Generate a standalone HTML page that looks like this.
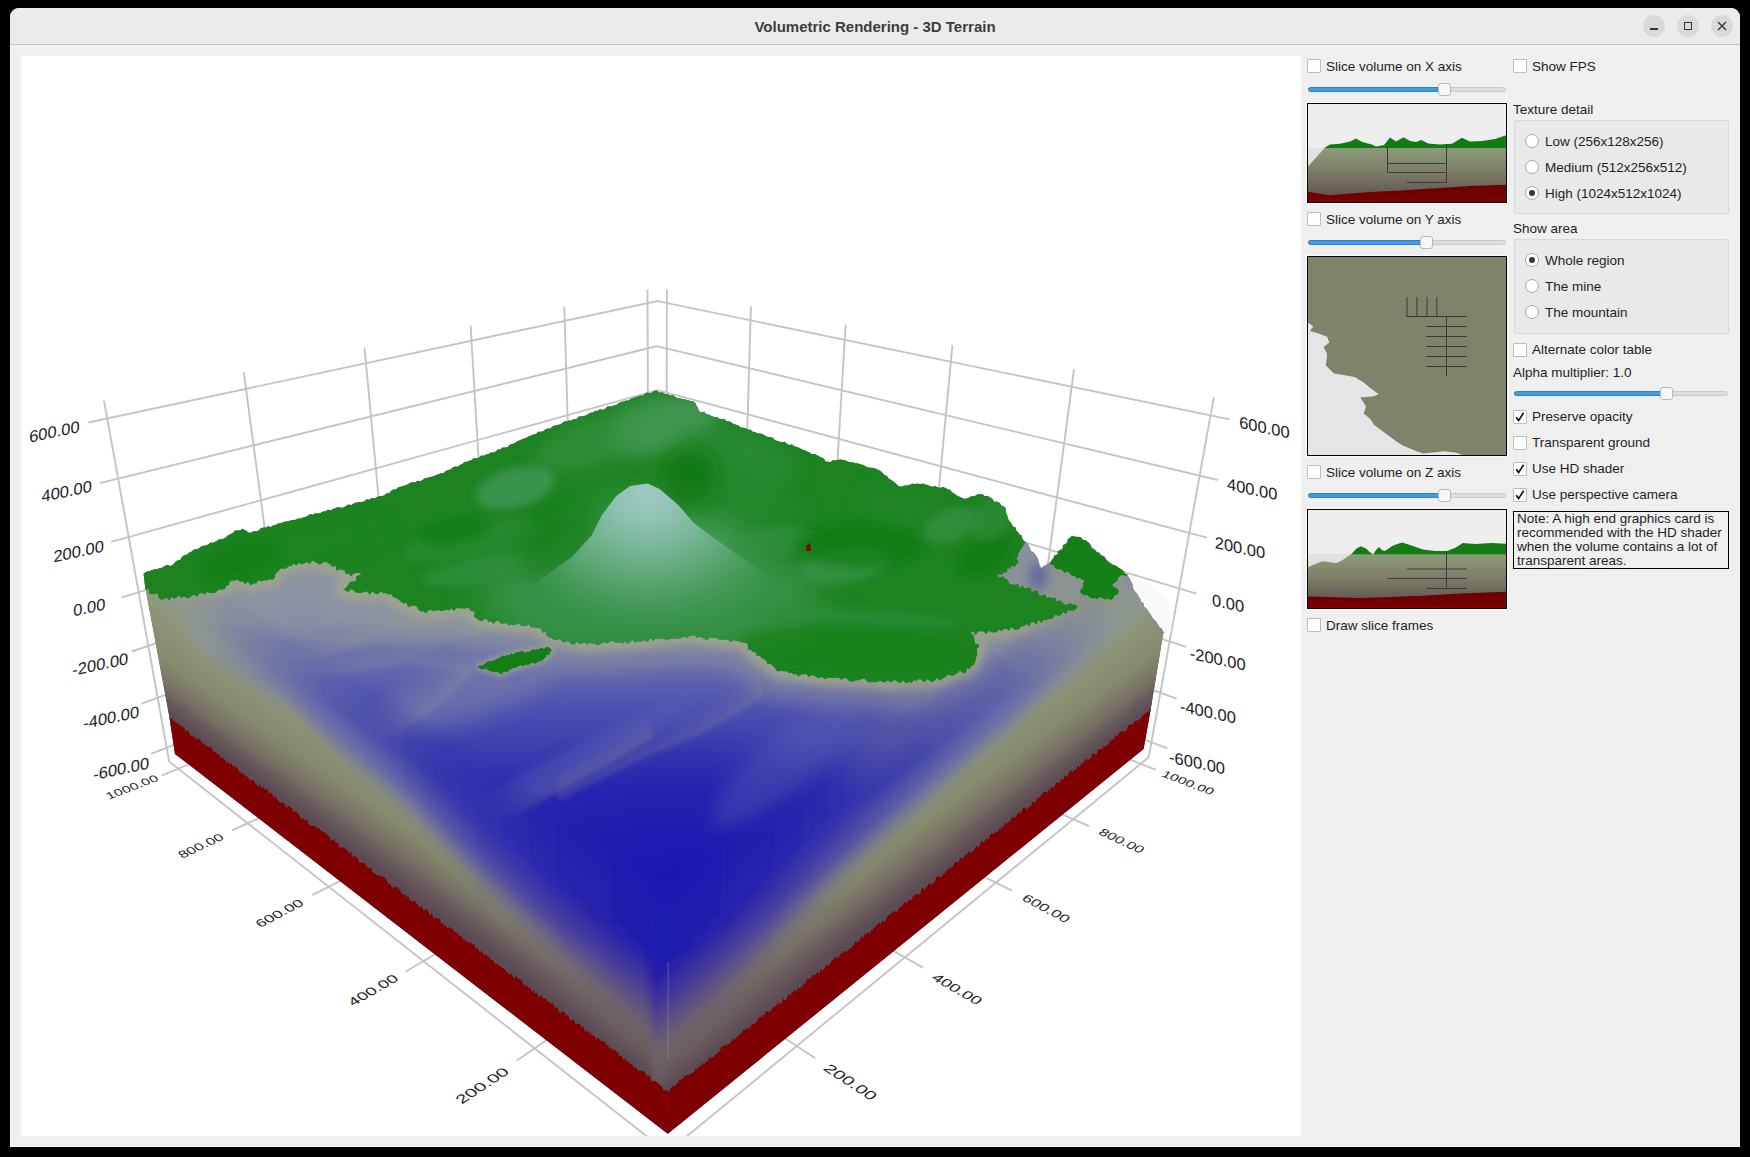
<!DOCTYPE html>
<html><head><meta charset="utf-8"><style>
html,body{margin:0;padding:0;width:1750px;height:1157px;overflow:hidden;background:#000;}
*{box-sizing:border-box;}
body{font-family:"Liberation Sans",sans-serif;position:relative;}
#win{position:absolute;left:10px;top:8px;width:1730px;height:1139px;background:#efefef;border-radius:9px 9px 0 0;overflow:hidden;}
#tb{position:absolute;left:10px;top:8px;width:1730px;height:37px;background:#ebebeb;border-bottom:1px solid #c6c6c6;border-radius:9px 9px 0 0;}
#title{position:absolute;left:0;width:1730px;top:10px;text-align:center;font-weight:bold;font-size:15px;color:#3d3d3d;line-height:17px;}
.wb{position:absolute;top:7px;width:22px;height:22px;border-radius:11px;background:#d9d9d9;}
#plot{position:absolute;left:21px;top:56px;width:1280px;height:1080px;background:#fff;overflow:hidden;}
.t{position:absolute;font-size:13.5px;color:#1e1e1e;white-space:nowrap;line-height:16px;}
.cb{position:absolute;width:14px;height:14px;background:#fff;border:1px solid #bcbcbc;border-radius:1px;}
.rb{position:absolute;width:14px;height:14px;background:#fff;border:1px solid #a9a9a9;border-radius:50%;}
.rb.on::after{content:"";position:absolute;left:3px;top:3px;width:6px;height:6px;border-radius:50%;background:#353535;}
.sl{position:absolute;height:5px;border-radius:3px;background:#dedede;border:1px solid #cacaca;}
.sl .f{position:absolute;left:-1px;top:-1px;height:5px;border-radius:3px;background:#3f9be3;border:1px solid #2f80c4;}
.sl .h{position:absolute;top:-5px;width:13px;height:13px;border-radius:3px;background:#f7f7f7;border:1px solid #b8b8b8;}
.grp{position:absolute;background:#e9e9e9;border:1px solid #d8d8d8;border-radius:2px;}
.prev{position:absolute;overflow:hidden;}
</style></head><body>
<div id="win"></div>
<div style="position:absolute;left:10px;top:44px;width:1px;height:1103px;background:#fafafa"></div>
<div style="position:absolute;left:1739px;top:44px;width:1px;height:1103px;background:#fafafa"></div>
<div style="position:absolute;left:10px;top:1146px;width:1730px;height:1px;background:#fafafa"></div>
<div id="tb">
  <div id="title">Volumetric Rendering - 3D Terrain</div>
  <div class="wb" style="left:1633px"><div style="position:absolute;left:7px;top:13px;width:8px;height:1.6px;background:#333"></div></div>
  <div class="wb" style="left:1667px"><div style="position:absolute;left:7px;top:7px;width:8px;height:8px;border:1.3px solid #333"></div></div>
  <div class="wb" style="left:1701px"><svg width="22" height="22" style="position:absolute;left:0;top:0"><path d="M7 7 L15 15 M15 7 L7 15" stroke="#333" stroke-width="1.3"/></svg></div>
</div>
<div id="plot"><svg width="1280" height="1080" viewBox="21 56 1280 1080" style="position:absolute;left:0;top:0">
<defs>
<filter id="b2" filterUnits="userSpaceOnUse" x="0" y="0" width="1800" height="1200"><feGaussianBlur stdDeviation="2"/></filter>
<filter id="b35" filterUnits="userSpaceOnUse" x="0" y="0" width="1800" height="1200"><feGaussianBlur stdDeviation="3.5"/></filter>
<filter id="b5" filterUnits="userSpaceOnUse" x="0" y="0" width="1800" height="1200"><feGaussianBlur stdDeviation="5"/></filter>
<filter id="b10" filterUnits="userSpaceOnUse" x="0" y="0" width="1800" height="1200"><feGaussianBlur stdDeviation="10"/></filter>
<filter id="b20" filterUnits="userSpaceOnUse" x="0" y="0" width="1800" height="1200"><feGaussianBlur stdDeviation="20"/></filter>
</defs>
<line x1="104.0" y1="400.3" x2="169.2" y2="761.6" stroke="#c4c4c4" stroke-width="1.9" fill="none" stroke-linecap="butt"/>
<line x1="243.8" y1="372.5" x2="287.7" y2="700.0" stroke="#c4c4c4" stroke-width="1.9" fill="none" stroke-linecap="butt"/>
<line x1="364.5" y1="347.7" x2="397.7" y2="700.0" stroke="#c4c4c4" stroke-width="1.9" fill="none" stroke-linecap="butt"/>
<line x1="470.6" y1="325.7" x2="493.0" y2="700.0" stroke="#c4c4c4" stroke-width="1.9" fill="none" stroke-linecap="butt"/>
<line x1="564.3" y1="306.7" x2="576.1" y2="700.0" stroke="#c4c4c4" stroke-width="1.9" fill="none" stroke-linecap="butt"/>
<line x1="647.5" y1="289.4" x2="649.0" y2="700.0" stroke="#c4c4c4" stroke-width="1.9" fill="none" stroke-linecap="butt"/>
<line x1="666.9" y1="289.4" x2="665.9" y2="700.0" stroke="#c4c4c4" stroke-width="1.9" fill="none" stroke-linecap="butt"/>
<line x1="750.9" y1="306.2" x2="739.5" y2="700.0" stroke="#c4c4c4" stroke-width="1.9" fill="none" stroke-linecap="butt"/>
<line x1="845.6" y1="324.7" x2="823.3" y2="700.0" stroke="#c4c4c4" stroke-width="1.9" fill="none" stroke-linecap="butt"/>
<line x1="952.4" y1="345.4" x2="919.1" y2="700.0" stroke="#c4c4c4" stroke-width="1.9" fill="none" stroke-linecap="butt"/>
<line x1="1074.0" y1="369.5" x2="1029.8" y2="700.0" stroke="#c4c4c4" stroke-width="1.9" fill="none" stroke-linecap="butt"/>
<line x1="1213.8" y1="397.3" x2="1148.7" y2="757.3" stroke="#c4c4c4" stroke-width="1.9" fill="none" stroke-linecap="butt"/>
<line x1="88.4" y1="422.5" x2="657.5" y2="301.0" stroke="#c4c4c4" stroke-width="1.9" fill="none" stroke-linecap="butt"/>
<line x1="99.8" y1="483.1" x2="657.5" y2="346.0" stroke="#c4c4c4" stroke-width="1.9" fill="none" stroke-linecap="butt"/>
<line x1="111.2" y1="541.8" x2="657.5" y2="390.2" stroke="#c4c4c4" stroke-width="1.9" fill="none" stroke-linecap="butt"/>
<line x1="122.0" y1="597.3" x2="657.5" y2="432.4" stroke="#c4c4c4" stroke-width="1.9" fill="none" stroke-linecap="butt"/>
<line x1="131.7" y1="651.5" x2="657.5" y2="473.9" stroke="#c4c4c4" stroke-width="1.9" fill="none" stroke-linecap="butt"/>
<line x1="141.6" y1="703.7" x2="657.5" y2="514.5" stroke="#c4c4c4" stroke-width="1.9" fill="none" stroke-linecap="butt"/>
<line x1="151.1" y1="753.8" x2="657.5" y2="553.7" stroke="#c4c4c4" stroke-width="1.9" fill="none" stroke-linecap="butt"/>
<line x1="1229.7" y1="419.4" x2="656.5" y2="300.9" stroke="#c4c4c4" stroke-width="1.9" fill="none" stroke-linecap="butt"/>
<line x1="1217.8" y1="480.0" x2="656.5" y2="346.2" stroke="#c4c4c4" stroke-width="1.9" fill="none" stroke-linecap="butt"/>
<line x1="1206.8" y1="537.7" x2="656.5" y2="389.8" stroke="#c4c4c4" stroke-width="1.9" fill="none" stroke-linecap="butt"/>
<line x1="1196.5" y1="593.7" x2="656.5" y2="432.5" stroke="#c4c4c4" stroke-width="1.9" fill="none" stroke-linecap="butt"/>
<line x1="1186.1" y1="646.8" x2="656.5" y2="473.6" stroke="#c4c4c4" stroke-width="1.9" fill="none" stroke-linecap="butt"/>
<line x1="1176.7" y1="698.6" x2="656.5" y2="513.8" stroke="#c4c4c4" stroke-width="1.9" fill="none" stroke-linecap="butt"/>
<line x1="1167.4" y1="748.4" x2="656.5" y2="553.0" stroke="#c4c4c4" stroke-width="1.9" fill="none" stroke-linecap="butt"/>
<line x1="169.2" y1="761.6" x2="647.0" y2="1136.5" stroke="#c4c4c4" stroke-width="1.9" fill="none" stroke-linecap="butt"/>
<line x1="1148.7" y1="757.3" x2="686.5" y2="1136.5" stroke="#c4c4c4" stroke-width="1.9" fill="none" stroke-linecap="butt"/>
<line x1="161.9" y1="775.4" x2="212.9" y2="754.6" stroke="#c4c4c4" stroke-width="1.9" fill="none" stroke-linecap="butt"/>
<line x1="232.0" y1="830.4" x2="284.3" y2="806.6" stroke="#c4c4c4" stroke-width="1.9" fill="none" stroke-linecap="butt"/>
<line x1="312.4" y1="895.2" x2="364.6" y2="868.4" stroke="#c4c4c4" stroke-width="1.9" fill="none" stroke-linecap="butt"/>
<line x1="405.5" y1="971.8" x2="459.7" y2="939.9" stroke="#c4c4c4" stroke-width="1.9" fill="none" stroke-linecap="butt"/>
<line x1="516.6" y1="1060.8" x2="570.1" y2="1023.9" stroke="#c4c4c4" stroke-width="1.9" fill="none" stroke-linecap="butt"/>
<line x1="1156.0" y1="769.8" x2="1106.1" y2="750.1" stroke="#c4c4c4" stroke-width="1.9" fill="none" stroke-linecap="butt"/>
<line x1="1089.0" y1="826.2" x2="1040.0" y2="804.6" stroke="#c4c4c4" stroke-width="1.9" fill="none" stroke-linecap="butt"/>
<line x1="1012.0" y1="890.6" x2="961.3" y2="865.5" stroke="#c4c4c4" stroke-width="1.9" fill="none" stroke-linecap="butt"/>
<line x1="923.0" y1="967.6" x2="868.9" y2="937.0" stroke="#c4c4c4" stroke-width="1.9" fill="none" stroke-linecap="butt"/>
<line x1="815.2" y1="1058.3" x2="761.1" y2="1022.5" stroke="#c4c4c4" stroke-width="1.9" fill="none" stroke-linecap="butt"/>
<text transform="matrix(1.000 -0.213 0.000 1.000 54.4 431.9)" x="0" y="0" text-anchor="middle" dominant-baseline="central" font-family="Liberation Sans" font-size="16.5" fill="#1e1e28">600.00</text>
<text transform="matrix(1.000 -0.213 0.000 1.000 66.7 491.5)" x="0" y="0" text-anchor="middle" dominant-baseline="central" font-family="Liberation Sans" font-size="16.5" fill="#1e1e28">400.00</text>
<text transform="matrix(1.000 -0.213 0.000 1.000 78.6 551.6)" x="0" y="0" text-anchor="middle" dominant-baseline="central" font-family="Liberation Sans" font-size="16.5" fill="#1e1e28">200.00</text>
<text transform="matrix(1.000 -0.213 0.000 1.000 89.3 607.6)" x="0" y="0" text-anchor="middle" dominant-baseline="central" font-family="Liberation Sans" font-size="16.5" fill="#1e1e28">0.00</text>
<text transform="matrix(1.000 -0.213 0.000 1.000 100.3 664.5)" x="0" y="0" text-anchor="middle" dominant-baseline="central" font-family="Liberation Sans" font-size="16.5" fill="#1e1e28">-200.00</text>
<text transform="matrix(1.000 -0.213 0.000 1.000 111.2 717.8)" x="0" y="0" text-anchor="middle" dominant-baseline="central" font-family="Liberation Sans" font-size="16.5" fill="#1e1e28">-400.00</text>
<text transform="matrix(1.000 -0.213 0.000 1.000 121.2 769)" x="0" y="0" text-anchor="middle" dominant-baseline="central" font-family="Liberation Sans" font-size="16.5" fill="#1e1e28">-600.00</text>
<text transform="matrix(0.934 -0.358 0.411 0.566 132 787)" x="0" y="0" text-anchor="middle" dominant-baseline="central" font-family="Liberation Sans" font-size="15" fill="#1e1e28">1000.00</text>
<text transform="matrix(1.000 0.213 0.000 1.000 1264.4 427.7)" x="0" y="0" text-anchor="middle" dominant-baseline="central" font-family="Liberation Sans" font-size="16.5" fill="#1e1e28">600.00</text>
<text transform="matrix(1.000 0.213 0.000 1.000 1252.2 489.5)" x="0" y="0" text-anchor="middle" dominant-baseline="central" font-family="Liberation Sans" font-size="16.5" fill="#1e1e28">400.00</text>
<text transform="matrix(1.000 0.213 0.000 1.000 1240 548)" x="0" y="0" text-anchor="middle" dominant-baseline="central" font-family="Liberation Sans" font-size="16.5" fill="#1e1e28">200.00</text>
<text transform="matrix(1.000 0.213 0.000 1.000 1228.1 603.6)" x="0" y="0" text-anchor="middle" dominant-baseline="central" font-family="Liberation Sans" font-size="16.5" fill="#1e1e28">0.00</text>
<text transform="matrix(1.000 0.213 0.000 1.000 1217.7 659.3)" x="0" y="0" text-anchor="middle" dominant-baseline="central" font-family="Liberation Sans" font-size="16.5" fill="#1e1e28">-200.00</text>
<text transform="matrix(1.000 0.213 0.000 1.000 1207.9 712.2)" x="0" y="0" text-anchor="middle" dominant-baseline="central" font-family="Liberation Sans" font-size="16.5" fill="#1e1e28">-400.00</text>
<text transform="matrix(1.000 0.213 0.000 1.000 1197 763)" x="0" y="0" text-anchor="middle" dominant-baseline="central" font-family="Liberation Sans" font-size="16.5" fill="#1e1e28">-600.00</text>
<text transform="matrix(0.934 0.358 -0.411 0.566 1188.1 782.7)" x="0" y="0" text-anchor="middle" dominant-baseline="central" font-family="Liberation Sans" font-size="15" fill="#1e1e28">1000.00</text>
<text transform="matrix(0.906 -0.423 0.521 0.540 201 846)" x="0" y="0" text-anchor="middle" dominant-baseline="central" font-family="Liberation Sans" font-size="15.5" fill="#1e1e28">800.00</text>
<text transform="matrix(0.883 -0.469 0.549 0.511 279.4 913.4)" x="0" y="0" text-anchor="middle" dominant-baseline="central" font-family="Liberation Sans" font-size="16.5" fill="#1e1e28">600.00</text>
<text transform="matrix(0.866 -0.500 0.566 0.492 373 990)" x="0" y="0" text-anchor="middle" dominant-baseline="central" font-family="Liberation Sans" font-size="17.5" fill="#1e1e28">400.00</text>
<text transform="matrix(0.839 -0.545 0.591 0.462 482.4 1085.7)" x="0" y="0" text-anchor="middle" dominant-baseline="central" font-family="Liberation Sans" font-size="19" fill="#1e1e28">200.00</text>
<text transform="matrix(0.906 0.423 -0.521 0.540 1121.5 841)" x="0" y="0" text-anchor="middle" dominant-baseline="central" font-family="Liberation Sans" font-size="15.5" fill="#1e1e28">800.00</text>
<text transform="matrix(0.883 0.469 -0.549 0.511 1046.2 908.5)" x="0" y="0" text-anchor="middle" dominant-baseline="central" font-family="Liberation Sans" font-size="16.5" fill="#1e1e28">600.00</text>
<text transform="matrix(0.866 0.500 -0.566 0.492 957.2 989)" x="0" y="0" text-anchor="middle" dominant-baseline="central" font-family="Liberation Sans" font-size="17.5" fill="#1e1e28">400.00</text>
<text transform="matrix(0.839 0.545 -0.591 0.462 850.2 1082.2)" x="0" y="0" text-anchor="middle" dominant-baseline="central" font-family="Liberation Sans" font-size="19" fill="#1e1e28">200.00</text><polygon points="1128,574 1163,632 1172,632 1168,600 1150,585" fill="#eef2f7" opacity="0.45"/>
<defs>
<clipPath id="cBody"><polygon points="143.6,573.9 145.8,572.1 148.5,571.3 151.2,570.6 153.8,569.5 156.7,569.2 159.3,568.2 162.1,567.7 164.6,565.9 167.4,565.0 170.6,565.9 173.2,564.5 175.0,562.3 177.2,560.4 180.3,559.7 181.8,557.1 184.0,555.3 186.7,554.7 188.8,552.8 191.4,551.8 193.4,549.7 196.3,549.3 198.9,548.5 201.0,546.6 203.4,545.8 206.0,545.3 208.3,544.4 210.3,542.4 213.2,542.8 215.5,541.6 217.7,540.2 219.9,538.9 222.6,538.9 225.5,537.8 227.5,535.5 230.2,534.3 232.9,532.9 234.9,530.6 237.6,530.4 240.2,530.2 242.6,528.7 245.8,530.5 248.8,532.7 251.4,532.5 253.6,531.1 256.3,531.3 258.7,530.5 260.7,528.2 263.2,527.5 265.8,527.5 268.1,526.2 271.0,527.0 273.2,525.2 275.7,524.9 278.0,523.6 280.6,523.3 283.0,522.3 285.5,521.5 288.1,521.3 290.5,520.4 293.0,519.9 295.6,519.8 298.0,518.6 300.6,518.4 303.0,517.5 305.5,517.1 307.8,515.8 310.0,514.1 312.8,514.7 315.1,513.3 317.9,513.6 320.4,512.9 322.9,511.6 325.5,511.2 327.8,509.7 330.7,510.2 333.2,509.1 335.6,507.9 338.1,506.9 341.0,507.8 343.7,507.5 346.0,505.9 348.4,504.4 351.3,505.0 353.7,503.6 356.1,502.4 358.8,501.9 361.6,502.1 364.2,501.6 366.4,499.3 369.2,499.7 371.5,497.9 374.4,498.4 376.9,497.3 379.1,496.0 381.9,496.0 384.4,495.2 386.4,493.3 389.1,493.2 391.0,490.9 393.2,489.5 395.9,489.5 397.9,487.4 400.4,486.7 402.9,486.1 405.4,485.5 407.7,484.3 409.9,482.9 412.2,481.9 415.1,482.6 417.1,480.8 419.9,481.2 422.2,480.3 424.3,478.6 426.7,477.9 429.1,477.3 431.6,476.7 433.9,475.9 436.3,475.0 438.6,474.1 441.1,473.3 443.7,472.9 445.7,471.0 448.0,469.9 450.6,469.4 452.6,467.5 455.0,466.6 457.9,466.8 459.9,464.9 462.3,464.0 464.3,461.9 467.0,461.7 469.4,460.8 471.8,460.1 473.8,458.1 476.6,458.4 479.0,457.5 481.0,455.6 483.7,455.8 486.0,454.6 488.5,454.1 490.7,452.6 493.3,452.4 495.7,451.6 497.6,449.4 500.3,449.4 502.3,447.5 505.2,447.6 507.8,447.0 509.6,444.7 512.1,444.0 514.6,443.2 516.8,441.6 519.2,440.6 521.5,439.4 524.0,438.5 526.5,437.8 528.7,436.2 531.2,435.5 533.5,434.3 536.1,434.1 538.0,431.8 540.7,431.8 543.2,431.2 545.3,429.5 547.6,428.4 550.4,428.5 552.3,426.5 554.7,425.5 557.2,425.0 559.8,424.5 562.0,423.2 564.1,421.6 566.6,421.2 569.0,420.4 571.7,420.5 573.8,418.9 576.5,418.9 578.4,416.8 580.9,416.2 583.5,416.0 586.0,415.6 588.1,414.0 590.3,412.7 592.9,412.4 595.0,410.9 597.7,410.8 599.8,409.3 602.6,409.7 605.0,408.9 606.9,406.8 609.3,406.2 612.1,406.3 614.3,405.2 616.8,404.7 618.9,403.0 621.1,401.7 623.7,401.6 625.9,400.4 628.6,400.5 630.7,398.7 633.1,398.0 635.5,397.3 637.9,396.5 640.3,395.6 643.0,395.7 644.9,393.5 647.1,392.4 650.1,393.3 652.5,392.3 654.6,390.8 657.0,390.8 659.4,392.5 662.4,392.2 664.9,394.0 667.8,393.9 670.0,395.5 673.0,395.0 675.2,396.9 677.7,397.9 680.3,398.4 682.9,399.0 685.6,399.4 688.0,400.3 690.6,400.9 693.3,401.4 695.5,403.1 696.4,405.8 698.0,408.1 698.6,410.9 701.0,412.4 704.2,411.8 706.3,414.3 709.1,414.8 711.5,416.1 714.2,416.9 717.1,417.0 719.2,418.7 721.8,419.1 724.6,419.0 726.4,421.3 729.2,421.2 731.5,422.4 733.6,424.0 736.1,424.7 738.6,425.4 740.5,427.4 743.2,427.7 745.7,428.2 748.0,429.4 750.6,429.8 752.6,431.8 755.2,431.9 757.4,433.4 760.1,433.4 762.6,434.0 764.8,435.5 767.0,436.8 769.6,437.1 772.3,437.4 774.3,439.5 776.7,440.7 779.3,441.4 781.7,442.3 784.8,441.7 786.8,443.8 789.1,445.1 792.1,444.5 794.3,446.3 797.0,446.9 799.6,447.9 802.0,449.5 804.6,450.3 807.2,451.4 809.7,452.5 811.8,454.2 814.8,453.9 817.0,455.2 819.3,456.5 821.6,457.6 824.0,458.7 825.5,461.5 828.2,461.8 830.8,462.1 833.0,460.1 835.6,460.5 838.1,459.7 840.6,459.6 843.3,459.9 845.8,460.5 848.2,461.7 850.8,462.2 853.5,462.4 856.0,463.3 858.7,463.5 861.0,464.5 863.6,464.9 865.8,466.5 868.2,467.6 870.9,467.7 873.5,467.9 876.0,468.8 878.3,470.0 880.7,471.0 882.6,472.9 884.4,474.9 887.0,476.0 888.5,478.4 890.8,479.8 893.1,481.2 895.3,482.9 897.1,484.8 899.2,486.5 901.9,486.5 904.5,485.5 907.2,485.6 909.8,484.7 912.3,483.8 915.1,483.9 917.7,483.4 920.2,484.2 922.9,483.4 925.3,484.5 927.8,484.9 930.2,486.2 932.7,486.8 935.4,486.1 937.8,487.5 940.4,487.7 943.1,487.1 945.5,488.0 947.8,489.3 950.5,490.0 952.1,492.6 954.6,493.7 956.7,495.4 959.1,496.6 961.5,497.7 964.0,498.8 966.8,498.6 969.3,497.6 971.7,496.1 974.6,496.3 977.0,494.6 979.7,494.2 982.5,494.2 984.6,496.0 987.8,496.1 990.1,497.6 992.5,499.0 994.1,501.7 997.2,501.8 999.8,502.9 1001.4,505.7 1004.1,506.5 1005.8,508.8 1005.5,511.9 1006.9,514.4 1007.6,517.1 1008.4,519.8 1010.3,522.0 1011.7,524.1 1012.9,526.4 1015.7,527.4 1016.0,530.3 1018.0,532.0 1019.2,534.3 1021.7,535.5 1022.2,538.3 1023.5,540.5 1025.7,542.0 1027.9,543.6 1029.1,546.0 1030.2,548.5 1031.3,550.9 1033.8,552.3 1035.4,554.4 1036.9,556.6 1038.0,559.0 1038.8,562.1 1039.7,565.3 1041.2,568.2 1043.4,566.5 1045.7,564.9 1048.0,563.5 1050.4,562.1 1051.8,559.9 1053.6,558.0 1054.7,555.5 1057.0,554.0 1059.4,552.6 1060.2,549.9 1062.4,548.3 1063.2,545.5 1065.6,544.1 1067.4,542.2 1068.9,540.1 1070.4,537.8 1072.0,535.8 1075.1,536.3 1078.2,537.1 1081.3,537.4 1082.7,539.8 1085.7,540.4 1087.8,542.1 1088.9,544.8 1090.6,546.8 1093.1,548.0 1095.2,549.7 1096.8,551.8 1099.5,552.8 1101.4,554.7 1103.5,556.4 1104.9,558.7 1107.3,560.1 1109.0,562.1 1111.6,563.2 1113.4,565.5 1115.5,567.5 1118.5,567.9 1120.4,570.1 1123.0,571.2 1124.9,573.5 1127.6,574.4 1128.5,577.0 1130.1,579.4 1131.2,581.9 1132.6,584.3 1132.7,587.2 1133.7,589.8 1135.4,592.0 1137.3,594.1 1138.6,596.6 1140.2,598.9 1141.0,601.7 1143.6,603.3 1143.7,606.5 1146.1,608.3 1147.7,610.3 1149.0,612.5 1150.8,614.4 1151.7,616.9 1153.3,619.0 1155.3,620.7 1156.9,622.7 1158.1,625.0 1159.4,627.3 1161.7,628.8 1162.7,631.2 1164.6,633.0 1163.3,632.9 1150.8,708.6 1143.6,749.0 667.8,1133.8 175.0,753.9 169.5,717.6 145.4,588.1"/></clipPath>
<linearGradient id="gSea" gradientUnits="userSpaceOnUse" x1="0" y1="620" x2="0" y2="940"><stop offset="0" stop-color="#8890a8"/><stop offset="0.1" stop-color="#6c72ac"/><stop offset="0.3" stop-color="#4a4cb0"/><stop offset="0.55" stop-color="#2c2ab0"/><stop offset="1" stop-color="#1c16ae"/></linearGradient>
<radialGradient id="gDeep" gradientUnits="userSpaceOnUse" cx="680" cy="880" r="200" gradientTransform="translate(680 880) scale(1.3 0.8) translate(-680 -880)"><stop offset="0" stop-color="#1a14b0" stop-opacity="0.9"/><stop offset="0.6" stop-color="#1e1aae" stop-opacity="0.5"/><stop offset="1" stop-color="#2420ac" stop-opacity="0"/></radialGradient>
</defs>
<polygon points="143.6,573.9 145.8,572.1 148.5,571.3 151.2,570.6 153.8,569.5 156.7,569.2 159.3,568.2 162.1,567.7 164.6,565.9 167.4,565.0 170.6,565.9 173.2,564.5 175.0,562.3 177.2,560.4 180.3,559.7 181.8,557.1 184.0,555.3 186.7,554.7 188.8,552.8 191.4,551.8 193.4,549.7 196.3,549.3 198.9,548.5 201.0,546.6 203.4,545.8 206.0,545.3 208.3,544.4 210.3,542.4 213.2,542.8 215.5,541.6 217.7,540.2 219.9,538.9 222.6,538.9 225.5,537.8 227.5,535.5 230.2,534.3 232.9,532.9 234.9,530.6 237.6,530.4 240.2,530.2 242.6,528.7 245.8,530.5 248.8,532.7 251.4,532.5 253.6,531.1 256.3,531.3 258.7,530.5 260.7,528.2 263.2,527.5 265.8,527.5 268.1,526.2 271.0,527.0 273.2,525.2 275.7,524.9 278.0,523.6 280.6,523.3 283.0,522.3 285.5,521.5 288.1,521.3 290.5,520.4 293.0,519.9 295.6,519.8 298.0,518.6 300.6,518.4 303.0,517.5 305.5,517.1 307.8,515.8 310.0,514.1 312.8,514.7 315.1,513.3 317.9,513.6 320.4,512.9 322.9,511.6 325.5,511.2 327.8,509.7 330.7,510.2 333.2,509.1 335.6,507.9 338.1,506.9 341.0,507.8 343.7,507.5 346.0,505.9 348.4,504.4 351.3,505.0 353.7,503.6 356.1,502.4 358.8,501.9 361.6,502.1 364.2,501.6 366.4,499.3 369.2,499.7 371.5,497.9 374.4,498.4 376.9,497.3 379.1,496.0 381.9,496.0 384.4,495.2 386.4,493.3 389.1,493.2 391.0,490.9 393.2,489.5 395.9,489.5 397.9,487.4 400.4,486.7 402.9,486.1 405.4,485.5 407.7,484.3 409.9,482.9 412.2,481.9 415.1,482.6 417.1,480.8 419.9,481.2 422.2,480.3 424.3,478.6 426.7,477.9 429.1,477.3 431.6,476.7 433.9,475.9 436.3,475.0 438.6,474.1 441.1,473.3 443.7,472.9 445.7,471.0 448.0,469.9 450.6,469.4 452.6,467.5 455.0,466.6 457.9,466.8 459.9,464.9 462.3,464.0 464.3,461.9 467.0,461.7 469.4,460.8 471.8,460.1 473.8,458.1 476.6,458.4 479.0,457.5 481.0,455.6 483.7,455.8 486.0,454.6 488.5,454.1 490.7,452.6 493.3,452.4 495.7,451.6 497.6,449.4 500.3,449.4 502.3,447.5 505.2,447.6 507.8,447.0 509.6,444.7 512.1,444.0 514.6,443.2 516.8,441.6 519.2,440.6 521.5,439.4 524.0,438.5 526.5,437.8 528.7,436.2 531.2,435.5 533.5,434.3 536.1,434.1 538.0,431.8 540.7,431.8 543.2,431.2 545.3,429.5 547.6,428.4 550.4,428.5 552.3,426.5 554.7,425.5 557.2,425.0 559.8,424.5 562.0,423.2 564.1,421.6 566.6,421.2 569.0,420.4 571.7,420.5 573.8,418.9 576.5,418.9 578.4,416.8 580.9,416.2 583.5,416.0 586.0,415.6 588.1,414.0 590.3,412.7 592.9,412.4 595.0,410.9 597.7,410.8 599.8,409.3 602.6,409.7 605.0,408.9 606.9,406.8 609.3,406.2 612.1,406.3 614.3,405.2 616.8,404.7 618.9,403.0 621.1,401.7 623.7,401.6 625.9,400.4 628.6,400.5 630.7,398.7 633.1,398.0 635.5,397.3 637.9,396.5 640.3,395.6 643.0,395.7 644.9,393.5 647.1,392.4 650.1,393.3 652.5,392.3 654.6,390.8 657.0,390.8 659.4,392.5 662.4,392.2 664.9,394.0 667.8,393.9 670.0,395.5 673.0,395.0 675.2,396.9 677.7,397.9 680.3,398.4 682.9,399.0 685.6,399.4 688.0,400.3 690.6,400.9 693.3,401.4 695.5,403.1 696.4,405.8 698.0,408.1 698.6,410.9 701.0,412.4 704.2,411.8 706.3,414.3 709.1,414.8 711.5,416.1 714.2,416.9 717.1,417.0 719.2,418.7 721.8,419.1 724.6,419.0 726.4,421.3 729.2,421.2 731.5,422.4 733.6,424.0 736.1,424.7 738.6,425.4 740.5,427.4 743.2,427.7 745.7,428.2 748.0,429.4 750.6,429.8 752.6,431.8 755.2,431.9 757.4,433.4 760.1,433.4 762.6,434.0 764.8,435.5 767.0,436.8 769.6,437.1 772.3,437.4 774.3,439.5 776.7,440.7 779.3,441.4 781.7,442.3 784.8,441.7 786.8,443.8 789.1,445.1 792.1,444.5 794.3,446.3 797.0,446.9 799.6,447.9 802.0,449.5 804.6,450.3 807.2,451.4 809.7,452.5 811.8,454.2 814.8,453.9 817.0,455.2 819.3,456.5 821.6,457.6 824.0,458.7 825.5,461.5 828.2,461.8 830.8,462.1 833.0,460.1 835.6,460.5 838.1,459.7 840.6,459.6 843.3,459.9 845.8,460.5 848.2,461.7 850.8,462.2 853.5,462.4 856.0,463.3 858.7,463.5 861.0,464.5 863.6,464.9 865.8,466.5 868.2,467.6 870.9,467.7 873.5,467.9 876.0,468.8 878.3,470.0 880.7,471.0 882.6,472.9 884.4,474.9 887.0,476.0 888.5,478.4 890.8,479.8 893.1,481.2 895.3,482.9 897.1,484.8 899.2,486.5 901.9,486.5 904.5,485.5 907.2,485.6 909.8,484.7 912.3,483.8 915.1,483.9 917.7,483.4 920.2,484.2 922.9,483.4 925.3,484.5 927.8,484.9 930.2,486.2 932.7,486.8 935.4,486.1 937.8,487.5 940.4,487.7 943.1,487.1 945.5,488.0 947.8,489.3 950.5,490.0 952.1,492.6 954.6,493.7 956.7,495.4 959.1,496.6 961.5,497.7 964.0,498.8 966.8,498.6 969.3,497.6 971.7,496.1 974.6,496.3 977.0,494.6 979.7,494.2 982.5,494.2 984.6,496.0 987.8,496.1 990.1,497.6 992.5,499.0 994.1,501.7 997.2,501.8 999.8,502.9 1001.4,505.7 1004.1,506.5 1005.8,508.8 1005.5,511.9 1006.9,514.4 1007.6,517.1 1008.4,519.8 1010.3,522.0 1011.7,524.1 1012.9,526.4 1015.7,527.4 1016.0,530.3 1018.0,532.0 1019.2,534.3 1021.7,535.5 1022.2,538.3 1023.5,540.5 1025.7,542.0 1027.9,543.6 1029.1,546.0 1030.2,548.5 1031.3,550.9 1033.8,552.3 1035.4,554.4 1036.9,556.6 1038.0,559.0 1038.8,562.1 1039.7,565.3 1041.2,568.2 1043.4,566.5 1045.7,564.9 1048.0,563.5 1050.4,562.1 1051.8,559.9 1053.6,558.0 1054.7,555.5 1057.0,554.0 1059.4,552.6 1060.2,549.9 1062.4,548.3 1063.2,545.5 1065.6,544.1 1067.4,542.2 1068.9,540.1 1070.4,537.8 1072.0,535.8 1075.1,536.3 1078.2,537.1 1081.3,537.4 1082.7,539.8 1085.7,540.4 1087.8,542.1 1088.9,544.8 1090.6,546.8 1093.1,548.0 1095.2,549.7 1096.8,551.8 1099.5,552.8 1101.4,554.7 1103.5,556.4 1104.9,558.7 1107.3,560.1 1109.0,562.1 1111.6,563.2 1113.4,565.5 1115.5,567.5 1118.5,567.9 1120.4,570.1 1123.0,571.2 1124.9,573.5 1127.6,574.4 1128.5,577.0 1130.1,579.4 1131.2,581.9 1132.6,584.3 1132.7,587.2 1133.7,589.8 1135.4,592.0 1137.3,594.1 1138.6,596.6 1140.2,598.9 1141.0,601.7 1143.6,603.3 1143.7,606.5 1146.1,608.3 1147.7,610.3 1149.0,612.5 1150.8,614.4 1151.7,616.9 1153.3,619.0 1155.3,620.7 1156.9,622.7 1158.1,625.0 1159.4,627.3 1161.7,628.8 1162.7,631.2 1164.6,633.0 1163.3,632.9 1150.8,708.6 1143.6,749.0 667.8,1133.8 175.0,753.9 169.5,717.6 145.4,588.1" fill="url(#gSea)"/>
<g clip-path="url(#cBody)">
<polyline points="140.0,600.0 145.4,589.8 164.0,599.1 191.7,596.0 222.6,589.8 231.8,580.6 253.4,583.7 275.0,577.5 281.2,568.2 293.5,563.6 315.1,562.1 330.6,564.5 346.0,574.4 361.4,574.4 342.9,589.8 361.4,592.9 386.1,592.9 401.5,602.2 423.1,611.4 469.4,608.3 478.7,620.0 533.7,626.9 556.0,640.3 587.2,644.7 645.1,640.3 689.7,635.8 743.2,642.5 756.6,655.9 778.9,671.5 823.4,678.2 890.3,682.6 934.9,680.4 970.5,669.3 979.4,647.0 970.5,633.6 1001.7,631.4 1046.3,620.2 1080.0,610.0 1120.0,600.0 1165.0,640.0" fill="none" stroke="#949a98" stroke-width="55" stroke-linejoin="round" opacity="0.5" filter="url(#b10)"/>
<polyline points="140.0,600.0 145.4,589.8 164.0,599.1 191.7,596.0 222.6,589.8 231.8,580.6 253.4,583.7 275.0,577.5 281.2,568.2 293.5,563.6 315.1,562.1 330.6,564.5 346.0,574.4 361.4,574.4 342.9,589.8 361.4,592.9 386.1,592.9 401.5,602.2 423.1,611.4 469.4,608.3 478.7,620.0 533.7,626.9 556.0,640.3 587.2,644.7 645.1,640.3 689.7,635.8 743.2,642.5 756.6,655.9 778.9,671.5 823.4,678.2 890.3,682.6 934.9,680.4 970.5,669.3 979.4,647.0 970.5,633.6 1001.7,631.4 1046.3,620.2 1080.0,610.0 1120.0,600.0 1165.0,640.0" fill="none" stroke="#a0a68e" stroke-width="16" stroke-linejoin="round" opacity="0.8" filter="url(#b35)"/>
<rect x="300" y="600" width="800" height="540" fill="url(#gDeep)"/>
<ellipse cx="790" cy="760" rx="100" ry="28" fill="#6a70b0" opacity="0.3" transform="rotate(-40 790 760)" filter="url(#b10)"/>
<ellipse cx="560" cy="770" rx="150" ry="14" fill="#5a5eb0" opacity="0.45" transform="rotate(-28 560 770)" filter="url(#b5)"/>
<ellipse cx="470" cy="690" rx="100" ry="30" fill="#7c84aa" opacity="0.5" transform="rotate(-20 470 690)" filter="url(#b10)"/>
<ellipse cx="930" cy="750" rx="90" ry="45" fill="#868a94" opacity="0.55" transform="rotate(-35 930 750)" filter="url(#b20)"/>
<ellipse cx="1070" cy="660" rx="70" ry="40" fill="#8e9496" opacity="0.6" transform="rotate(-35 1070 660)" filter="url(#b10)"/>
<ellipse cx="1110" cy="612" rx="45" ry="26" fill="#8a9480" opacity="0.75" filter="url(#b10)"/>
<polyline points="1128,576 1140,592 1150,606 1158,620 1163,632" fill="none" stroke="#6a70b0" stroke-width="5" opacity="0.75" filter="url(#b2)"/>
<ellipse cx="1035" cy="592" rx="55" ry="30" transform="rotate(-30 1035 592)" fill="#8e9488" opacity="0.7" filter="url(#b10)"/>
<ellipse cx="1038" cy="576" rx="10" ry="14" fill="#5a60a8" opacity="0.7" filter="url(#b5)"/>
<polyline points="192.9,614.1 278.6,634.1 350.0,642.7 407.1,622.7 464.3,614.1" fill="none" stroke="#9ca292" stroke-width="6" stroke-linejoin="round" stroke-linecap="round" opacity="0.18" filter="url(#b2)"/>
<polyline points="192.9,609.1 278.6,629.1 350.0,637.7 407.1,617.7 464.3,609.1" fill="none" stroke="#9ca292" stroke-width="6" stroke-linejoin="round" stroke-linecap="round" opacity="0.13" filter="url(#b2)"/>
<polyline points="192.9,604.1 278.6,624.1 350.0,632.7 407.1,612.7 464.3,604.1" fill="none" stroke="#9ca292" stroke-width="6" stroke-linejoin="round" stroke-linecap="round" opacity="0.09" filter="url(#b2)"/>
<polyline points="192.9,599.1 278.6,619.1 350.0,627.7 407.1,607.7 464.3,599.1" fill="none" stroke="#9ca292" stroke-width="6" stroke-linejoin="round" stroke-linecap="round" opacity="0.05" filter="url(#b2)"/>
<polyline points="192.9,594.1 278.6,614.1 350.0,622.7 407.1,602.7 464.3,594.1" fill="none" stroke="#9ca292" stroke-width="6" stroke-linejoin="round" stroke-linecap="round" opacity="0.03" filter="url(#b2)"/>
<polyline points="235.7,659.9 307.1,657.0 364.3,642.7 421.4,639.9 478.6,634.1" fill="none" stroke="#9ca292" stroke-width="6" stroke-linejoin="round" stroke-linecap="round" opacity="0.18" filter="url(#b2)"/>
<polyline points="235.7,654.9 307.1,652.0 364.3,637.7 421.4,634.9 478.6,629.1" fill="none" stroke="#9ca292" stroke-width="6" stroke-linejoin="round" stroke-linecap="round" opacity="0.13" filter="url(#b2)"/>
<polyline points="235.7,649.9 307.1,647.0 364.3,632.7 421.4,629.9 478.6,624.1" fill="none" stroke="#9ca292" stroke-width="6" stroke-linejoin="round" stroke-linecap="round" opacity="0.09" filter="url(#b2)"/>
<polyline points="235.7,644.9 307.1,642.0 364.3,627.7 421.4,624.9 478.6,619.1" fill="none" stroke="#9ca292" stroke-width="6" stroke-linejoin="round" stroke-linecap="round" opacity="0.05" filter="url(#b2)"/>
<polyline points="235.7,639.9 307.1,637.0 364.3,622.7 421.4,619.9 478.6,614.1" fill="none" stroke="#9ca292" stroke-width="6" stroke-linejoin="round" stroke-linecap="round" opacity="0.03" filter="url(#b2)"/>
<polyline points="278.6,671.3 350.0,671.3 407.1,659.9 464.3,671.3" fill="none" stroke="#9ca292" stroke-width="6" stroke-linejoin="round" stroke-linecap="round" opacity="0.18" filter="url(#b2)"/>
<polyline points="278.6,666.3 350.0,666.3 407.1,654.9 464.3,666.3" fill="none" stroke="#9ca292" stroke-width="6" stroke-linejoin="round" stroke-linecap="round" opacity="0.13" filter="url(#b2)"/>
<polyline points="278.6,661.3 350.0,661.3 407.1,649.9 464.3,661.3" fill="none" stroke="#9ca292" stroke-width="6" stroke-linejoin="round" stroke-linecap="round" opacity="0.09" filter="url(#b2)"/>
<polyline points="278.6,656.3 350.0,656.3 407.1,644.9 464.3,656.3" fill="none" stroke="#9ca292" stroke-width="6" stroke-linejoin="round" stroke-linecap="round" opacity="0.05" filter="url(#b2)"/>
<polyline points="278.6,651.3 350.0,651.3 407.1,639.9 464.3,651.3" fill="none" stroke="#9ca292" stroke-width="6" stroke-linejoin="round" stroke-linecap="round" opacity="0.03" filter="url(#b2)"/>
<polyline points="478.6,665.6 435.7,705.6 392.9,734.1 350.0,742.7 300.0,737.0" fill="none" stroke="#9ca292" stroke-width="6" stroke-linejoin="round" stroke-linecap="round" opacity="0.18" filter="url(#b2)"/>
<polyline points="478.6,660.6 435.7,700.6 392.9,729.1 350.0,737.7 300.0,732.0" fill="none" stroke="#9ca292" stroke-width="6" stroke-linejoin="round" stroke-linecap="round" opacity="0.13" filter="url(#b2)"/>
<polyline points="478.6,655.6 435.7,695.6 392.9,724.1 350.0,732.7 300.0,727.0" fill="none" stroke="#9ca292" stroke-width="6" stroke-linejoin="round" stroke-linecap="round" opacity="0.09" filter="url(#b2)"/>
<polyline points="478.6,650.6 435.7,690.6 392.9,719.1 350.0,727.7 300.0,722.0" fill="none" stroke="#9ca292" stroke-width="6" stroke-linejoin="round" stroke-linecap="round" opacity="0.05" filter="url(#b2)"/>
<polyline points="478.6,645.6 435.7,685.6 392.9,714.1 350.0,722.7 300.0,717.0" fill="none" stroke="#9ca292" stroke-width="6" stroke-linejoin="round" stroke-linecap="round" opacity="0.03" filter="url(#b2)"/>
<polyline points="650.0,737.0 550.0,794.1 492.9,825.6 435.7,862.7" fill="none" stroke="#9ca292" stroke-width="6" stroke-linejoin="round" stroke-linecap="round" opacity="0.18" filter="url(#b2)"/>
<polyline points="650.0,732.0 550.0,789.1 492.9,820.6 435.7,857.7" fill="none" stroke="#9ca292" stroke-width="6" stroke-linejoin="round" stroke-linecap="round" opacity="0.13" filter="url(#b2)"/>
<polyline points="650.0,727.0 550.0,784.1 492.9,815.6 435.7,852.7" fill="none" stroke="#9ca292" stroke-width="6" stroke-linejoin="round" stroke-linecap="round" opacity="0.09" filter="url(#b2)"/>
<polyline points="650.0,722.0 550.0,779.1 492.9,810.6 435.7,847.7" fill="none" stroke="#9ca292" stroke-width="6" stroke-linejoin="round" stroke-linecap="round" opacity="0.05" filter="url(#b2)"/>
<polyline points="650.0,717.0 550.0,774.1 492.9,805.6 435.7,842.7" fill="none" stroke="#9ca292" stroke-width="6" stroke-linejoin="round" stroke-linecap="round" opacity="0.03" filter="url(#b2)"/>
<polyline points="760.0,697.0 700.0,732.0 640.0,757.0 560.0,797.0" fill="none" stroke="#9ca292" stroke-width="6" stroke-linejoin="round" stroke-linecap="round" opacity="0.18" filter="url(#b2)"/>
<polyline points="760.0,692.0 700.0,727.0 640.0,752.0 560.0,792.0" fill="none" stroke="#9ca292" stroke-width="6" stroke-linejoin="round" stroke-linecap="round" opacity="0.13" filter="url(#b2)"/>
<polyline points="760.0,687.0 700.0,722.0 640.0,747.0 560.0,787.0" fill="none" stroke="#9ca292" stroke-width="6" stroke-linejoin="round" stroke-linecap="round" opacity="0.09" filter="url(#b2)"/>
<polyline points="760.0,682.0 700.0,717.0 640.0,742.0 560.0,782.0" fill="none" stroke="#9ca292" stroke-width="6" stroke-linejoin="round" stroke-linecap="round" opacity="0.05" filter="url(#b2)"/>
<polyline points="760.0,677.0 700.0,712.0 640.0,737.0 560.0,777.0" fill="none" stroke="#9ca292" stroke-width="6" stroke-linejoin="round" stroke-linecap="round" opacity="0.03" filter="url(#b2)"/>
<polyline points="975.0,637.0 1020.0,669.0 1058.0,694.0" fill="none" stroke="#9ca292" stroke-width="6" stroke-linejoin="round" stroke-linecap="round" opacity="0.18" filter="url(#b2)"/>
<polyline points="975.0,632.0 1020.0,664.0 1058.0,689.0" fill="none" stroke="#9ca292" stroke-width="6" stroke-linejoin="round" stroke-linecap="round" opacity="0.13" filter="url(#b2)"/>
<polyline points="975.0,627.0 1020.0,659.0 1058.0,684.0" fill="none" stroke="#9ca292" stroke-width="6" stroke-linejoin="round" stroke-linecap="round" opacity="0.09" filter="url(#b2)"/>
<polyline points="975.0,622.0 1020.0,654.0 1058.0,679.0" fill="none" stroke="#9ca292" stroke-width="6" stroke-linejoin="round" stroke-linecap="round" opacity="0.05" filter="url(#b2)"/>
<polyline points="975.0,617.0 1020.0,649.0 1058.0,674.0" fill="none" stroke="#9ca292" stroke-width="6" stroke-linejoin="round" stroke-linecap="round" opacity="0.03" filter="url(#b2)"/>
<polyline points="1000.0,717.0 940.0,757.0 880.0,787.0" fill="none" stroke="#9ca292" stroke-width="6" stroke-linejoin="round" stroke-linecap="round" opacity="0.18" filter="url(#b2)"/>
<polyline points="1000.0,712.0 940.0,752.0 880.0,782.0" fill="none" stroke="#9ca292" stroke-width="6" stroke-linejoin="round" stroke-linecap="round" opacity="0.13" filter="url(#b2)"/>
<polyline points="1000.0,707.0 940.0,747.0 880.0,777.0" fill="none" stroke="#9ca292" stroke-width="6" stroke-linejoin="round" stroke-linecap="round" opacity="0.09" filter="url(#b2)"/>
<polyline points="1000.0,702.0 940.0,742.0 880.0,772.0" fill="none" stroke="#9ca292" stroke-width="6" stroke-linejoin="round" stroke-linecap="round" opacity="0.05" filter="url(#b2)"/>
<polyline points="1000.0,697.0 940.0,737.0 880.0,767.0" fill="none" stroke="#9ca292" stroke-width="6" stroke-linejoin="round" stroke-linecap="round" opacity="0.03" filter="url(#b2)"/>
</g>
<mask id="mL" maskUnits="userSpaceOnUse" x="0" y="0" width="1800" height="1200"><linearGradient id="mgL" gradientUnits="userSpaceOnUse" x1="431.1" y1="718.7" x2="404.5" y2="759.9"><stop offset="0" stop-color="#fff" stop-opacity="0"/><stop offset="1" stop-color="#fff" stop-opacity="1"/></linearGradient><rect x="0" y="0" width="1800" height="1200" fill="url(#mgL)"/></mask>
<g clip-path="url(#cBody)"><g mask="url(#mL)"><g filter="url(#b35)" shape-rendering="crispEdges">
<polygon points="114,524 130,534 132,540 115,530" fill="#91997b"/>
<polygon points="115,529 131,539 132,545 116,535" fill="#91997b"/>
<polygon points="116,534 132,544 133,551 117,540" fill="#91997b"/>
<polygon points="117,539 133,549 134,556 118,545" fill="#91997b"/>
<polygon points="118,544 134,554 135,561 119,550" fill="#91997b"/>
<polygon points="119,549 135,559 136,566 120,555" fill="#91997b"/>
<polygon points="120,554 136,564 137,571 121,560" fill="#91997b"/>
<polygon points="121,559 137,569 138,576 122,565" fill="#91997b"/>
<polygon points="122,564 138,574 139,581 123,570" fill="#91997b"/>
<polygon points="123,569 139,579 140,586 124,575" fill="#91997b"/>
<polygon points="123,574 140,584 141,591 125,580" fill="#90987a"/>
<polygon points="124,579 140,590 142,596 126,585" fill="#8f9779"/>
<polygon points="125,584 141,595 143,601 127,590" fill="#8e9678"/>
<polygon points="126,589 142,600 143,606 127,595" fill="#8d9577"/>
<polygon points="127,594 143,605 144,611 128,600" fill="#8c9376"/>
<polygon points="128,599 144,610 145,616 129,605" fill="#8b9275"/>
<polygon points="129,604 145,615 146,621 130,610" fill="#8b9175"/>
<polygon points="130,609 146,620 147,626 131,615" fill="#8a9074"/>
<polygon points="131,614 147,625 148,631 132,620" fill="#898f73"/>
<polygon points="132,619 148,630 149,636 133,625" fill="#888e72"/>
<polygon points="133,624 149,635 150,641 134,630" fill="#878d71"/>
<polygon points="134,629 150,640 151,646 135,635" fill="#878b6f"/>
<polygon points="135,634 151,645 152,651 136,640" fill="#868a6e"/>
<polygon points="136,639 151,650 153,656 137,645" fill="#85886c"/>
<polygon points="137,644 152,655 153,661 138,650" fill="#82846b"/>
<polygon points="138,649 153,660 154,666 139,655" fill="#80806a"/>
<polygon points="139,654 154,665 155,672 140,660" fill="#7d7b68"/>
<polygon points="139,659 155,670 156,677 141,665" fill="#7a7767"/>
<polygon points="140,664 156,675 157,682 142,670" fill="#777265"/>
<polygon points="141,669 157,680 158,687 143,675" fill="#726a62"/>
<polygon points="142,674 158,685 159,692 143,680" fill="#6d6360"/>
<polygon points="143,679 159,690 160,697 144,685" fill="#695c5d"/>
<polygon points="144,684 160,695 161,702 145,690" fill="#655659"/>
<polygon points="145,689 161,700 162,707 146,695" fill="#605056"/>
<polygon points="146,694 161,705 163,712 147,700" fill="#5d4b54"/>
<polygon points="147,699 162,711 164,717 148,705" fill="#5b4953"/>
<polygon points="148,704 163,716 164,722 149,710" fill="#5a4852"/>
<polygon points="149,709 164,721 165,727 150,715" fill="#5a4852"/>
<polygon points="150,714 165,726 166,732 151,720" fill="#5a4852"/>
<polygon points="151,719 166,731 167,737 152,725" fill="#5a4852"/>
<polygon points="128,533 145,543 146,549 129,539" fill="#91997b"/>
<polygon points="129,538 146,548 147,554 130,544" fill="#91997b"/>
<polygon points="130,543 146,553 148,559 131,549" fill="#91997b"/>
<polygon points="131,548 147,558 148,564 132,554" fill="#91997b"/>
<polygon points="132,553 148,563 149,569 133,559" fill="#91997b"/>
<polygon points="133,558 149,568 150,575 134,564" fill="#91997b"/>
<polygon points="134,563 150,573 151,580 135,569" fill="#91997b"/>
<polygon points="135,568 151,578 152,585 136,574" fill="#91997b"/>
<polygon points="136,573 152,583 153,590 137,579" fill="#91997b"/>
<polygon points="137,578 153,588 154,595 138,584" fill="#91997b"/>
<polygon points="137,583 154,593 155,600 139,589" fill="#90987a"/>
<polygon points="138,588 154,599 156,605 140,595" fill="#8f9779"/>
<polygon points="139,593 155,604 156,610 140,600" fill="#8e9678"/>
<polygon points="140,598 156,609 157,615 141,605" fill="#8d9577"/>
<polygon points="141,603 157,614 158,620 142,610" fill="#8c9376"/>
<polygon points="142,608 158,619 159,625 143,615" fill="#8b9275"/>
<polygon points="143,613 159,624 160,630 144,620" fill="#8b9175"/>
<polygon points="144,618 160,629 161,635 145,625" fill="#8a9074"/>
<polygon points="145,623 161,634 162,641 146,630" fill="#898f73"/>
<polygon points="146,628 162,639 163,646 147,635" fill="#888e72"/>
<polygon points="147,633 162,644 164,651 148,640" fill="#878d71"/>
<polygon points="148,639 163,649 164,656 149,645" fill="#878b6f"/>
<polygon points="148,644 164,654 165,661 150,650" fill="#868a6e"/>
<polygon points="149,649 165,659 166,666 151,655" fill="#85886c"/>
<polygon points="150,654 166,665 167,671 151,660" fill="#82846b"/>
<polygon points="151,659 167,670 168,676 152,665" fill="#80806a"/>
<polygon points="152,664 168,675 169,681 153,670" fill="#7d7b68"/>
<polygon points="153,669 169,680 170,686 154,675" fill="#7a7767"/>
<polygon points="154,674 170,685 171,691 155,680" fill="#777265"/>
<polygon points="155,679 170,690 172,696 156,685" fill="#726a62"/>
<polygon points="156,684 171,695 172,701 157,690" fill="#6d6360"/>
<polygon points="157,689 172,700 173,707 158,695" fill="#695c5d"/>
<polygon points="158,694 173,705 174,712 159,700" fill="#655659"/>
<polygon points="159,699 174,710 175,717 160,705" fill="#605056"/>
<polygon points="159,704 175,715 176,722 161,710" fill="#5d4b54"/>
<polygon points="160,709 176,720 177,727 162,715" fill="#5b4953"/>
<polygon points="161,714 177,725 178,732 162,720" fill="#5a4852"/>
<polygon points="162,719 178,731 179,737 163,725" fill="#5a4852"/>
<polygon points="163,724 178,736 180,742 164,731" fill="#5a4852"/>
<polygon points="164,729 179,741 180,747 165,736" fill="#5a4852"/>
<polygon points="143,541 159,551 160,558 144,548" fill="#919a80"/>
<polygon points="143,546 160,556 161,563 145,553" fill="#919a80"/>
<polygon points="144,552 161,562 162,568 145,558" fill="#919a80"/>
<polygon points="145,557 161,567 163,573 146,563" fill="#919a80"/>
<polygon points="146,562 162,572 163,578 147,568" fill="#919a80"/>
<polygon points="147,567 163,577 164,583 148,573" fill="#919a80"/>
<polygon points="148,572 164,582 165,589 149,578" fill="#919a80"/>
<polygon points="149,577 165,587 166,594 150,583" fill="#919a80"/>
<polygon points="150,582 166,592 167,599 151,588" fill="#919a80"/>
<polygon points="151,587 167,597 168,604 152,593" fill="#919a80"/>
<polygon points="151,592 168,603 169,609 153,599" fill="#91997e"/>
<polygon points="152,597 168,608 169,614 153,604" fill="#90987b"/>
<polygon points="153,602 169,613 170,619 154,609" fill="#8f9679"/>
<polygon points="154,607 170,618 171,624 155,614" fill="#8e9578"/>
<polygon points="155,612 171,623 172,629 156,619" fill="#8d9477"/>
<polygon points="156,618 172,628 173,635 157,624" fill="#8c9376"/>
<polygon points="157,623 173,633 174,640 158,629" fill="#8b9175"/>
<polygon points="158,628 174,638 175,645 159,634" fill="#8a9074"/>
<polygon points="159,633 174,643 176,650 160,639" fill="#898f73"/>
<polygon points="159,638 175,649 176,655 161,644" fill="#888e72"/>
<polygon points="160,643 176,654 177,660 161,649" fill="#878d71"/>
<polygon points="161,648 177,659 178,665 162,654" fill="#878b6f"/>
<polygon points="162,653 178,664 179,670 163,659" fill="#868a6e"/>
<polygon points="163,658 179,669 180,675 164,664" fill="#85886c"/>
<polygon points="164,663 180,674 181,681 165,670" fill="#82846b"/>
<polygon points="165,668 180,679 182,686 166,675" fill="#80806a"/>
<polygon points="166,673 181,684 182,691 167,680" fill="#7d7b68"/>
<polygon points="167,678 182,689 183,696 168,685" fill="#7a7767"/>
<polygon points="168,683 183,695 184,701 169,690" fill="#777265"/>
<polygon points="168,689 184,700 185,706 170,695" fill="#726a62"/>
<polygon points="169,694 185,705 186,711 170,700" fill="#6d6360"/>
<polygon points="170,699 186,710 187,716 171,705" fill="#695c5d"/>
<polygon points="171,704 187,715 188,721 172,710" fill="#655659"/>
<polygon points="172,709 187,720 188,727 173,715" fill="#605056"/>
<polygon points="173,714 188,725 189,732 174,720" fill="#5d4b54"/>
<polygon points="174,719 189,730 190,737 175,725" fill="#5b4953"/>
<polygon points="175,724 190,735 191,742 176,730" fill="#5a4852"/>
<polygon points="176,729 191,741 192,747 177,735" fill="#5a4852"/>
<polygon points="176,734 192,746 193,752 178,741" fill="#5a4852"/>
<polygon points="177,739 193,751 194,757 178,746" fill="#5a4852"/>
<polygon points="157,550 173,560 174,567 158,557" fill="#8f988a"/>
<polygon points="158,555 174,565 175,572 159,562" fill="#8f988a"/>
<polygon points="158,560 175,570 176,577 160,567" fill="#8f988a"/>
<polygon points="159,565 176,575 177,582 160,572" fill="#8f988a"/>
<polygon points="160,571 176,581 178,587 161,577" fill="#8f988a"/>
<polygon points="161,576 177,586 178,592 162,582" fill="#8f988a"/>
<polygon points="162,581 178,591 179,597 163,587" fill="#8f988a"/>
<polygon points="163,586 179,596 180,603 164,592" fill="#8f988a"/>
<polygon points="164,591 180,601 181,608 165,597" fill="#8f988a"/>
<polygon points="165,596 181,606 182,613 166,602" fill="#8f988a"/>
<polygon points="165,601 181,612 183,618 167,608" fill="#8f9889"/>
<polygon points="166,606 182,617 183,623 167,613" fill="#8f9885"/>
<polygon points="167,611 183,622 184,628 168,618" fill="#8f9780"/>
<polygon points="168,616 184,627 185,633 169,623" fill="#8e967b"/>
<polygon points="169,622 185,632 186,639 170,628" fill="#8d9478"/>
<polygon points="170,627 186,637 187,644 171,633" fill="#8c9376"/>
<polygon points="171,632 187,642 188,649 172,638" fill="#8b9275"/>
<polygon points="171,637 187,648 188,654 173,643" fill="#8a9174"/>
<polygon points="172,642 188,653 189,659 173,648" fill="#899073"/>
<polygon points="173,647 189,658 190,664 174,654" fill="#888e72"/>
<polygon points="174,652 190,663 191,669 175,659" fill="#878d71"/>
<polygon points="175,657 191,668 192,675 176,664" fill="#878b6f"/>
<polygon points="176,662 192,673 193,680 177,669" fill="#868a6e"/>
<polygon points="177,668 192,678 193,685 178,674" fill="#85886c"/>
<polygon points="178,673 193,684 194,690 179,679" fill="#82846b"/>
<polygon points="178,678 194,689 195,695 180,684" fill="#80806a"/>
<polygon points="179,683 195,694 196,700 180,689" fill="#7d7b68"/>
<polygon points="180,688 196,699 197,706 181,694" fill="#7a7767"/>
<polygon points="181,693 197,704 198,711 182,700" fill="#777265"/>
<polygon points="182,698 197,709 199,716 183,705" fill="#726a62"/>
<polygon points="183,703 198,714 199,721 184,710" fill="#6d6360"/>
<polygon points="184,708 199,720 200,726 185,715" fill="#695c5d"/>
<polygon points="185,714 200,725 201,731 186,720" fill="#655659"/>
<polygon points="185,719 201,730 202,736 186,725" fill="#605056"/>
<polygon points="186,724 202,735 203,742 187,730" fill="#5d4b54"/>
<polygon points="187,729 202,740 204,747 188,735" fill="#5b4953"/>
<polygon points="188,734 203,745 204,752 189,740" fill="#5a4852"/>
<polygon points="189,739 204,750 205,757 190,745" fill="#5a4852"/>
<polygon points="190,744 205,756 206,762 191,751" fill="#5a4852"/>
<polygon points="191,749 206,761 207,767 192,756" fill="#5a4852"/>
<polygon points="171,559 187,569 188,575 172,565" fill="#8e978d"/>
<polygon points="172,564 188,574 189,580 173,570" fill="#8e978d"/>
<polygon points="173,569 189,579 190,586 174,576" fill="#8e978d"/>
<polygon points="173,574 190,584 191,591 175,581" fill="#8e978d"/>
<polygon points="174,579 191,589 192,596 175,586" fill="#8e978d"/>
<polygon points="175,584 191,595 192,601 176,591" fill="#8e978d"/>
<polygon points="176,590 192,600 193,606 177,596" fill="#8e978d"/>
<polygon points="177,595 193,605 194,612 178,601" fill="#8e978d"/>
<polygon points="178,600 194,610 195,617 179,606" fill="#8e978d"/>
<polygon points="179,605 195,615 196,622 180,612" fill="#8e978d"/>
<polygon points="179,610 195,621 196,627 180,617" fill="#8e978d"/>
<polygon points="180,615 196,626 197,632 181,622" fill="#8e978d"/>
<polygon points="181,620 197,631 198,637 182,627" fill="#8e978d"/>
<polygon points="182,626 198,636 199,643 183,632" fill="#8e968a"/>
<polygon points="183,631 199,641 200,648 184,637" fill="#8e9684"/>
<polygon points="184,636 200,646 201,653 185,642" fill="#8d947d"/>
<polygon points="184,641 200,652 201,658 186,648" fill="#8c9378"/>
<polygon points="185,646 201,657 202,663 186,653" fill="#8b9175"/>
<polygon points="186,651 202,662 203,669 187,658" fill="#8a9074"/>
<polygon points="187,656 203,667 204,674 188,663" fill="#898f73"/>
<polygon points="188,662 204,672 205,679 189,668" fill="#888d71"/>
<polygon points="189,667 204,678 205,684 190,673" fill="#878c70"/>
<polygon points="190,672 205,683 206,689 191,678" fill="#868a6e"/>
<polygon points="190,677 206,688 207,694 191,684" fill="#85886c"/>
<polygon points="191,682 207,693 208,700 192,689" fill="#82846b"/>
<polygon points="192,687 208,698 209,705 193,694" fill="#80806a"/>
<polygon points="193,692 209,703 210,710 194,699" fill="#7d7b68"/>
<polygon points="194,698 209,709 210,715 195,704" fill="#7a7767"/>
<polygon points="195,703 210,714 211,720 196,709" fill="#777265"/>
<polygon points="195,708 211,719 212,726 196,714" fill="#726a62"/>
<polygon points="196,713 212,724 213,731 197,720" fill="#6d6360"/>
<polygon points="197,718 213,729 214,736 198,725" fill="#695c5d"/>
<polygon points="198,723 213,735 214,741 199,730" fill="#655659"/>
<polygon points="199,728 214,740 215,746 200,735" fill="#605056"/>
<polygon points="200,734 215,745 216,751 201,740" fill="#5d4b54"/>
<polygon points="200,739 216,750 217,757 202,745" fill="#5b4953"/>
<polygon points="201,744 217,755 218,762 202,750" fill="#5a4852"/>
<polygon points="202,749 217,760 219,767 203,755" fill="#5a4852"/>
<polygon points="203,754 218,766 219,772 204,761" fill="#5a4852"/>
<polygon points="204,759 219,771 220,777 205,766" fill="#5a4852"/>
<polygon points="185,567 202,577 203,584 186,574" fill="#8d9590"/>
<polygon points="186,573 202,583 203,589 187,579" fill="#8d9590"/>
<polygon points="187,578 203,588 204,594 188,584" fill="#8d9590"/>
<polygon points="188,583 204,593 205,600 189,589" fill="#8d9590"/>
<polygon points="188,588 205,598 206,605 189,595" fill="#8d9590"/>
<polygon points="189,593 205,603 206,610 190,600" fill="#8d9590"/>
<polygon points="190,598 206,609 207,615 191,605" fill="#8d9590"/>
<polygon points="191,604 207,614 208,620 192,610" fill="#8d9590"/>
<polygon points="192,609 208,619 209,626 193,615" fill="#8d9590"/>
<polygon points="193,614 209,624 210,631 194,621" fill="#8d9590"/>
<polygon points="193,619 209,630 210,636 194,626" fill="#8d9590"/>
<polygon points="194,624 210,635 211,641 195,631" fill="#8d9591"/>
<polygon points="195,630 211,640 212,647 196,636" fill="#8d9591"/>
<polygon points="196,635 212,645 213,652 197,641" fill="#8d9591"/>
<polygon points="197,640 213,650 214,657 198,646" fill="#8d9590"/>
<polygon points="197,645 213,656 214,662 199,652" fill="#8d958b"/>
<polygon points="198,650 214,661 215,667 199,657" fill="#8c9483"/>
<polygon points="199,655 215,666 216,673 200,662" fill="#8b927b"/>
<polygon points="200,661 216,671 217,678 201,667" fill="#8a9175"/>
<polygon points="201,666 217,676 218,683 202,672" fill="#898f73"/>
<polygon points="202,671 217,682 218,688 203,677" fill="#888e72"/>
<polygon points="202,676 218,687 219,694 203,683" fill="#878c70"/>
<polygon points="203,681 219,692 220,699 204,688" fill="#868a6e"/>
<polygon points="204,686 220,697 221,704 205,693" fill="#85886c"/>
<polygon points="205,692 221,703 222,709 206,698" fill="#83846b"/>
<polygon points="206,697 221,708 222,714 207,703" fill="#80806a"/>
<polygon points="206,702 222,713 223,720 208,709" fill="#7d7b68"/>
<polygon points="207,707 223,718 224,725 208,714" fill="#7a7767"/>
<polygon points="208,712 224,723 225,730 209,719" fill="#777265"/>
<polygon points="209,718 224,729 225,735 210,724" fill="#726a62"/>
<polygon points="210,723 225,734 226,740 211,729" fill="#6d6360"/>
<polygon points="211,728 226,739 227,746 212,734" fill="#695c5d"/>
<polygon points="211,733 227,744 228,751 212,740" fill="#655659"/>
<polygon points="212,738 228,750 229,756 213,745" fill="#605056"/>
<polygon points="213,743 228,755 229,761 214,750" fill="#5d4b54"/>
<polygon points="214,749 229,760 230,767 215,755" fill="#5b4953"/>
<polygon points="215,754 230,765 231,772 216,760" fill="#5a4852"/>
<polygon points="215,759 231,770 232,777 217,766" fill="#5a4852"/>
<polygon points="216,764 232,776 233,782 217,771" fill="#5a4852"/>
<polygon points="217,769 232,781 233,787 218,776" fill="#5a4852"/>
<polygon points="199,576 216,586 217,593 200,583" fill="#899194"/>
<polygon points="200,581 217,591 217,598 201,588" fill="#899194"/>
<polygon points="201,586 217,597 218,603 202,593" fill="#899194"/>
<polygon points="202,592 218,602 219,608 203,598" fill="#899194"/>
<polygon points="203,597 219,607 220,614 204,603" fill="#899194"/>
<polygon points="203,602 220,612 221,619 204,609" fill="#899194"/>
<polygon points="204,607 220,618 221,624 205,614" fill="#899194"/>
<polygon points="205,613 221,623 222,629 206,619" fill="#899194"/>
<polygon points="206,618 222,628 223,635 207,624" fill="#899194"/>
<polygon points="207,623 223,633 224,640 208,630" fill="#899194"/>
<polygon points="207,628 223,639 224,645 208,635" fill="#899194"/>
<polygon points="208,633 224,644 225,650 209,640" fill="#899194"/>
<polygon points="209,639 225,649 226,656 210,645" fill="#8a9195"/>
<polygon points="210,644 226,654 227,661 211,650" fill="#8a9295"/>
<polygon points="211,649 226,660 227,666 212,656" fill="#8a9292"/>
<polygon points="211,654 227,665 228,671 212,661" fill="#8b928b"/>
<polygon points="212,659 228,670 229,677 213,666" fill="#8b9282"/>
<polygon points="213,665 229,675 230,682 214,671" fill="#8b927a"/>
<polygon points="214,670 230,681 231,687 215,676" fill="#8a9174"/>
<polygon points="215,675 230,686 231,692 216,682" fill="#898f73"/>
<polygon points="215,680 231,691 232,698 216,687" fill="#888e72"/>
<polygon points="216,686 232,696 233,703 217,692" fill="#878c70"/>
<polygon points="217,691 233,702 234,708 218,697" fill="#868a6e"/>
<polygon points="218,696 233,707 234,713 219,703" fill="#85886c"/>
<polygon points="218,701 234,712 235,719 219,708" fill="#82846b"/>
<polygon points="219,706 235,717 236,724 220,713" fill="#80806a"/>
<polygon points="220,712 236,723 237,729 221,718" fill="#7d7b68"/>
<polygon points="221,717 236,728 237,734 222,723" fill="#7a7767"/>
<polygon points="222,722 237,733 238,740 223,729" fill="#777265"/>
<polygon points="222,727 238,738 239,745 223,734" fill="#726a62"/>
<polygon points="223,732 239,744 240,750 224,739" fill="#6d6360"/>
<polygon points="224,738 240,749 241,755 225,744" fill="#695c5d"/>
<polygon points="225,743 240,754 241,761 226,749" fill="#655659"/>
<polygon points="226,748 241,759 242,766 227,755" fill="#605056"/>
<polygon points="226,753 242,765 243,771 227,760" fill="#5d4b54"/>
<polygon points="227,759 243,770 244,777 228,765" fill="#5b4953"/>
<polygon points="228,764 243,775 244,782 229,770" fill="#5a4852"/>
<polygon points="229,769 244,780 245,787 230,776" fill="#5a4852"/>
<polygon points="230,774 245,786 246,792 231,781" fill="#5a4852"/>
<polygon points="230,779 246,791 247,798 231,786" fill="#5a4852"/>
<polygon points="214,585 230,595 231,601 215,591" fill="#838b97"/>
<polygon points="214,590 231,600 232,607 215,597" fill="#838b97"/>
<polygon points="215,595 231,605 232,612 216,602" fill="#838b97"/>
<polygon points="216,600 232,611 233,617 217,607" fill="#838b97"/>
<polygon points="217,606 233,616 234,623 218,612" fill="#838b97"/>
<polygon points="217,611 234,621 235,628 218,618" fill="#838b97"/>
<polygon points="218,616 234,626 235,633 219,623" fill="#838b97"/>
<polygon points="219,621 235,632 236,638 220,628" fill="#838b97"/>
<polygon points="220,627 236,637 237,644 221,633" fill="#838b97"/>
<polygon points="221,632 237,642 238,649 222,639" fill="#838b97"/>
<polygon points="221,637 237,648 238,654 222,644" fill="#848b97"/>
<polygon points="222,642 238,653 239,660 223,649" fill="#848c98"/>
<polygon points="223,648 239,658 240,665 224,654" fill="#858c98"/>
<polygon points="224,653 240,663 241,670 225,660" fill="#868d97"/>
<polygon points="224,658 240,669 241,675 225,665" fill="#878f92"/>
<polygon points="225,663 241,674 242,681 226,670" fill="#899089"/>
<polygon points="226,669 242,679 243,686 227,675" fill="#8a9180"/>
<polygon points="227,674 243,685 244,691 228,681" fill="#8b9178"/>
<polygon points="227,679 243,690 244,697 228,686" fill="#8a9074"/>
<polygon points="228,684 244,695 245,702 229,691" fill="#898f73"/>
<polygon points="229,690 245,700 246,707 230,696" fill="#888e72"/>
<polygon points="230,695 246,706 247,712 231,702" fill="#878c70"/>
<polygon points="231,700 246,711 247,718 232,707" fill="#868a6e"/>
<polygon points="231,705 247,716 248,723 232,712" fill="#85886c"/>
<polygon points="232,711 248,722 249,728 233,717" fill="#82846b"/>
<polygon points="233,716 249,727 249,734 234,723" fill="#80806a"/>
<polygon points="234,721 249,732 250,739 235,728" fill="#7d7b68"/>
<polygon points="234,726 250,737 251,744 235,733" fill="#7a7767"/>
<polygon points="235,732 251,743 252,749 236,738" fill="#777265"/>
<polygon points="236,737 252,748 252,755 237,744" fill="#726a62"/>
<polygon points="237,742 252,753 253,760 238,749" fill="#6d6360"/>
<polygon points="238,747 253,759 254,765 238,754" fill="#695c5d"/>
<polygon points="238,753 254,764 255,771 239,759" fill="#655659"/>
<polygon points="239,758 254,769 255,776 240,765" fill="#605056"/>
<polygon points="240,763 255,774 256,781 241,770" fill="#5d4b54"/>
<polygon points="241,768 256,780 257,786 242,775" fill="#5b4953"/>
<polygon points="241,774 257,785 258,792 242,780" fill="#5a4852"/>
<polygon points="242,779 257,790 258,797 243,786" fill="#5a4852"/>
<polygon points="243,784 258,796 259,802 244,791" fill="#5a4852"/>
<polygon points="244,789 259,801 260,808 245,796" fill="#5a4852"/>
<polygon points="228,593 244,603 245,610 229,600" fill="#7e859b"/>
<polygon points="229,599 245,609 246,615 230,605" fill="#7e859b"/>
<polygon points="229,604 246,614 247,621 230,611" fill="#7e859b"/>
<polygon points="230,609 246,619 247,626 231,616" fill="#7e859b"/>
<polygon points="231,615 247,625 248,631 232,621" fill="#7e859b"/>
<polygon points="232,620 248,630 249,637 233,626" fill="#7e859b"/>
<polygon points="232,625 249,635 249,642 233,632" fill="#7e859b"/>
<polygon points="233,630 249,641 250,647 234,637" fill="#7e859b"/>
<polygon points="234,636 250,646 251,653 235,642" fill="#7e859b"/>
<polygon points="235,641 251,651 252,658 236,648" fill="#7e859b"/>
<polygon points="235,646 251,657 252,663 236,653" fill="#7f869b"/>
<polygon points="236,652 252,662 253,669 237,658" fill="#80879b"/>
<polygon points="237,657 253,667 254,674 238,663" fill="#81889b"/>
<polygon points="238,662 254,673 254,679 238,669" fill="#828a98"/>
<polygon points="238,667 254,678 255,685 239,674" fill="#858c91"/>
<polygon points="239,673 255,683 256,690 240,679" fill="#888f87"/>
<polygon points="240,678 256,689 257,695 241,685" fill="#8a917e"/>
<polygon points="241,683 256,694 257,701 241,690" fill="#8b9177"/>
<polygon points="241,688 257,699 258,706 242,695" fill="#8a9074"/>
<polygon points="242,694 258,704 259,711 243,700" fill="#898f73"/>
<polygon points="243,699 259,710 259,717 244,706" fill="#888e71"/>
<polygon points="244,704 259,715 260,722 244,711" fill="#878c70"/>
<polygon points="244,710 260,720 261,727 245,716" fill="#868a6e"/>
<polygon points="245,715 261,726 262,732 246,722" fill="#85886c"/>
<polygon points="246,720 261,731 262,738 247,727" fill="#82846b"/>
<polygon points="247,725 262,736 263,743 247,732" fill="#80806a"/>
<polygon points="247,731 263,742 264,748 248,737" fill="#7d7b68"/>
<polygon points="248,736 264,747 265,754 249,743" fill="#7a7767"/>
<polygon points="249,741 264,752 265,759 250,748" fill="#777265"/>
<polygon points="249,747 265,758 266,764 250,753" fill="#726a62"/>
<polygon points="250,752 266,763 267,770 251,759" fill="#6d6360"/>
<polygon points="251,757 266,768 267,775 252,764" fill="#695c5d"/>
<polygon points="252,762 267,774 268,780 253,769" fill="#655659"/>
<polygon points="252,768 268,779 269,786 253,774" fill="#605056"/>
<polygon points="253,773 269,784 270,791 254,780" fill="#5d4b54"/>
<polygon points="254,778 269,790 270,796 255,785" fill="#5b4953"/>
<polygon points="255,784 270,795 271,802 256,790" fill="#5a4852"/>
<polygon points="255,789 271,800 272,807 256,796" fill="#5a4852"/>
<polygon points="256,794 271,806 272,812 257,801" fill="#5a4852"/>
<polygon points="257,799 272,811 273,818 258,806" fill="#5a4852"/>
<polygon points="242,602 258,612 259,619 243,609" fill="#797f9e"/>
<polygon points="243,607 259,617 260,624 244,614" fill="#797f9e"/>
<polygon points="244,613 260,623 261,629 244,619" fill="#797f9e"/>
<polygon points="244,618 261,628 261,635 245,625" fill="#797f9e"/>
<polygon points="245,623 261,633 262,640 246,630" fill="#797f9e"/>
<polygon points="246,629 262,639 263,646 247,635" fill="#797f9e"/>
<polygon points="246,634 263,644 263,651 247,641" fill="#797f9e"/>
<polygon points="247,639 263,650 264,656 248,646" fill="#797f9e"/>
<polygon points="248,645 264,655 265,662 249,651" fill="#797f9e"/>
<polygon points="249,650 265,660 266,667 249,657" fill="#797f9e"/>
<polygon points="249,655 265,666 266,672 250,662" fill="#7a809e"/>
<polygon points="250,661 266,671 267,678 251,667" fill="#7b829e"/>
<polygon points="251,666 267,676 268,683 252,673" fill="#7c839e"/>
<polygon points="251,671 267,682 268,688 252,678" fill="#808799"/>
<polygon points="252,677 268,687 269,694 253,683" fill="#848b90"/>
<polygon points="253,682 269,692 270,699 254,689" fill="#878e86"/>
<polygon points="254,687 270,698 270,705 255,694" fill="#8a917c"/>
<polygon points="254,692 270,703 271,710 255,699" fill="#8b9176"/>
<polygon points="255,698 271,708 272,715 256,704" fill="#8a9074"/>
<polygon points="256,703 272,714 272,721 257,710" fill="#898f73"/>
<polygon points="257,708 272,719 273,726 257,715" fill="#888d71"/>
<polygon points="257,714 273,725 274,731 258,720" fill="#878c70"/>
<polygon points="258,719 274,730 275,737 259,726" fill="#868a6e"/>
<polygon points="259,724 274,735 275,742 260,731" fill="#85886c"/>
<polygon points="259,730 275,741 276,747 260,736" fill="#82846b"/>
<polygon points="260,735 276,746 277,753 261,742" fill="#80806a"/>
<polygon points="261,740 276,751 277,758 262,747" fill="#7d7b68"/>
<polygon points="262,746 277,757 278,763 262,752" fill="#7a7767"/>
<polygon points="262,751 278,762 279,769 263,758" fill="#777265"/>
<polygon points="263,756 279,767 279,774 264,763" fill="#726a62"/>
<polygon points="264,762 279,773 280,780 265,768" fill="#6d6360"/>
<polygon points="264,767 280,778 281,785 265,774" fill="#695c5d"/>
<polygon points="265,772 281,783 282,790 266,779" fill="#655659"/>
<polygon points="266,778 281,789 282,796 267,784" fill="#605056"/>
<polygon points="267,783 282,794 283,801 268,790" fill="#5d4b54"/>
<polygon points="267,788 283,800 284,806 268,795" fill="#5b4953"/>
<polygon points="268,793 283,805 284,812 269,800" fill="#5a4852"/>
<polygon points="269,799 284,810 285,817 270,806" fill="#5a4852"/>
<polygon points="270,804 285,816 286,822 270,811" fill="#5a4852"/>
<polygon points="270,809 285,821 286,828 271,816" fill="#5a4852"/>
<polygon points="256,611 273,621 273,627 257,617" fill="#747aa1"/>
<polygon points="257,616 273,626 274,633 258,623" fill="#747aa1"/>
<polygon points="258,621 274,631 275,638 259,628" fill="#747aa1"/>
<polygon points="258,627 275,637 275,644 259,634" fill="#747aa1"/>
<polygon points="259,632 275,642 276,649 260,639" fill="#747aa1"/>
<polygon points="260,637 276,648 277,654 261,644" fill="#747aa1"/>
<polygon points="260,643 277,653 278,660 261,650" fill="#747aa1"/>
<polygon points="261,648 277,658 278,665 262,655" fill="#747aa1"/>
<polygon points="262,654 278,664 279,671 263,660" fill="#747aa1"/>
<polygon points="263,659 279,669 280,676 263,666" fill="#747aa1"/>
<polygon points="263,664 279,675 280,681 264,671" fill="#757ba1"/>
<polygon points="264,670 280,680 281,687 265,676" fill="#777da1"/>
<polygon points="265,675 281,685 282,692 266,682" fill="#797fa0"/>
<polygon points="265,680 281,691 282,698 266,687" fill="#7d8499"/>
<polygon points="266,686 282,696 283,703 267,692" fill="#828990"/>
<polygon points="267,691 283,702 284,708 268,698" fill="#878e85"/>
<polygon points="267,696 283,707 284,714 268,703" fill="#8a917b"/>
<polygon points="268,702 284,712 285,719 269,708" fill="#8b9175"/>
<polygon points="269,707 285,718 286,725 270,714" fill="#8a9074"/>
<polygon points="270,712 285,723 286,730 270,719" fill="#898f73"/>
<polygon points="270,718 286,729 287,735 271,725" fill="#888d71"/>
<polygon points="271,723 287,734 288,741 272,730" fill="#878c70"/>
<polygon points="272,728 287,739 288,746 273,735" fill="#868a6e"/>
<polygon points="272,734 288,745 289,752 273,741" fill="#85886c"/>
<polygon points="273,739 289,750 290,757 274,746" fill="#82846b"/>
<polygon points="274,745 289,756 290,762 275,751" fill="#80806a"/>
<polygon points="274,750 290,761 291,768 275,757" fill="#7d7b68"/>
<polygon points="275,755 291,766 292,773 276,762" fill="#7a7767"/>
<polygon points="276,761 291,772 292,778 277,767" fill="#777265"/>
<polygon points="277,766 292,777 293,784 277,773" fill="#726a62"/>
<polygon points="277,771 293,782 294,789 278,778" fill="#6d6360"/>
<polygon points="278,777 293,788 294,795 279,783" fill="#695c5d"/>
<polygon points="279,782 294,793 295,800 280,789" fill="#655659"/>
<polygon points="279,787 295,799 296,805 280,794" fill="#605056"/>
<polygon points="280,793 295,804 296,811 281,799" fill="#5d4b54"/>
<polygon points="281,798 296,809 297,816 282,805" fill="#5b4953"/>
<polygon points="281,803 297,815 298,822 282,810" fill="#5a4852"/>
<polygon points="282,809 297,820 298,827 283,816" fill="#5a4852"/>
<polygon points="283,814 298,826 299,832 284,821" fill="#5a4852"/>
<polygon points="284,819 299,831 300,838 284,826" fill="#5a4852"/>
<polygon points="271,619 287,629 288,636 271,626" fill="#6f75a5"/>
<polygon points="271,625 288,635 288,642 272,632" fill="#6f75a5"/>
<polygon points="272,630 288,640 289,647 273,637" fill="#6f75a5"/>
<polygon points="273,636 289,646 290,652 273,642" fill="#6f75a5"/>
<polygon points="273,641 289,651 290,658 274,648" fill="#6f75a5"/>
<polygon points="274,646 290,656 291,663 275,653" fill="#6f75a5"/>
<polygon points="275,652 291,662 292,669 275,659" fill="#6f75a5"/>
<polygon points="275,657 291,667 292,674 276,664" fill="#6f75a5"/>
<polygon points="276,662 292,673 293,680 277,669" fill="#6f75a5"/>
<polygon points="277,668 293,678 293,685 277,675" fill="#6f75a5"/>
<polygon points="277,673 293,684 294,690 278,680" fill="#7076a5"/>
<polygon points="278,679 294,689 295,696 279,685" fill="#7278a5"/>
<polygon points="279,684 295,694 295,701 279,691" fill="#767ca2"/>
<polygon points="279,689 295,700 296,707 280,696" fill="#7c8299"/>
<polygon points="280,695 296,705 297,712 281,702" fill="#82888f"/>
<polygon points="281,700 297,711 297,718 281,707" fill="#878d83"/>
<polygon points="281,706 297,716 298,723 282,712" fill="#8a917a"/>
<polygon points="282,711 298,722 299,728 283,718" fill="#8b9175"/>
<polygon points="283,716 298,727 299,734 283,723" fill="#8a9074"/>
<polygon points="283,722 299,732 300,739 284,729" fill="#898f73"/>
<polygon points="284,727 300,738 301,745 285,734" fill="#888d71"/>
<polygon points="285,733 300,743 301,750 286,739" fill="#878c6f"/>
<polygon points="285,738 301,749 302,756 286,745" fill="#868a6e"/>
<polygon points="286,743 302,754 303,761 287,750" fill="#85886c"/>
<polygon points="287,749 302,760 303,766 288,755" fill="#82846b"/>
<polygon points="287,754 303,765 304,772 288,761" fill="#80806a"/>
<polygon points="288,759 304,770 304,777 289,766" fill="#7d7b68"/>
<polygon points="289,765 304,776 305,783 290,772" fill="#7a7767"/>
<polygon points="289,770 305,781 306,788 290,777" fill="#777265"/>
<polygon points="290,776 306,787 306,794 291,782" fill="#726a62"/>
<polygon points="291,781 306,792 307,799 292,788" fill="#6d6360"/>
<polygon points="291,786 307,798 308,804 292,793" fill="#695c5d"/>
<polygon points="292,792 308,803 308,810 293,799" fill="#655659"/>
<polygon points="293,797 308,808 309,815 294,804" fill="#605056"/>
<polygon points="293,803 309,814 310,821 294,809" fill="#5d4b54"/>
<polygon points="294,808 309,819 310,826 295,815" fill="#5b4953"/>
<polygon points="295,813 310,825 311,832 296,820" fill="#5a4852"/>
<polygon points="295,819 311,830 312,837 296,826" fill="#5a4852"/>
<polygon points="296,824 311,836 312,842 297,831" fill="#5a4852"/>
<polygon points="297,830 312,841 313,848 298,836" fill="#5a4852"/>
<polygon points="285,628 301,638 302,645 286,635" fill="#696ea8"/>
<polygon points="285,633 302,643 302,650 286,640" fill="#696ea8"/>
<polygon points="286,639 302,649 303,656 287,646" fill="#696ea8"/>
<polygon points="287,644 303,654 304,661 288,651" fill="#696ea8"/>
<polygon points="287,650 304,660 304,667 288,657" fill="#696ea8"/>
<polygon points="288,655 304,665 305,672 289,662" fill="#696ea8"/>
<polygon points="289,661 305,671 306,678 289,667" fill="#696ea8"/>
<polygon points="289,666 305,676 306,683 290,673" fill="#696ea8"/>
<polygon points="290,671 306,682 307,689 291,678" fill="#696ea8"/>
<polygon points="291,677 307,687 307,694 291,684" fill="#696ea8"/>
<polygon points="291,682 307,693 308,700 292,689" fill="#6a70a8"/>
<polygon points="292,688 308,698 309,705 293,695" fill="#6d72a8"/>
<polygon points="293,693 309,704 309,710 293,700" fill="#7076a6"/>
<polygon points="293,699 309,709 310,716 294,705" fill="#767c9f"/>
<polygon points="294,704 310,714 311,721 295,711" fill="#7d8394"/>
<polygon points="294,709 310,720 311,727 295,716" fill="#838a88"/>
<polygon points="295,715 311,725 312,732 296,722" fill="#888f7d"/>
<polygon points="296,720 312,731 312,738 297,727" fill="#8b9176"/>
<polygon points="296,726 312,736 313,743 297,733" fill="#8a9074"/>
<polygon points="297,731 313,742 314,749 298,738" fill="#898f73"/>
<polygon points="298,737 314,747 314,754 299,743" fill="#888d71"/>
<polygon points="298,742 314,753 315,760 299,749" fill="#878c70"/>
<polygon points="299,747 315,758 316,765 300,754" fill="#868a6e"/>
<polygon points="300,753 315,764 316,771 300,760" fill="#85886c"/>
<polygon points="300,758 316,769 317,776 301,765" fill="#82846b"/>
<polygon points="301,764 317,775 317,781 302,770" fill="#80806a"/>
<polygon points="302,769 317,780 318,787 302,776" fill="#7d7b68"/>
<polygon points="302,774 318,786 319,792 303,781" fill="#7a7767"/>
<polygon points="303,780 318,791 319,798 304,787" fill="#777265"/>
<polygon points="304,785 319,796 320,803 304,792" fill="#726a62"/>
<polygon points="304,791 320,802 321,809 305,798" fill="#6d6360"/>
<polygon points="305,796 320,807 321,814 306,803" fill="#695c5d"/>
<polygon points="306,802 321,813 322,820 306,808" fill="#655659"/>
<polygon points="306,807 322,818 322,825 307,814" fill="#605056"/>
<polygon points="307,812 322,824 323,831 308,819" fill="#5d4b54"/>
<polygon points="307,818 323,829 324,836 308,825" fill="#5b4953"/>
<polygon points="308,823 323,835 324,842 309,830" fill="#5a4852"/>
<polygon points="309,829 324,840 325,847 310,836" fill="#5a4852"/>
<polygon points="309,834 325,846 325,852 310,841" fill="#5a4852"/>
<polygon points="310,840 325,851 326,858 311,846" fill="#5a4852"/>
<polygon points="299,637 315,647 316,654 300,644" fill="#6367a9"/>
<polygon points="300,642 316,652 317,659 300,649" fill="#6367a9"/>
<polygon points="300,648 316,658 317,665 301,655" fill="#6367a9"/>
<polygon points="301,653 317,663 318,670 302,660" fill="#6367a9"/>
<polygon points="301,659 318,669 318,676 302,665" fill="#6367a9"/>
<polygon points="302,664 318,674 319,681 303,671" fill="#6367a9"/>
<polygon points="303,669 319,680 320,687 303,676" fill="#6367a9"/>
<polygon points="303,675 319,685 320,692 304,682" fill="#6367a9"/>
<polygon points="304,680 320,691 321,698 305,687" fill="#6367a9"/>
<polygon points="305,686 321,696 321,703 305,693" fill="#6367a9"/>
<polygon points="305,691 321,702 322,709 306,698" fill="#656aa9"/>
<polygon points="306,697 322,707 323,714 307,704" fill="#686da9"/>
<polygon points="306,702 322,713 323,720 307,709" fill="#6b70a8"/>
<polygon points="307,708 323,718 324,725 308,715" fill="#6f74a6"/>
<polygon points="308,713 324,724 324,731 308,720" fill="#757b9e"/>
<polygon points="308,719 324,729 325,736 309,725" fill="#7d8393"/>
<polygon points="309,724 325,735 326,742 310,731" fill="#838986"/>
<polygon points="310,729 325,740 326,747 310,736" fill="#888e7c"/>
<polygon points="310,735 326,746 327,753 311,742" fill="#8a9075"/>
<polygon points="311,740 327,751 327,758 312,747" fill="#898f73"/>
<polygon points="311,746 327,757 328,764 312,753" fill="#888e72"/>
<polygon points="312,751 328,762 329,769 313,758" fill="#878c70"/>
<polygon points="313,757 328,768 329,775 313,764" fill="#868a6e"/>
<polygon points="313,762 329,773 330,780 314,769" fill="#85886c"/>
<polygon points="314,768 330,779 330,786 315,775" fill="#82846b"/>
<polygon points="315,773 330,784 331,791 315,780" fill="#80806a"/>
<polygon points="315,779 331,790 332,797 316,786" fill="#7d7b68"/>
<polygon points="316,784 331,795 332,802 317,791" fill="#7a7767"/>
<polygon points="316,790 332,801 333,808 317,796" fill="#777265"/>
<polygon points="317,795 333,806 333,813 318,802" fill="#726a62"/>
<polygon points="318,800 333,812 334,819 318,807" fill="#6d6360"/>
<polygon points="318,806 334,817 335,824 319,813" fill="#695c5d"/>
<polygon points="319,811 334,823 335,830 320,818" fill="#655659"/>
<polygon points="320,817 335,828 336,835 320,824" fill="#605056"/>
<polygon points="320,822 336,834 336,841 321,829" fill="#5d4b54"/>
<polygon points="321,828 336,839 337,846 322,835" fill="#5b4953"/>
<polygon points="321,833 337,845 338,852 322,840" fill="#5a4852"/>
<polygon points="322,839 337,850 338,857 323,846" fill="#5a4852"/>
<polygon points="323,844 338,856 339,863 323,851" fill="#5a4852"/>
<polygon points="323,850 339,861 339,868 324,856" fill="#5a4852"/>
<polygon points="313,645 330,655 330,662 314,652" fill="#5d61a9"/>
<polygon points="314,651 330,661 331,668 315,658" fill="#5d61a9"/>
<polygon points="314,656 331,666 331,673 315,663" fill="#5d61a9"/>
<polygon points="315,662 331,672 332,679 316,669" fill="#5d61a9"/>
<polygon points="316,667 332,677 333,684 316,674" fill="#5d61a9"/>
<polygon points="316,673 332,683 333,690 317,680" fill="#5d61a9"/>
<polygon points="317,678 333,689 334,696 318,685" fill="#5d61a9"/>
<polygon points="317,684 334,694 334,701 318,691" fill="#5d61a9"/>
<polygon points="318,689 334,700 335,707 319,696" fill="#5d61a9"/>
<polygon points="319,695 335,705 335,712 319,702" fill="#5d61a9"/>
<polygon points="319,700 335,711 336,718 320,707" fill="#6064a9"/>
<polygon points="320,706 336,716 337,723 321,713" fill="#6367a9"/>
<polygon points="320,711 336,722 337,729 321,718" fill="#666ba9"/>
<polygon points="321,717 337,727 338,734 322,724" fill="#696ea8"/>
<polygon points="322,722 338,733 338,740 322,729" fill="#6e74a4"/>
<polygon points="322,728 338,738 339,745 323,735" fill="#757b9c"/>
<polygon points="323,733 339,744 339,751 324,740" fill="#7d8390"/>
<polygon points="323,739 339,749 340,756 324,746" fill="#838984"/>
<polygon points="324,744 340,755 341,762 325,751" fill="#878e7a"/>
<polygon points="325,750 340,760 341,767 325,757" fill="#898f74"/>
<polygon points="325,755 341,766 342,773 326,762" fill="#888e72"/>
<polygon points="326,761 342,772 342,779 327,768" fill="#878c70"/>
<polygon points="326,766 342,777 343,784 327,773" fill="#868a6e"/>
<polygon points="327,772 343,783 343,790 328,779" fill="#85896d"/>
<polygon points="328,777 343,788 344,795 328,784" fill="#83846b"/>
<polygon points="328,783 344,794 345,801 329,790" fill="#80806a"/>
<polygon points="329,788 344,799 345,806 330,795" fill="#7d7b68"/>
<polygon points="329,794 345,805 346,812 330,801" fill="#7a7767"/>
<polygon points="330,799 346,810 346,817 331,806" fill="#777265"/>
<polygon points="331,805 346,816 347,823 331,812" fill="#726a62"/>
<polygon points="331,810 347,821 347,828 332,817" fill="#6d6360"/>
<polygon points="332,816 347,827 348,834 333,823" fill="#695c5d"/>
<polygon points="332,821 348,832 349,839 333,828" fill="#655659"/>
<polygon points="333,827 348,838 349,845 334,834" fill="#605056"/>
<polygon points="334,832 349,843 350,850 334,839" fill="#5d4b54"/>
<polygon points="334,838 350,849 350,856 335,845" fill="#5b4953"/>
<polygon points="335,843 350,855 351,862 336,850" fill="#5a4852"/>
<polygon points="335,849 351,860 351,867 336,856" fill="#5a4852"/>
<polygon points="336,854 351,866 352,873 337,861" fill="#5a4852"/>
<polygon points="337,860 352,871 353,878 337,867" fill="#5a4852"/>
<polygon points="327,654 344,664 344,671 328,661" fill="#595caa"/>
<polygon points="328,660 344,670 345,677 329,667" fill="#595caa"/>
<polygon points="329,665 345,675 346,682 329,672" fill="#595caa"/>
<polygon points="329,671 345,681 346,688 330,678" fill="#595caa"/>
<polygon points="330,676 346,686 347,693 330,683" fill="#595caa"/>
<polygon points="330,682 346,692 347,699 331,689" fill="#595caa"/>
<polygon points="331,687 347,697 348,704 332,694" fill="#595caa"/>
<polygon points="331,693 348,703 348,710 332,700" fill="#595caa"/>
<polygon points="332,698 348,709 349,716 333,705" fill="#595caa"/>
<polygon points="333,704 349,714 349,721 333,711" fill="#595caa"/>
<polygon points="333,709 349,720 350,727 334,716" fill="#5b5fa9"/>
<polygon points="334,715 350,725 350,732 334,722" fill="#5f63a9"/>
<polygon points="334,720 350,731 351,738 335,727" fill="#6367a9"/>
<polygon points="335,726 351,736 352,743 336,733" fill="#666ba8"/>
<polygon points="335,731 351,742 352,749 336,738" fill="#6a6fa6"/>
<polygon points="336,737 352,748 353,755 337,744" fill="#71779f"/>
<polygon points="337,742 353,753 353,760 337,749" fill="#797f95"/>
<polygon points="337,748 353,759 354,766 338,755" fill="#808689"/>
<polygon points="338,754 354,764 354,771 339,761" fill="#858b7e"/>
<polygon points="338,759 354,770 355,777 339,766" fill="#888e76"/>
<polygon points="339,765 355,775 355,782 340,772" fill="#898e72"/>
<polygon points="340,770 355,781 356,788 340,777" fill="#888c70"/>
<polygon points="340,776 356,786 357,794 341,783" fill="#878a6e"/>
<polygon points="341,781 356,792 357,799 341,788" fill="#86896d"/>
<polygon points="341,787 357,798 358,805 342,794" fill="#83846b"/>
<polygon points="342,792 357,803 358,810 343,799" fill="#80806a"/>
<polygon points="342,798 358,809 359,816 343,805" fill="#7d7b68"/>
<polygon points="343,803 359,814 359,821 344,810" fill="#7a7767"/>
<polygon points="344,809 359,820 360,827 344,816" fill="#777265"/>
<polygon points="344,814 360,825 360,833 345,821" fill="#726a62"/>
<polygon points="345,820 360,831 361,838 345,827" fill="#6d6360"/>
<polygon points="345,825 361,837 361,844 346,832" fill="#695c5d"/>
<polygon points="346,831 361,842 362,849 347,838" fill="#655659"/>
<polygon points="346,836 362,848 363,855 347,843" fill="#605056"/>
<polygon points="347,842 362,853 363,860 348,849" fill="#5d4b54"/>
<polygon points="348,848 363,859 364,866 348,854" fill="#5b4953"/>
<polygon points="348,853 363,864 364,871 349,860" fill="#5a4852"/>
<polygon points="349,859 364,870 365,877 349,866" fill="#5a4852"/>
<polygon points="349,864 365,876 365,883 350,871" fill="#5a4852"/>
<polygon points="350,870 365,881 366,888 351,877" fill="#5a4852"/>
<polygon points="342,663 358,673 359,680 342,670" fill="#5457aa"/>
<polygon points="342,668 358,678 359,685 343,675" fill="#5457aa"/>
<polygon points="343,674 359,684 360,691 343,681" fill="#5457aa"/>
<polygon points="343,679 360,689 360,697 344,686" fill="#5457aa"/>
<polygon points="344,685 360,695 361,702 345,692" fill="#5457aa"/>
<polygon points="344,691 361,701 361,708 345,698" fill="#5457aa"/>
<polygon points="345,696 361,706 362,713 346,703" fill="#5457aa"/>
<polygon points="345,702 362,712 362,719 346,709" fill="#5457aa"/>
<polygon points="346,707 362,717 363,725 347,714" fill="#5457aa"/>
<polygon points="347,713 363,723 363,730 347,720" fill="#5457aa"/>
<polygon points="347,718 363,729 364,736 348,725" fill="#575aaa"/>
<polygon points="348,724 364,734 364,741 348,731" fill="#5b5ea9"/>
<polygon points="348,729 364,740 365,747 349,736" fill="#5f63a9"/>
<polygon points="349,735 365,745 365,753 349,742" fill="#6367a8"/>
<polygon points="349,741 365,751 366,758 350,748" fill="#676ba7"/>
<polygon points="350,746 366,757 366,764 351,753" fill="#6e72a2"/>
<polygon points="350,752 366,762 367,769 351,759" fill="#757b98"/>
<polygon points="351,757 367,768 368,775 352,764" fill="#7d838d"/>
<polygon points="352,763 367,774 368,781 352,770" fill="#838982"/>
<polygon points="352,768 368,779 369,786 353,775" fill="#878d78"/>
<polygon points="353,774 368,785 369,792 353,781" fill="#898e72"/>
<polygon points="353,780 369,790 370,797 354,787" fill="#888c70"/>
<polygon points="354,785 369,796 370,803 354,792" fill="#878b6f"/>
<polygon points="354,791 370,802 371,809 355,798" fill="#86896d"/>
<polygon points="355,796 371,807 371,814 356,803" fill="#83846b"/>
<polygon points="355,802 371,813 372,820 356,809" fill="#80806a"/>
<polygon points="356,807 372,818 372,825 357,814" fill="#7d7b68"/>
<polygon points="357,813 372,824 373,831 357,820" fill="#7a7767"/>
<polygon points="357,818 373,830 373,837 358,825" fill="#777265"/>
<polygon points="358,824 373,835 374,842 358,831" fill="#726a62"/>
<polygon points="358,830 374,841 374,848 359,837" fill="#6d6360"/>
<polygon points="359,835 374,846 375,853 359,842" fill="#695c5d"/>
<polygon points="359,841 375,852 375,859 360,848" fill="#655659"/>
<polygon points="360,846 375,858 376,865 361,853" fill="#605056"/>
<polygon points="360,852 376,863 376,870 361,859" fill="#5d4b54"/>
<polygon points="361,857 376,869 377,876 362,864" fill="#5b4953"/>
<polygon points="361,863 377,874 377,881 362,870" fill="#5a4852"/>
<polygon points="362,869 377,880 378,887 363,876" fill="#5a4852"/>
<polygon points="363,874 378,886 379,893 363,881" fill="#5a4852"/>
<polygon points="363,880 378,891 379,898 364,887" fill="#5a4852"/>
<polygon points="356,671 372,681 373,688 357,678" fill="#5052aa"/>
<polygon points="356,677 373,687 373,694 357,684" fill="#5052aa"/>
<polygon points="357,683 373,693 374,700 358,690" fill="#5052aa"/>
<polygon points="357,688 374,698 374,705 358,695" fill="#5052aa"/>
<polygon points="358,694 374,704 375,711 359,701" fill="#5052aa"/>
<polygon points="358,699 375,710 375,717 359,706" fill="#5052aa"/>
<polygon points="359,705 375,715 376,722 360,712" fill="#5052aa"/>
<polygon points="360,711 376,721 376,728 360,718" fill="#5052aa"/>
<polygon points="360,716 376,726 377,734 361,723" fill="#5052aa"/>
<polygon points="361,722 377,732 377,739 361,729" fill="#5052aa"/>
<polygon points="361,727 377,738 378,745 362,734" fill="#5255aa"/>
<polygon points="362,733 378,743 378,750 362,740" fill="#5759a9"/>
<polygon points="362,739 378,749 379,756 363,746" fill="#5b5ea9"/>
<polygon points="363,744 379,755 379,762 363,751" fill="#5f63a8"/>
<polygon points="363,750 379,760 380,767 364,757" fill="#6367a8"/>
<polygon points="364,755 380,766 380,773 364,762" fill="#696ea4"/>
<polygon points="364,761 380,772 381,779 365,768" fill="#71769c"/>
<polygon points="365,767 381,777 381,784 365,774" fill="#797f91"/>
<polygon points="365,772 381,783 382,790 366,779" fill="#808686"/>
<polygon points="366,778 382,788 382,796 367,785" fill="#858b7b"/>
<polygon points="366,783 382,794 383,801 367,790" fill="#888d74"/>
<polygon points="367,789 383,800 383,807 368,796" fill="#888d70"/>
<polygon points="367,795 383,805 384,812 368,802" fill="#878b6f"/>
<polygon points="368,800 384,811 384,818 369,807" fill="#86896d"/>
<polygon points="369,806 384,817 385,824 369,813" fill="#83856b"/>
<polygon points="369,811 385,822 385,829 370,818" fill="#80806a"/>
<polygon points="370,817 385,828 386,835 370,824" fill="#7d7b68"/>
<polygon points="370,823 386,834 386,841 371,830" fill="#7a7767"/>
<polygon points="371,828 386,839 387,846 371,835" fill="#777265"/>
<polygon points="371,834 387,845 387,852 372,841" fill="#726a62"/>
<polygon points="372,839 387,850 388,858 372,846" fill="#6d6360"/>
<polygon points="372,845 388,856 388,863 373,852" fill="#695c5d"/>
<polygon points="373,850 388,862 389,869 373,858" fill="#655659"/>
<polygon points="373,856 389,867 389,875 374,863" fill="#605056"/>
<polygon points="374,862 389,873 390,880 374,869" fill="#5d4b54"/>
<polygon points="374,867 390,879 390,886 375,874" fill="#5b4953"/>
<polygon points="375,873 390,884 391,891 376,880" fill="#5a4852"/>
<polygon points="375,878 391,890 391,897 376,886" fill="#5a4852"/>
<polygon points="376,884 391,896 392,903 377,891" fill="#5a4852"/>
<polygon points="376,890 392,901 392,908 377,897" fill="#5a4852"/>
<polygon points="370,680 386,690 387,697 371,687" fill="#4b4cab"/>
<polygon points="371,686 387,696 387,703 371,693" fill="#4b4cab"/>
<polygon points="371,691 387,701 388,708 372,698" fill="#4b4cab"/>
<polygon points="372,697 388,707 388,714 372,704" fill="#4b4cab"/>
<polygon points="372,703 388,713 389,720 373,710" fill="#4b4cab"/>
<polygon points="373,708 389,718 389,726 373,715" fill="#4b4cab"/>
<polygon points="373,714 389,724 390,731 374,721" fill="#4b4cab"/>
<polygon points="374,719 390,730 390,737 374,727" fill="#4b4cab"/>
<polygon points="374,725 390,735 391,743 375,732" fill="#4b4cab"/>
<polygon points="375,731 391,741 391,748 375,738" fill="#4b4cab"/>
<polygon points="375,736 391,747 392,754 376,743" fill="#4d4faa"/>
<polygon points="376,742 392,752 392,760 376,749" fill="#5254aa"/>
<polygon points="376,748 392,758 393,765 377,755" fill="#5659a9"/>
<polygon points="377,753 393,764 393,771 377,760" fill="#5b5ea9"/>
<polygon points="377,759 393,769 394,777 378,766" fill="#6063a8"/>
<polygon points="378,765 394,775 394,782 378,772" fill="#6569a6"/>
<polygon points="378,770 394,781 395,788 379,777" fill="#6d719f"/>
<polygon points="379,776 394,786 395,794 379,783" fill="#757a96"/>
<polygon points="379,781 395,792 396,799 380,789" fill="#7d828a"/>
<polygon points="380,787 395,798 396,805 380,794" fill="#83887f"/>
<polygon points="380,793 396,803 397,811 381,800" fill="#878c76"/>
<polygon points="381,798 396,809 397,816 381,805" fill="#888d71"/>
<polygon points="381,804 397,815 397,822 382,811" fill="#878b6f"/>
<polygon points="382,810 397,820 398,828 382,817" fill="#86896d"/>
<polygon points="382,815 398,826 398,833 383,822" fill="#83856b"/>
<polygon points="383,821 398,832 399,839 383,828" fill="#80806a"/>
<polygon points="383,826 399,837 399,845 384,834" fill="#7d7b68"/>
<polygon points="384,832 399,843 400,850 384,839" fill="#7a7767"/>
<polygon points="384,838 400,849 400,856 385,845" fill="#777265"/>
<polygon points="385,843 400,855 401,862 385,850" fill="#726a62"/>
<polygon points="385,849 401,860 401,867 386,856" fill="#6d6360"/>
<polygon points="386,855 401,866 402,873 386,862" fill="#695c5d"/>
<polygon points="386,860 402,872 402,879 387,867" fill="#655659"/>
<polygon points="387,866 402,877 403,884 387,873" fill="#605056"/>
<polygon points="387,872 403,883 403,890 388,879" fill="#5d4b54"/>
<polygon points="388,877 403,889 404,896 388,884" fill="#5b4953"/>
<polygon points="388,883 404,894 404,901 389,890" fill="#5a4852"/>
<polygon points="389,888 404,900 405,907 389,896" fill="#5a4852"/>
<polygon points="389,894 404,906 405,913 390,901" fill="#5a4852"/>
<polygon points="390,900 405,911 406,918 390,907" fill="#5a4852"/>
<polygon points="384,689 401,699 401,706 385,696" fill="#4646ab"/>
<polygon points="385,694 401,704 402,712 385,702" fill="#4646ab"/>
<polygon points="385,700 402,710 402,717 386,707" fill="#4646ab"/>
<polygon points="386,706 402,716 403,723 386,713" fill="#4646ab"/>
<polygon points="386,711 402,721 403,729 387,719" fill="#4646ab"/>
<polygon points="387,717 403,727 403,734 387,724" fill="#4646ab"/>
<polygon points="387,723 403,733 404,740 388,730" fill="#4646ab"/>
<polygon points="388,728 404,739 404,746 388,736" fill="#4646ab"/>
<polygon points="388,734 404,744 405,752 389,741" fill="#4646ab"/>
<polygon points="389,740 405,750 405,757 389,747" fill="#4646ab"/>
<polygon points="389,745 405,756 406,763 390,753" fill="#4849ab"/>
<polygon points="390,751 406,761 406,769 390,758" fill="#4d4eaa"/>
<polygon points="390,757 406,767 407,774 391,764" fill="#5254a9"/>
<polygon points="391,762 407,773 407,780 391,770" fill="#5759a9"/>
<polygon points="391,768 407,779 408,786 392,775" fill="#5b5ea8"/>
<polygon points="391,774 407,784 408,791 392,781" fill="#6064a7"/>
<polygon points="392,779 408,790 408,797 393,787" fill="#686ca2"/>
<polygon points="392,785 408,796 409,803 393,792" fill="#71759a"/>
<polygon points="393,791 409,801 409,809 394,798" fill="#797e8f"/>
<polygon points="393,796 409,807 410,814 394,804" fill="#808584"/>
<polygon points="394,802 410,813 410,820 394,809" fill="#858a79"/>
<polygon points="394,808 410,819 411,826 395,815" fill="#878c72"/>
<polygon points="395,813 411,824 411,831 395,821" fill="#878b6f"/>
<polygon points="395,819 411,830 412,837 396,826" fill="#86896d"/>
<polygon points="396,825 411,836 412,843 396,832" fill="#83856c"/>
<polygon points="396,830 412,841 412,849 397,838" fill="#80806a"/>
<polygon points="397,836 412,847 413,854 397,843" fill="#7d7c68"/>
<polygon points="397,842 413,853 413,860 398,849" fill="#7a7767"/>
<polygon points="398,847 413,858 414,866 398,855" fill="#777265"/>
<polygon points="398,853 414,864 414,871 399,860" fill="#726a62"/>
<polygon points="399,859 414,870 415,877 399,866" fill="#6d6360"/>
<polygon points="399,864 415,876 415,883 400,872" fill="#695c5d"/>
<polygon points="400,870 415,881 416,889 400,877" fill="#655659"/>
<polygon points="400,876 416,887 416,894 401,883" fill="#605056"/>
<polygon points="401,881 416,893 417,900 401,889" fill="#5d4b54"/>
<polygon points="401,887 416,898 417,906 402,894" fill="#5b4953"/>
<polygon points="402,893 417,904 417,911 402,900" fill="#5a4852"/>
<polygon points="402,898 417,910 418,917 403,906" fill="#5a4852"/>
<polygon points="402,904 418,916 418,923 403,911" fill="#5a4852"/>
<polygon points="403,910 418,921 419,928 404,917" fill="#5a4852"/>
<polygon points="399,697 415,707 415,715 399,705" fill="#4041ab"/>
<polygon points="399,703 415,713 416,720 400,710" fill="#4041ab"/>
<polygon points="399,709 416,719 416,726 400,716" fill="#4041ab"/>
<polygon points="400,714 416,725 417,732 400,722" fill="#4041ab"/>
<polygon points="400,720 417,730 417,738 401,727" fill="#4041ab"/>
<polygon points="401,726 417,736 418,743 401,733" fill="#4041ab"/>
<polygon points="401,732 417,742 418,749 402,739" fill="#4041ab"/>
<polygon points="402,737 418,748 418,755 402,744" fill="#4041ab"/>
<polygon points="402,743 418,753 419,761 403,750" fill="#4041ab"/>
<polygon points="403,749 419,759 419,766 403,756" fill="#4041ab"/>
<polygon points="403,754 419,765 420,772 404,762" fill="#4343ab"/>
<polygon points="404,760 420,770 420,778 404,767" fill="#4748aa"/>
<polygon points="404,766 420,776 421,783 405,773" fill="#4c4daa"/>
<polygon points="404,771 420,782 421,789 405,779" fill="#5153a9"/>
<polygon points="405,777 421,788 421,795 405,784" fill="#5759a8"/>
<polygon points="405,783 421,793 422,801 406,790" fill="#5c5ea8"/>
<polygon points="406,789 422,799 422,806 406,796" fill="#6265a5"/>
<polygon points="406,794 422,805 423,812 407,802" fill="#6b6e9e"/>
<polygon points="407,800 423,811 423,818 407,807" fill="#747894"/>
<polygon points="407,806 423,816 424,824 408,813" fill="#7b8089"/>
<polygon points="408,811 423,822 424,829 408,819" fill="#81867e"/>
<polygon points="408,817 424,828 424,835 409,824" fill="#868a75"/>
<polygon points="409,823 424,834 425,841 409,830" fill="#878b6f"/>
<polygon points="409,829 425,839 425,847 410,836" fill="#86896d"/>
<polygon points="409,834 425,845 426,852 410,841" fill="#83856c"/>
<polygon points="410,840 426,851 426,858 410,847" fill="#80806a"/>
<polygon points="410,846 426,857 426,864 411,853" fill="#7d7c69"/>
<polygon points="411,851 426,862 427,870 411,859" fill="#7a7767"/>
<polygon points="411,857 427,868 427,875 412,864" fill="#777265"/>
<polygon points="412,863 427,874 428,881 412,870" fill="#726a62"/>
<polygon points="412,868 428,880 428,887 413,876" fill="#6d6360"/>
<polygon points="413,874 428,885 429,893 413,881" fill="#695c5d"/>
<polygon points="413,880 429,891 429,898 414,887" fill="#655659"/>
<polygon points="414,886 429,897 429,904 414,893" fill="#605056"/>
<polygon points="414,891 429,903 430,910 415,898" fill="#5d4b54"/>
<polygon points="414,897 430,908 430,916 415,904" fill="#5b4953"/>
<polygon points="415,903 430,914 431,921 415,910" fill="#5a4852"/>
<polygon points="415,908 431,920 431,927 416,916" fill="#5a4852"/>
<polygon points="416,914 431,926 432,933 416,921" fill="#5a4852"/>
<polygon points="416,920 432,931 432,939 417,927" fill="#5a4852"/>
<polygon points="413,706 429,716 430,723 413,713" fill="#3c3cac"/>
<polygon points="413,712 429,722 430,729 414,719" fill="#3c3cac"/>
<polygon points="414,717 430,728 430,735 414,725" fill="#3c3cac"/>
<polygon points="414,723 430,733 431,741 415,730" fill="#3c3cac"/>
<polygon points="414,729 431,739 431,746 415,736" fill="#3c3cac"/>
<polygon points="415,735 431,745 432,752 415,742" fill="#3c3cac"/>
<polygon points="415,740 431,751 432,758 416,748" fill="#3c3cac"/>
<polygon points="416,746 432,756 432,764 416,753" fill="#3c3cac"/>
<polygon points="416,752 432,762 433,769 417,759" fill="#3c3cac"/>
<polygon points="417,758 433,768 433,775 417,765" fill="#3c3cac"/>
<polygon points="417,763 433,774 434,781 418,771" fill="#3e3eab"/>
<polygon points="417,769 434,780 434,787 418,776" fill="#4242ab"/>
<polygon points="418,775 434,785 434,793 418,782" fill="#4646aa"/>
<polygon points="418,781 434,791 435,798 419,788" fill="#4b4ca9"/>
<polygon points="419,786 435,797 435,804 419,794" fill="#5051a8"/>
<polygon points="419,792 435,803 436,810 420,799" fill="#5657a7"/>
<polygon points="420,798 436,808 436,816 420,805" fill="#5b5ca6"/>
<polygon points="420,804 436,814 436,821 421,811" fill="#6263a3"/>
<polygon points="420,809 436,820 437,827 421,817" fill="#6b6d9c"/>
<polygon points="421,815 437,826 437,833 421,822" fill="#747792"/>
<polygon points="421,821 437,832 438,839 422,828" fill="#7b7f87"/>
<polygon points="422,827 438,837 438,845 422,834" fill="#81857c"/>
<polygon points="422,832 438,843 438,850 423,839" fill="#858973"/>
<polygon points="423,838 438,849 439,856 423,845" fill="#868a6e"/>
<polygon points="423,844 439,855 439,862 424,851" fill="#84856c"/>
<polygon points="423,849 439,860 440,868 424,857" fill="#81816a"/>
<polygon points="424,855 440,866 440,874 424,862" fill="#7d7c69"/>
<polygon points="424,861 440,872 440,879 425,868" fill="#7a7767"/>
<polygon points="425,867 440,878 441,885 425,874" fill="#777265"/>
<polygon points="425,872 441,884 441,891 426,880" fill="#726a62"/>
<polygon points="426,878 441,889 442,897 426,885" fill="#6d6360"/>
<polygon points="426,884 442,895 442,902 427,891" fill="#695c5d"/>
<polygon points="427,890 442,901 442,908 427,897" fill="#655659"/>
<polygon points="427,895 442,907 443,914 427,903" fill="#605056"/>
<polygon points="427,901 443,912 443,920 428,908" fill="#5d4b54"/>
<polygon points="428,907 443,918 444,926 428,914" fill="#5b4953"/>
<polygon points="428,913 444,924 444,931 429,920" fill="#5a4852"/>
<polygon points="429,918 444,930 444,937 429,926" fill="#5a4852"/>
<polygon points="429,924 444,936 445,943 430,931" fill="#5a4852"/>
<polygon points="430,930 445,941 445,949 430,937" fill="#5a4852"/>
<polygon points="427,715 443,725 444,732 427,722" fill="#3938ac"/>
<polygon points="427,720 444,730 444,738 428,728" fill="#3938ac"/>
<polygon points="428,726 444,736 445,744 428,734" fill="#3938ac"/>
<polygon points="428,732 444,742 445,749 429,739" fill="#3938ac"/>
<polygon points="429,738 445,748 445,755 429,745" fill="#3938ac"/>
<polygon points="429,744 445,754 446,761 429,751" fill="#3938ac"/>
<polygon points="429,749 446,760 446,767 430,757" fill="#3938ac"/>
<polygon points="430,755 446,765 446,773 430,762" fill="#3938ac"/>
<polygon points="430,761 446,771 447,778 431,768" fill="#3938ac"/>
<polygon points="431,767 447,777 447,784 431,774" fill="#3938ac"/>
<polygon points="431,772 447,783 448,790 432,780" fill="#3a39ac"/>
<polygon points="431,778 447,789 448,796 432,785" fill="#3d3cab"/>
<polygon points="432,784 448,794 448,802 432,791" fill="#4040ab"/>
<polygon points="432,790 448,800 449,808 433,797" fill="#4545aa"/>
<polygon points="433,795 449,806 449,813 433,803" fill="#4a4aa9"/>
<polygon points="433,801 449,812 449,819 434,809" fill="#4f4fa8"/>
<polygon points="433,807 449,818 450,825 434,814" fill="#5455a6"/>
<polygon points="434,813 450,823 450,831 434,820" fill="#5a5aa5"/>
<polygon points="434,819 450,829 451,837 435,826" fill="#6162a1"/>
<polygon points="435,824 450,835 451,842 435,832" fill="#6b6c99"/>
<polygon points="435,830 451,841 451,848 436,837" fill="#73768f"/>
<polygon points="435,836 451,847 452,854 436,843" fill="#7b7e84"/>
<polygon points="436,842 452,853 452,860 436,849" fill="#81847a"/>
<polygon points="436,847 452,858 452,866 437,855" fill="#858871"/>
<polygon points="437,853 452,864 453,872 437,861" fill="#84866c"/>
<polygon points="437,859 453,870 453,877 438,866" fill="#81816b"/>
<polygon points="438,865 453,876 454,883 438,872" fill="#7e7d69"/>
<polygon points="438,871 454,882 454,889 438,878" fill="#7b7867"/>
<polygon points="438,876 454,887 454,895 439,884" fill="#777265"/>
<polygon points="439,882 454,893 455,901 439,889" fill="#726a63"/>
<polygon points="439,888 455,899 455,906 440,895" fill="#6d6360"/>
<polygon points="440,894 455,905 456,912 440,901" fill="#695c5d"/>
<polygon points="440,899 455,911 456,918 440,907" fill="#655659"/>
<polygon points="440,905 456,916 456,924 441,912" fill="#605056"/>
<polygon points="441,911 456,922 457,930 441,918" fill="#5d4b54"/>
<polygon points="441,917 457,928 457,935 442,924" fill="#5b4953"/>
<polygon points="442,923 457,934 457,941 442,930" fill="#5a4852"/>
<polygon points="442,928 457,940 458,947 442,936" fill="#5a4852"/>
<polygon points="442,934 458,946 458,953 443,941" fill="#5a4852"/>
<polygon points="443,940 458,951 459,959 443,947" fill="#5a4852"/>
<polygon points="441,723 458,733 458,741 442,731" fill="#3635ad"/>
<polygon points="442,729 458,739 458,747 442,736" fill="#3635ad"/>
<polygon points="442,735 458,745 459,752 442,742" fill="#3635ad"/>
<polygon points="442,741 459,751 459,758 443,748" fill="#3635ad"/>
<polygon points="443,747 459,757 459,764 443,754" fill="#3635ad"/>
<polygon points="443,752 459,763 460,770 444,760" fill="#3635ad"/>
<polygon points="443,758 460,768 460,776 444,766" fill="#3635ad"/>
<polygon points="444,764 460,774 460,782 444,771" fill="#3635ad"/>
<polygon points="444,770 460,780 461,787 445,777" fill="#3635ad"/>
<polygon points="445,776 461,786 461,793 445,783" fill="#3635ad"/>
<polygon points="445,781 461,792 462,799 445,789" fill="#3735ac"/>
<polygon points="445,787 461,798 462,805 446,795" fill="#3837ac"/>
<polygon points="446,793 462,803 462,811 446,800" fill="#3c3aab"/>
<polygon points="446,799 462,809 463,817 447,806" fill="#3f3eaa"/>
<polygon points="447,805 462,815 463,823 447,812" fill="#4443a9"/>
<polygon points="447,810 463,821 463,828 447,818" fill="#4948a8"/>
<polygon points="447,816 463,827 464,834 448,824" fill="#4f4ea7"/>
<polygon points="448,822 464,833 464,840 448,829" fill="#5453a5"/>
<polygon points="448,828 464,839 464,846 449,835" fill="#5959a4"/>
<polygon points="448,834 464,844 465,852 449,841" fill="#62629e"/>
<polygon points="449,840 465,850 465,858 449,847" fill="#6b6c96"/>
<polygon points="449,845 465,856 465,864 450,853" fill="#74768b"/>
<polygon points="450,851 465,862 466,869 450,858" fill="#7b7e81"/>
<polygon points="450,857 466,868 466,875 450,864" fill="#818477"/>
<polygon points="450,863 466,874 466,881 451,870" fill="#83856f"/>
<polygon points="451,869 466,880 467,887 451,876" fill="#81826b"/>
<polygon points="451,874 467,885 467,893 452,882" fill="#7e7d69"/>
<polygon points="451,880 467,891 468,899 452,887" fill="#7b7868"/>
<polygon points="452,886 467,897 468,904 452,893" fill="#777266"/>
<polygon points="452,892 468,903 468,910 453,899" fill="#726b63"/>
<polygon points="453,898 468,909 469,916 453,905" fill="#6d6360"/>
<polygon points="453,903 468,915 469,922 453,911" fill="#695c5d"/>
<polygon points="453,909 469,920 469,928 454,917" fill="#655659"/>
<polygon points="454,915 469,926 470,934 454,922" fill="#605056"/>
<polygon points="454,921 470,932 470,940 455,928" fill="#5d4b54"/>
<polygon points="455,927 470,938 470,945 455,934" fill="#5b4953"/>
<polygon points="455,932 470,944 471,951 455,940" fill="#5a4852"/>
<polygon points="455,938 471,950 471,957 456,946" fill="#5a4852"/>
<polygon points="456,944 471,956 471,963 456,951" fill="#5a4852"/>
<polygon points="456,950 471,961 472,969 457,957" fill="#5a4852"/>
<polygon points="455,732 472,742 472,749 456,739" fill="#3433ad"/>
<polygon points="456,738 472,748 472,755 456,745" fill="#3433ad"/>
<polygon points="456,744 472,754 473,761 457,751" fill="#3433ad"/>
<polygon points="456,750 473,760 473,767 457,757" fill="#3433ad"/>
<polygon points="457,755 473,765 473,773 457,763" fill="#3433ad"/>
<polygon points="457,761 473,771 474,779 458,769" fill="#3433ad"/>
<polygon points="458,767 474,777 474,785 458,774" fill="#3433ad"/>
<polygon points="458,773 474,783 474,791 458,780" fill="#3433ad"/>
<polygon points="458,779 474,789 475,796 459,786" fill="#3433ad"/>
<polygon points="459,785 475,795 475,802 459,792" fill="#3433ad"/>
<polygon points="459,790 475,801 475,808 459,798" fill="#3433ad"/>
<polygon points="459,796 475,807 476,814 460,804" fill="#3534ad"/>
<polygon points="460,802 476,813 476,820 460,809" fill="#3736ac"/>
<polygon points="460,808 476,818 476,826 460,815" fill="#3b39ab"/>
<polygon points="460,814 476,824 477,832 461,821" fill="#3f3daa"/>
<polygon points="461,820 477,830 477,838 461,827" fill="#4442a9"/>
<polygon points="461,825 477,836 477,844 462,833" fill="#4947a7"/>
<polygon points="461,831 477,842 478,849 462,839" fill="#4e4ca6"/>
<polygon points="462,837 478,848 478,855 462,845" fill="#5351a4"/>
<polygon points="462,843 478,854 478,861 463,850" fill="#5a58a1"/>
<polygon points="463,849 478,860 479,867 463,856" fill="#63629b"/>
<polygon points="463,855 479,866 479,873 463,862" fill="#6c6c92"/>
<polygon points="463,861 479,871 479,879 464,868" fill="#757688"/>
<polygon points="464,866 479,877 480,885 464,874" fill="#7c7e7d"/>
<polygon points="464,872 480,883 480,891 464,880" fill="#808174"/>
<polygon points="464,878 480,889 480,896 465,885" fill="#80816d"/>
<polygon points="465,884 480,895 481,902 465,891" fill="#7e7d6a"/>
<polygon points="465,890 481,901 481,908 465,897" fill="#7b7968"/>
<polygon points="465,896 481,907 481,914 466,903" fill="#777366"/>
<polygon points="466,901 481,913 482,920 466,909" fill="#726b63"/>
<polygon points="466,907 482,918 482,926 467,915" fill="#6d6360"/>
<polygon points="466,913 482,924 482,932 467,921" fill="#695c5d"/>
<polygon points="467,919 482,930 483,938 467,926" fill="#655659"/>
<polygon points="467,925 483,936 483,944 468,932" fill="#605056"/>
<polygon points="468,931 483,942 483,949 468,938" fill="#5d4b54"/>
<polygon points="468,937 483,948 484,955 468,944" fill="#5b4953"/>
<polygon points="468,942 484,954 484,961 469,950" fill="#5a4852"/>
<polygon points="469,948 484,960 484,967 469,956" fill="#5a4852"/>
<polygon points="469,954 484,966 485,973 469,961" fill="#5a4852"/>
<polygon points="469,960 485,971 485,979 470,967" fill="#5a4852"/>
<polygon points="470,741 486,751 486,758 470,748" fill="#3331ad"/>
<polygon points="470,747 486,757 487,764 470,754" fill="#3331ad"/>
<polygon points="470,752 487,762 487,770 471,760" fill="#3331ad"/>
<polygon points="471,758 487,768 487,776 471,766" fill="#3331ad"/>
<polygon points="471,764 487,774 488,782 471,772" fill="#3331ad"/>
<polygon points="471,770 487,780 488,788 472,777" fill="#3331ad"/>
<polygon points="472,776 488,786 488,794 472,783" fill="#3331ad"/>
<polygon points="472,782 488,792 488,800 472,789" fill="#3331ad"/>
<polygon points="472,788 488,798 489,805 473,795" fill="#3331ad"/>
<polygon points="473,794 489,804 489,811 473,801" fill="#3331ad"/>
<polygon points="473,799 489,810 489,817 473,807" fill="#3331ad"/>
<polygon points="473,805 489,816 490,823 474,813" fill="#3331ad"/>
<polygon points="474,811 490,822 490,829 474,819" fill="#3432ad"/>
<polygon points="474,817 490,828 490,835 474,825" fill="#3634ac"/>
<polygon points="474,823 490,833 491,841 475,830" fill="#3a38ab"/>
<polygon points="475,829 491,839 491,847 475,836" fill="#3e3ca9"/>
<polygon points="475,835 491,845 491,853 475,842" fill="#4341a8"/>
<polygon points="475,841 491,851 492,859 476,848" fill="#4846a6"/>
<polygon points="476,846 491,857 492,865 476,854" fill="#4e4ba5"/>
<polygon points="476,852 492,863 492,871 476,860" fill="#5350a3"/>
<polygon points="476,858 492,869 492,876 477,866" fill="#5a589f"/>
<polygon points="477,864 492,875 493,882 477,872" fill="#646298"/>
<polygon points="477,870 493,881 493,888 477,877" fill="#6d6c8e"/>
<polygon points="477,876 493,887 493,894 478,883" fill="#757584"/>
<polygon points="478,882 493,893 494,900 478,889" fill="#7a7b7a"/>
<polygon points="478,888 494,899 494,906 478,895" fill="#7d7d71"/>
<polygon points="478,894 494,905 494,912 479,901" fill="#7d7c6b"/>
<polygon points="479,899 494,910 495,918 479,907" fill="#7b7868"/>
<polygon points="479,905 495,916 495,924 479,913" fill="#777366"/>
<polygon points="479,911 495,922 495,930 480,919" fill="#726b63"/>
<polygon points="480,917 495,928 496,936 480,924" fill="#6d6360"/>
<polygon points="480,923 495,934 496,942 480,930" fill="#695c5d"/>
<polygon points="480,929 496,940 496,948 481,936" fill="#65565a"/>
<polygon points="481,935 496,946 496,953 481,942" fill="#615056"/>
<polygon points="481,941 496,952 497,959 481,948" fill="#5d4b54"/>
<polygon points="481,946 497,958 497,965 482,954" fill="#5b4953"/>
<polygon points="482,952 497,964 497,971 482,960" fill="#5a4852"/>
<polygon points="482,958 497,970 498,977 482,966" fill="#5a4852"/>
<polygon points="482,964 498,976 498,983 483,971" fill="#5a4852"/>
<polygon points="483,970 498,981 498,989 483,977" fill="#5a4852"/>
<polygon points="484,749 500,759 501,767 484,757" fill="#312ead"/>
<polygon points="484,755 500,765 501,773 485,763" fill="#312ead"/>
<polygon points="484,761 501,771 501,779 485,769" fill="#312ead"/>
<polygon points="485,767 501,777 501,785 485,775" fill="#312ead"/>
<polygon points="485,773 501,783 502,791 485,780" fill="#312ead"/>
<polygon points="485,779 502,789 502,797 486,786" fill="#312ead"/>
<polygon points="486,785 502,795 502,803 486,792" fill="#312ead"/>
<polygon points="486,791 502,801 503,808 486,798" fill="#312ead"/>
<polygon points="486,797 502,807 503,814 487,804" fill="#312ead"/>
<polygon points="487,803 503,813 503,820 487,810" fill="#312ead"/>
<polygon points="487,808 503,819 503,826 487,816" fill="#312ead"/>
<polygon points="487,814 503,825 504,832 488,822" fill="#312ead"/>
<polygon points="488,820 504,831 504,838 488,828" fill="#312fad"/>
<polygon points="488,826 504,837 504,844 488,834" fill="#3331ac"/>
<polygon points="488,832 504,843 504,850 489,840" fill="#3634ab"/>
<polygon points="488,838 504,849 505,856 489,845" fill="#3a37aa"/>
<polygon points="489,844 505,855 505,862 489,851" fill="#3f3ca8"/>
<polygon points="489,850 505,860 505,868 489,857" fill="#4441a7"/>
<polygon points="489,856 505,866 506,874 490,863" fill="#4946a5"/>
<polygon points="490,862 506,872 506,880 490,869" fill="#4f4ba3"/>
<polygon points="490,868 506,878 506,886 490,875" fill="#5551a0"/>
<polygon points="490,874 506,884 506,892 491,881" fill="#5e5a9a"/>
<polygon points="491,879 506,890 507,898 491,887" fill="#676492"/>
<polygon points="491,885 507,896 507,904 491,893" fill="#706e88"/>
<polygon points="491,891 507,902 507,910 492,899" fill="#76757e"/>
<polygon points="492,897 507,908 508,916 492,905" fill="#7a7975"/>
<polygon points="492,903 507,914 508,922 492,911" fill="#7c7a6d"/>
<polygon points="492,909 508,920 508,928 493,916" fill="#7b7769"/>
<polygon points="492,915 508,926 508,934 493,922" fill="#777267"/>
<polygon points="493,921 508,932 509,939 493,928" fill="#726b64"/>
<polygon points="493,927 509,938 509,945 493,934" fill="#6e6361"/>
<polygon points="493,933 509,944 509,951 494,940" fill="#695c5d"/>
<polygon points="494,939 509,950 510,957 494,946" fill="#65565a"/>
<polygon points="494,944 509,956 510,963 494,952" fill="#615056"/>
<polygon points="494,950 510,962 510,969 495,958" fill="#5d4c54"/>
<polygon points="495,956 510,968 510,975 495,964" fill="#5b4953"/>
<polygon points="495,962 510,974 511,981 495,970" fill="#5a4852"/>
<polygon points="495,968 511,980 511,987 496,976" fill="#5a4852"/>
<polygon points="496,974 511,986 511,993 496,982" fill="#5a4852"/>
<polygon points="496,980 511,991 511,999 496,987" fill="#5a4852"/>
<polygon points="498,758 514,768 515,775 498,765" fill="#2f2cad"/>
<polygon points="498,764 515,774 515,781 499,771" fill="#2f2cad"/>
<polygon points="499,770 515,780 515,787 499,777" fill="#2f2cad"/>
<polygon points="499,776 515,786 516,793 499,783" fill="#2f2cad"/>
<polygon points="499,782 515,792 516,799 500,789" fill="#2f2cad"/>
<polygon points="499,788 516,798 516,805 500,795" fill="#2f2cad"/>
<polygon points="500,794 516,804 516,811 500,801" fill="#2f2cad"/>
<polygon points="500,800 516,810 517,817 500,807" fill="#2f2cad"/>
<polygon points="500,806 516,816 517,823 501,813" fill="#2f2cad"/>
<polygon points="501,812 517,822 517,829 501,819" fill="#2f2cad"/>
<polygon points="501,817 517,828 517,835 501,825" fill="#2f2cad"/>
<polygon points="501,823 517,834 518,841 502,831" fill="#2f2cad"/>
<polygon points="501,829 517,840 518,847 502,837" fill="#2f2cad"/>
<polygon points="502,835 518,846 518,853 502,843" fill="#302ead"/>
<polygon points="502,841 518,852 518,859 502,849" fill="#3330ac"/>
<polygon points="502,847 518,858 519,865 503,855" fill="#3734aa"/>
<polygon points="503,853 519,864 519,871 503,861" fill="#3b38a9"/>
<polygon points="503,859 519,870 519,877 503,867" fill="#403ca7"/>
<polygon points="503,865 519,876 519,883 504,873" fill="#4641a5"/>
<polygon points="503,871 519,882 520,889 504,879" fill="#4b46a3"/>
<polygon points="504,877 520,888 520,895 504,884" fill="#514ba1"/>
<polygon points="504,883 520,894 520,901 504,890" fill="#59549b"/>
<polygon points="504,889 520,900 520,907 505,896" fill="#625d94"/>
<polygon points="505,895 520,906 521,913 505,902" fill="#6b678b"/>
<polygon points="505,901 521,912 521,919 505,908" fill="#716f81"/>
<polygon points="505,907 521,918 521,925 506,914" fill="#767478"/>
<polygon points="505,913 521,924 521,931 506,920" fill="#797670"/>
<polygon points="506,919 521,930 522,937 506,926" fill="#79766a"/>
<polygon points="506,925 522,936 522,943 506,932" fill="#777167"/>
<polygon points="506,931 522,942 522,949 507,938" fill="#726a64"/>
<polygon points="507,936 522,948 522,955 507,944" fill="#6e6361"/>
<polygon points="507,942 522,954 523,961 507,950" fill="#695d5e"/>
<polygon points="507,948 523,960 523,967 508,956" fill="#65575a"/>
<polygon points="507,954 523,966 523,973 508,962" fill="#615057"/>
<polygon points="508,960 523,972 523,979 508,968" fill="#5e4c54"/>
<polygon points="508,966 523,978 524,985 508,974" fill="#5b4953"/>
<polygon points="508,972 524,984 524,991 509,980" fill="#5a4852"/>
<polygon points="509,978 524,990 524,997 509,986" fill="#5a4852"/>
<polygon points="509,984 524,996 524,1003 509,992" fill="#5a4852"/>
<polygon points="509,990 524,1002 525,1009 510,998" fill="#5a4852"/>
<polygon points="512,767 529,777 529,784 513,774" fill="#2d2aad"/>
<polygon points="513,773 529,783 529,790 513,780" fill="#2d2aad"/>
<polygon points="513,779 529,789 529,796 513,786" fill="#2d2aad"/>
<polygon points="513,785 529,795 530,802 513,792" fill="#2d2aad"/>
<polygon points="513,791 530,801 530,808 514,798" fill="#2d2aad"/>
<polygon points="514,797 530,807 530,814 514,804" fill="#2d2aad"/>
<polygon points="514,803 530,813 530,820 514,810" fill="#2d2aad"/>
<polygon points="514,809 530,819 531,826 514,816" fill="#2d2aad"/>
<polygon points="514,815 530,825 531,832 515,822" fill="#2d2aad"/>
<polygon points="515,821 531,831 531,838 515,828" fill="#2d2aad"/>
<polygon points="515,826 531,837 531,844 515,834" fill="#2d2aad"/>
<polygon points="515,832 531,843 531,850 515,840" fill="#2d2aad"/>
<polygon points="515,838 531,849 532,856 516,846" fill="#2d2aad"/>
<polygon points="516,844 532,855 532,863 516,852" fill="#2e2bad"/>
<polygon points="516,850 532,861 532,869 516,858" fill="#302dac"/>
<polygon points="516,856 532,867 532,875 517,864" fill="#3430ab"/>
<polygon points="516,862 532,873 533,881 517,870" fill="#3834a9"/>
<polygon points="517,868 533,879 533,887 517,876" fill="#3d38a7"/>
<polygon points="517,874 533,885 533,893 517,882" fill="#423da5"/>
<polygon points="517,880 533,891 533,899 518,888" fill="#4742a3"/>
<polygon points="517,886 533,897 534,905 518,894" fill="#4d47a1"/>
<polygon points="518,892 534,903 534,911 518,900" fill="#544e9c"/>
<polygon points="518,898 534,909 534,917 518,906" fill="#5d5796"/>
<polygon points="518,904 534,915 534,923 519,912" fill="#66608d"/>
<polygon points="519,910 534,921 535,929 519,918" fill="#6d6984"/>
<polygon points="519,916 534,927 535,935 519,924" fill="#726e7b"/>
<polygon points="519,922 535,933 535,941 519,930" fill="#767272"/>
<polygon points="519,928 535,939 535,947 520,936" fill="#78736b"/>
<polygon points="520,934 535,945 535,953 520,942" fill="#767067"/>
<polygon points="520,940 535,951 536,959 520,948" fill="#726a64"/>
<polygon points="520,946 536,957 536,965 520,954" fill="#6e6361"/>
<polygon points="520,952 536,963 536,971 521,960" fill="#6a5d5e"/>
<polygon points="521,958 536,969 536,977 521,966" fill="#66575b"/>
<polygon points="521,964 536,975 537,983 521,972" fill="#615157"/>
<polygon points="521,970 537,981 537,989 521,978" fill="#5e4c54"/>
<polygon points="521,976 537,987 537,995 522,984" fill="#5b4a53"/>
<polygon points="522,982 537,993 537,1001 522,990" fill="#5a4852"/>
<polygon points="522,988 537,1000 538,1007 522,996" fill="#5a4852"/>
<polygon points="522,994 537,1006 538,1013 523,1002" fill="#5a4852"/>
<polygon points="522,1000 538,1012 538,1019 523,1008" fill="#5a4852"/>
<polygon points="527,775 543,785 543,793 527,783" fill="#2b28ae"/>
<polygon points="527,781 543,791 543,799 527,789" fill="#2b28ae"/>
<polygon points="527,787 543,797 544,805 527,795" fill="#2b28ae"/>
<polygon points="527,793 543,803 544,811 528,801" fill="#2b28ae"/>
<polygon points="527,799 544,810 544,817 528,807" fill="#2b28ae"/>
<polygon points="528,805 544,816 544,823 528,813" fill="#2b28ae"/>
<polygon points="528,811 544,822 544,829 528,819" fill="#2b28ae"/>
<polygon points="528,817 544,828 545,835 528,825" fill="#2b28ae"/>
<polygon points="528,823 545,834 545,841 529,831" fill="#2b28ae"/>
<polygon points="529,829 545,840 545,847 529,837" fill="#2b28ae"/>
<polygon points="529,835 545,846 545,854 529,843" fill="#2b28ae"/>
<polygon points="529,842 545,852 545,860 529,849" fill="#2b28ae"/>
<polygon points="529,848 545,858 546,866 530,855" fill="#2b28ae"/>
<polygon points="530,854 546,864 546,872 530,861" fill="#2c29ad"/>
<polygon points="530,860 546,870 546,878 530,867" fill="#2e2aad"/>
<polygon points="530,866 546,876 546,884 530,873" fill="#312dab"/>
<polygon points="530,872 546,882 546,890 531,879" fill="#3531a9"/>
<polygon points="531,878 546,888 547,896 531,885" fill="#3a35a7"/>
<polygon points="531,884 547,894 547,902 531,891" fill="#3f39a5"/>
<polygon points="531,890 547,900 547,908 531,897" fill="#453ea3"/>
<polygon points="531,896 547,906 547,914 532,903" fill="#4a43a0"/>
<polygon points="531,902 547,913 547,920 532,909" fill="#51499c"/>
<polygon points="532,908 547,919 548,926 532,915" fill="#595296"/>
<polygon points="532,914 548,925 548,932 532,921" fill="#625b8e"/>
<polygon points="532,920 548,931 548,938 532,927" fill="#696385"/>
<polygon points="532,926 548,937 548,944 533,933" fill="#6f6a7c"/>
<polygon points="533,932 548,943 549,950 533,939" fill="#736e74"/>
<polygon points="533,938 548,949 549,957 533,945" fill="#76716c"/>
<polygon points="533,944 549,955 549,963 533,951" fill="#756f67"/>
<polygon points="533,950 549,961 549,969 534,957" fill="#716965"/>
<polygon points="534,956 549,967 549,975 534,963" fill="#6e6362"/>
<polygon points="534,962 549,973 550,981 534,969" fill="#6a5d5f"/>
<polygon points="534,968 550,979 550,987 534,976" fill="#66585b"/>
<polygon points="534,974 550,985 550,993 535,982" fill="#625158"/>
<polygon points="535,980 550,991 550,999 535,988" fill="#5e4d55"/>
<polygon points="535,986 550,997 550,1005 535,994" fill="#5c4a53"/>
<polygon points="535,992 550,1003 551,1011 535,1000" fill="#5a4852"/>
<polygon points="535,998 551,1009 551,1017 536,1006" fill="#5a4852"/>
<polygon points="535,1004 551,1016 551,1023 536,1012" fill="#5a4852"/>
<polygon points="536,1010 551,1022 551,1029 536,1018" fill="#5a4852"/>
<polygon points="541,784 557,794 557,802 541,792" fill="#2a26ae"/>
<polygon points="541,790 557,800 557,808 541,798" fill="#2a26ae"/>
<polygon points="541,796 557,806 558,814 541,804" fill="#2a26ae"/>
<polygon points="541,802 558,812 558,820 542,810" fill="#2a26ae"/>
<polygon points="542,808 558,818 558,826 542,816" fill="#2a26ae"/>
<polygon points="542,814 558,824 558,832 542,822" fill="#2a26ae"/>
<polygon points="542,820 558,830 558,838 542,828" fill="#2a26ae"/>
<polygon points="542,826 558,837 559,844 542,834" fill="#2a26ae"/>
<polygon points="542,832 559,843 559,850 543,840" fill="#2a26ae"/>
<polygon points="543,838 559,849 559,856 543,846" fill="#2a26ae"/>
<polygon points="543,845 559,855 559,863 543,852" fill="#2a26ae"/>
<polygon points="543,851 559,861 559,869 543,858" fill="#2a26ae"/>
<polygon points="543,857 559,867 560,875 544,864" fill="#2a26ae"/>
<polygon points="543,863 559,873 560,881 544,870" fill="#2a26ae"/>
<polygon points="544,869 560,879 560,887 544,876" fill="#2c28ad"/>
<polygon points="544,875 560,885 560,893 544,882" fill="#2f2aab"/>
<polygon points="544,881 560,891 560,899 544,888" fill="#332eaa"/>
<polygon points="544,887 560,898 560,905 545,895" fill="#3732a7"/>
<polygon points="545,893 560,904 561,911 545,901" fill="#3d36a5"/>
<polygon points="545,899 561,910 561,917 545,907" fill="#423ba2"/>
<polygon points="545,905 561,916 561,924 545,913" fill="#473fa0"/>
<polygon points="545,911 561,922 561,930 545,919" fill="#4e459c"/>
<polygon points="545,917 561,928 561,936 546,925" fill="#564d96"/>
<polygon points="546,923 561,934 562,942 546,931" fill="#5e568f"/>
<polygon points="546,929 561,940 562,948 546,937" fill="#665e86"/>
<polygon points="546,935 562,946 562,954 546,943" fill="#6c657e"/>
<polygon points="546,941 562,952 562,960 546,949" fill="#716a75"/>
<polygon points="546,947 562,958 562,966 547,955" fill="#746e6d"/>
<polygon points="547,953 562,965 562,972 547,961" fill="#746d68"/>
<polygon points="547,960 562,971 563,978 547,967" fill="#716865"/>
<polygon points="547,966 563,977 563,984 547,973" fill="#6d6262"/>
<polygon points="547,972 563,983 563,991 548,979" fill="#6a5d5f"/>
<polygon points="547,978 563,989 563,997 548,985" fill="#67585c"/>
<polygon points="548,984 563,995 563,1003 548,991" fill="#625258"/>
<polygon points="548,990 563,1001 564,1009 548,997" fill="#5e4d55"/>
<polygon points="548,996 564,1007 564,1015 548,1004" fill="#5c4a53"/>
<polygon points="548,1002 564,1013 564,1021 549,1010" fill="#5a4852"/>
<polygon points="549,1008 564,1019 564,1027 549,1016" fill="#5a4852"/>
<polygon points="549,1014 564,1026 564,1033 549,1022" fill="#5a4852"/>
<polygon points="549,1020 564,1032 564,1039 549,1028" fill="#5a4852"/>
<polygon points="555,793 571,803 571,810 555,800" fill="#2824ae"/>
<polygon points="555,799 571,809 572,816 555,806" fill="#2824ae"/>
<polygon points="555,805 572,815 572,823 556,812" fill="#2824ae"/>
<polygon points="556,811 572,821 572,829 556,819" fill="#2824ae"/>
<polygon points="556,817 572,827 572,835 556,825" fill="#2824ae"/>
<polygon points="556,823 572,833 572,841 556,831" fill="#2824ae"/>
<polygon points="556,829 572,839 572,847 556,837" fill="#2824ae"/>
<polygon points="556,835 572,845 573,853 556,843" fill="#2824ae"/>
<polygon points="556,841 573,852 573,859 557,849" fill="#2824ae"/>
<polygon points="557,847 573,858 573,865 557,855" fill="#2824ae"/>
<polygon points="557,854 573,864 573,872 557,861" fill="#2824ae"/>
<polygon points="557,860 573,870 573,878 557,867" fill="#2824ae"/>
<polygon points="557,866 573,876 573,884 557,873" fill="#2824ae"/>
<polygon points="557,872 573,882 574,890 558,879" fill="#2824ae"/>
<polygon points="558,878 574,888 574,896 558,886" fill="#2925ad"/>
<polygon points="558,884 574,895 574,902 558,892" fill="#2c28ac"/>
<polygon points="558,890 574,901 574,908 558,898" fill="#302baa"/>
<polygon points="558,896 574,907 574,915 558,904" fill="#352fa8"/>
<polygon points="558,902 574,913 574,921 559,910" fill="#3a33a5"/>
<polygon points="559,908 574,919 575,927 559,916" fill="#3f37a2"/>
<polygon points="559,914 574,925 575,933 559,922" fill="#453c9f"/>
<polygon points="559,921 575,931 575,939 559,928" fill="#4b419c"/>
<polygon points="559,927 575,937 575,945 559,934" fill="#534996"/>
<polygon points="559,933 575,944 575,951 559,940" fill="#5b518f"/>
<polygon points="559,939 575,950 575,957 560,946" fill="#625987"/>
<polygon points="560,945 575,956 575,964 560,953" fill="#69607f"/>
<polygon points="560,951 575,962 576,970 560,959" fill="#6e6676"/>
<polygon points="560,957 576,968 576,976 560,965" fill="#726b6e"/>
<polygon points="560,963 576,974 576,982 560,971" fill="#736b68"/>
<polygon points="560,969 576,980 576,988 561,977" fill="#706765"/>
<polygon points="561,975 576,986 576,994 561,983" fill="#6d6263"/>
<polygon points="561,981 576,993 576,1000 561,989" fill="#6a5e60"/>
<polygon points="561,987 576,999 577,1006 561,995" fill="#67595c"/>
<polygon points="561,994 577,1005 577,1013 561,1001" fill="#635359"/>
<polygon points="561,1000 577,1011 577,1019 562,1007" fill="#5f4e56"/>
<polygon points="562,1006 577,1017 577,1025 562,1013" fill="#5c4a53"/>
<polygon points="562,1012 577,1023 577,1031 562,1020" fill="#5a4852"/>
<polygon points="562,1018 577,1029 577,1037 562,1026" fill="#5a4852"/>
<polygon points="562,1024 577,1036 578,1043 562,1032" fill="#5a4852"/>
<polygon points="562,1030 578,1042 578,1049 562,1038" fill="#5a4852"/>
<polygon points="569,801 586,811 586,819 569,809" fill="#2723ae"/>
<polygon points="569,807 586,817 586,825 570,815" fill="#2723ae"/>
<polygon points="569,814 586,824 586,831 570,821" fill="#2723ae"/>
<polygon points="570,820 586,830 586,838 570,827" fill="#2723ae"/>
<polygon points="570,826 586,836 586,844 570,834" fill="#2723ae"/>
<polygon points="570,832 586,842 586,850 570,840" fill="#2723ae"/>
<polygon points="570,838 586,848 587,856 570,846" fill="#2723ae"/>
<polygon points="570,844 586,854 587,862 571,852" fill="#2723ae"/>
<polygon points="570,850 587,861 587,868 571,858" fill="#2723ae"/>
<polygon points="571,856 587,867 587,875 571,864" fill="#2723ae"/>
<polygon points="571,863 587,873 587,881 571,870" fill="#2723ae"/>
<polygon points="571,869 587,879 587,887 571,876" fill="#2723ae"/>
<polygon points="571,875 587,885 587,893 571,883" fill="#2723ae"/>
<polygon points="571,881 587,891 587,899 571,889" fill="#2723ae"/>
<polygon points="571,887 587,898 588,905 572,895" fill="#2824ad"/>
<polygon points="572,893 588,904 588,912 572,901" fill="#2a26ac"/>
<polygon points="572,899 588,910 588,918 572,907" fill="#2e29aa"/>
<polygon points="572,905 588,916 588,924 572,913" fill="#332da7"/>
<polygon points="572,912 588,922 588,930 572,919" fill="#3831a5"/>
<polygon points="572,918 588,928 588,936 572,925" fill="#3e36a2"/>
<polygon points="572,924 588,935 588,942 573,932" fill="#433a9f"/>
<polygon points="573,930 588,941 589,948 573,938" fill="#493f9b"/>
<polygon points="573,936 588,947 589,955 573,944" fill="#514696"/>
<polygon points="573,942 589,953 589,961 573,950" fill="#594e8f"/>
<polygon points="573,948 589,959 589,967 573,956" fill="#605688"/>
<polygon points="573,954 589,965 589,973 573,962" fill="#665d80"/>
<polygon points="573,961 589,972 589,979 574,968" fill="#6b6377"/>
<polygon points="574,967 589,978 589,985 574,974" fill="#706870"/>
<polygon points="574,973 589,984 589,992 574,981" fill="#726969"/>
<polygon points="574,979 589,990 590,998 574,987" fill="#706666"/>
<polygon points="574,985 590,996 590,1004 574,993" fill="#6d6263"/>
<polygon points="574,991 590,1002 590,1010 574,999" fill="#6b5e60"/>
<polygon points="574,997 590,1009 590,1016 575,1005" fill="#67595d"/>
<polygon points="575,1003 590,1015 590,1022 575,1011" fill="#635359"/>
<polygon points="575,1010 590,1021 590,1029 575,1017" fill="#5f4e56"/>
<polygon points="575,1016 590,1027 590,1035 575,1023" fill="#5c4a53"/>
<polygon points="575,1022 590,1033 591,1041 575,1030" fill="#5a4852"/>
<polygon points="575,1028 591,1039 591,1047 575,1036" fill="#5a4852"/>
<polygon points="575,1034 591,1046 591,1053 576,1042" fill="#5a4852"/>
<polygon points="576,1040 591,1052 591,1059 576,1048" fill="#5a4852"/>
<polygon points="583,810 600,820 600,828 584,818" fill="#2521ae"/>
<polygon points="584,816 600,826 600,834 584,824" fill="#2521ae"/>
<polygon points="584,822 600,832 600,840 584,830" fill="#2521ae"/>
<polygon points="584,828 600,839 600,846 584,836" fill="#2521ae"/>
<polygon points="584,835 600,845 600,853 584,842" fill="#2521ae"/>
<polygon points="584,841 600,851 600,859 584,849" fill="#2521ae"/>
<polygon points="584,847 600,857 601,865 584,855" fill="#2521ae"/>
<polygon points="584,853 601,863 601,871 585,861" fill="#2521ae"/>
<polygon points="585,859 601,870 601,877 585,867" fill="#2521ae"/>
<polygon points="585,865 601,876 601,884 585,873" fill="#2521ae"/>
<polygon points="585,872 601,882 601,890 585,879" fill="#2521ae"/>
<polygon points="585,878 601,888 601,896 585,885" fill="#2521ae"/>
<polygon points="585,884 601,894 601,902 585,892" fill="#2521ae"/>
<polygon points="585,890 601,901 601,908 585,898" fill="#2521ae"/>
<polygon points="585,896 601,907 601,915 586,904" fill="#2622ad"/>
<polygon points="585,902 601,913 602,921 586,910" fill="#2924ac"/>
<polygon points="586,909 602,919 602,927 586,916" fill="#2c27aa"/>
<polygon points="586,915 602,925 602,933 586,922" fill="#312ba7"/>
<polygon points="586,921 602,932 602,939 586,929" fill="#362fa4"/>
<polygon points="586,927 602,938 602,946 586,935" fill="#3c34a1"/>
<polygon points="586,933 602,944 602,952 586,941" fill="#42399e"/>
<polygon points="586,939 602,950 602,958 586,947" fill="#483e9a"/>
<polygon points="586,945 602,956 602,964 587,953" fill="#4f4495"/>
<polygon points="587,952 602,963 602,970 587,959" fill="#574c8f"/>
<polygon points="587,958 602,969 603,977 587,966" fill="#5e5388"/>
<polygon points="587,964 603,975 603,983 587,972" fill="#645a80"/>
<polygon points="587,970 603,981 603,989 587,978" fill="#696078"/>
<polygon points="587,976 603,987 603,995 587,984" fill="#6e6570"/>
<polygon points="587,982 603,994 603,1001 587,990" fill="#70676a"/>
<polygon points="587,989 603,1000 603,1008 588,996" fill="#6f6566"/>
<polygon points="588,995 603,1006 603,1014 588,1003" fill="#6d6163"/>
<polygon points="588,1001 603,1012 603,1020 588,1009" fill="#6b5e61"/>
<polygon points="588,1007 603,1018 603,1026 588,1015" fill="#685a5e"/>
<polygon points="588,1013 603,1025 604,1032 588,1021" fill="#63545a"/>
<polygon points="588,1019 604,1031 604,1039 588,1027" fill="#5f4f56"/>
<polygon points="588,1026 604,1037 604,1045 588,1033" fill="#5c4a54"/>
<polygon points="588,1032 604,1043 604,1051 589,1039" fill="#5a4852"/>
<polygon points="589,1038 604,1049 604,1057 589,1046" fill="#5a4852"/>
<polygon points="589,1044 604,1056 604,1063 589,1052" fill="#5a4852"/>
<polygon points="589,1050 604,1062 604,1070 589,1058" fill="#5a4852"/>
<polygon points="598,819 614,829 614,836 598,826" fill="#2420ae"/>
<polygon points="598,825 614,835 614,843 598,833" fill="#2420ae"/>
<polygon points="598,831 614,841 614,849 598,839" fill="#2420ae"/>
<polygon points="598,837 614,847 614,855 598,845" fill="#2420ae"/>
<polygon points="598,843 614,854 614,861 598,851" fill="#2420ae"/>
<polygon points="598,850 614,860 615,868 598,857" fill="#2420ae"/>
<polygon points="598,856 614,866 615,874 598,864" fill="#2420ae"/>
<polygon points="598,862 615,872 615,880 599,870" fill="#2420ae"/>
<polygon points="599,868 615,878 615,886 599,876" fill="#2420ae"/>
<polygon points="599,874 615,885 615,893 599,882" fill="#2420ae"/>
<polygon points="599,881 615,891 615,899 599,888" fill="#2420ae"/>
<polygon points="599,887 615,897 615,905 599,895" fill="#2420ae"/>
<polygon points="599,893 615,903 615,911 599,901" fill="#2420ae"/>
<polygon points="599,899 615,910 615,918 599,907" fill="#2420ae"/>
<polygon points="599,905 615,916 615,924 599,913" fill="#2520ae"/>
<polygon points="599,912 615,922 615,930 599,919" fill="#2722ac"/>
<polygon points="599,918 615,928 615,936 600,926" fill="#2a25aa"/>
<polygon points="600,924 615,935 616,942 600,932" fill="#2f29a7"/>
<polygon points="600,930 616,941 616,949 600,938" fill="#342da4"/>
<polygon points="600,936 616,947 616,955 600,944" fill="#3a32a1"/>
<polygon points="600,943 616,953 616,961 600,950" fill="#40379d"/>
<polygon points="600,949 616,960 616,967 600,957" fill="#463c9a"/>
<polygon points="600,955 616,966 616,974 600,963" fill="#4d4295"/>
<polygon points="600,961 616,972 616,980 600,969" fill="#55498f"/>
<polygon points="600,967 616,978 616,986 601,975" fill="#5c5088"/>
<polygon points="600,973 616,984 616,992 601,981" fill="#625780"/>
<polygon points="601,980 616,991 616,999 601,987" fill="#675d79"/>
<polygon points="601,986 616,997 616,1005 601,994" fill="#6c6271"/>
<polygon points="601,992 616,1003 616,1011 601,1000" fill="#6f656b"/>
<polygon points="601,998 616,1009 617,1017 601,1006" fill="#6f6466"/>
<polygon points="601,1004 617,1016 617,1023 601,1012" fill="#6d6164"/>
<polygon points="601,1011 617,1022 617,1030 601,1018" fill="#6b5e61"/>
<polygon points="601,1017 617,1028 617,1036 601,1025" fill="#685a5e"/>
<polygon points="601,1023 617,1034 617,1042 602,1031" fill="#64545a"/>
<polygon points="602,1029 617,1041 617,1048 602,1037" fill="#604f57"/>
<polygon points="602,1035 617,1047 617,1055 602,1043" fill="#5c4b54"/>
<polygon points="602,1042 617,1053 617,1061 602,1049" fill="#5a4852"/>
<polygon points="602,1048 617,1059 617,1067 602,1056" fill="#5a4852"/>
<polygon points="602,1054 617,1066 617,1073 602,1062" fill="#5a4852"/>
<polygon points="602,1060 617,1072 617,1080 602,1068" fill="#5a4852"/>
<polygon points="612,827 628,837 628,845 612,835" fill="#231fae"/>
<polygon points="612,834 628,844 628,851 612,841" fill="#231fae"/>
<polygon points="612,840 628,850 628,858 612,848" fill="#231fae"/>
<polygon points="612,846 628,856 628,864 612,854" fill="#231fae"/>
<polygon points="612,852 628,862 629,870 612,860" fill="#231fae"/>
<polygon points="612,858 628,869 629,877 612,866" fill="#231fae"/>
<polygon points="612,865 629,875 629,883 612,873" fill="#231fae"/>
<polygon points="612,871 629,881 629,889 613,879" fill="#231fae"/>
<polygon points="613,877 629,887 629,895 613,885" fill="#231fae"/>
<polygon points="613,883 629,894 629,902 613,891" fill="#231fae"/>
<polygon points="613,890 629,900 629,908 613,897" fill="#231fae"/>
<polygon points="613,896 629,906 629,914 613,904" fill="#231fae"/>
<polygon points="613,902 629,912 629,920 613,910" fill="#231fae"/>
<polygon points="613,908 629,919 629,927 613,916" fill="#231fae"/>
<polygon points="613,914 629,925 629,933 613,922" fill="#231fae"/>
<polygon points="613,921 629,931 629,939 613,929" fill="#2521ac"/>
<polygon points="613,927 629,938 629,945 613,935" fill="#2923aa"/>
<polygon points="613,933 629,944 629,952 613,941" fill="#2d27a7"/>
<polygon points="613,939 629,950 629,958 614,947" fill="#332ca4"/>
<polygon points="614,946 629,956 629,964 614,954" fill="#3931a0"/>
<polygon points="614,952 629,963 630,971 614,960" fill="#3f369c"/>
<polygon points="614,958 629,969 630,977 614,966" fill="#453b98"/>
<polygon points="614,964 630,975 630,983 614,972" fill="#4c4193"/>
<polygon points="614,971 630,981 630,989 614,978" fill="#54478e"/>
<polygon points="614,977 630,988 630,996 614,985" fill="#5a4e87"/>
<polygon points="614,983 630,994 630,1002 614,991" fill="#615480"/>
<polygon points="614,989 630,1000 630,1008 614,997" fill="#665b79"/>
<polygon points="614,995 630,1007 630,1014 614,1003" fill="#6b6072"/>
<polygon points="614,1002 630,1013 630,1021 614,1010" fill="#6e636b"/>
<polygon points="614,1008 630,1019 630,1027 615,1016" fill="#6e6367"/>
<polygon points="615,1014 630,1025 630,1033 615,1022" fill="#6d6164"/>
<polygon points="615,1020 630,1032 630,1040 615,1028" fill="#6b5e62"/>
<polygon points="615,1027 630,1038 630,1046 615,1034" fill="#695b5f"/>
<polygon points="615,1033 630,1044 630,1052 615,1041" fill="#64555b"/>
<polygon points="615,1039 630,1050 630,1058 615,1047" fill="#604f57"/>
<polygon points="615,1045 630,1057 630,1065 615,1053" fill="#5c4b54"/>
<polygon points="615,1052 630,1063 630,1071 615,1059" fill="#5a4852"/>
<polygon points="615,1058 630,1069 631,1077 615,1066" fill="#5a4852"/>
<polygon points="615,1064 631,1075 631,1083 615,1072" fill="#5a4852"/>
<polygon points="615,1070 631,1082 631,1090 615,1078" fill="#5a4852"/>
<polygon points="626,836 642,846 642,854 626,844" fill="#211dae"/>
<polygon points="626,842 642,852 642,860 626,850" fill="#211dae"/>
<polygon points="626,848 642,859 643,866 626,856" fill="#211dae"/>
<polygon points="626,855 643,865 643,873 626,863" fill="#211dae"/>
<polygon points="626,861 643,871 643,879 626,869" fill="#211dae"/>
<polygon points="626,867 643,877 643,885 626,875" fill="#211dae"/>
<polygon points="626,874 643,884 643,892 627,881" fill="#211dae"/>
<polygon points="627,880 643,890 643,898 627,888" fill="#211dae"/>
<polygon points="627,886 643,896 643,904 627,894" fill="#211dae"/>
<polygon points="627,892 643,903 643,911 627,900" fill="#211dae"/>
<polygon points="627,899 643,909 643,917 627,906" fill="#211dae"/>
<polygon points="627,905 643,915 643,923 627,913" fill="#211dae"/>
<polygon points="627,911 643,922 643,930 627,919" fill="#211dae"/>
<polygon points="627,917 643,928 643,936 627,925" fill="#211dae"/>
<polygon points="627,924 643,934 643,942 627,932" fill="#221eae"/>
<polygon points="627,930 643,940 643,948 627,938" fill="#241fac"/>
<polygon points="627,936 643,947 643,955 627,944" fill="#2722aa"/>
<polygon points="627,942 643,953 643,961 627,950" fill="#2c26a7"/>
<polygon points="627,949 643,959 643,967 627,957" fill="#322ba3"/>
<polygon points="627,955 643,966 643,974 627,963" fill="#38309f"/>
<polygon points="627,961 643,972 643,980 627,969" fill="#3e359b"/>
<polygon points="627,968 643,978 643,986 628,975" fill="#453a97"/>
<polygon points="628,974 643,985 643,993 628,982" fill="#4c4092"/>
<polygon points="628,980 643,991 643,999 628,988" fill="#53478c"/>
<polygon points="628,986 643,997 643,1005 628,994" fill="#5a4d86"/>
<polygon points="628,993 643,1004 643,1011 628,1000" fill="#60537f"/>
<polygon points="628,999 643,1010 643,1018 628,1007" fill="#655978"/>
<polygon points="628,1005 643,1016 643,1024 628,1013" fill="#6a5f71"/>
<polygon points="628,1011 643,1022 644,1030 628,1019" fill="#6d626b"/>
<polygon points="628,1018 644,1029 644,1037 628,1026" fill="#6e6267"/>
<polygon points="628,1024 644,1035 644,1043 628,1032" fill="#6d6164"/>
<polygon points="628,1030 644,1041 644,1049 628,1038" fill="#6b5e62"/>
<polygon points="628,1036 644,1048 644,1056 628,1044" fill="#695b5f"/>
<polygon points="628,1043 644,1054 644,1062 628,1051" fill="#65555b"/>
<polygon points="628,1049 644,1060 644,1068 628,1057" fill="#605057"/>
<polygon points="628,1055 644,1067 644,1075 628,1063" fill="#5c4b54"/>
<polygon points="628,1061 644,1073 644,1081 629,1069" fill="#5a4852"/>
<polygon points="628,1068 644,1079 644,1087 629,1076" fill="#5a4852"/>
<polygon points="629,1074 644,1085 644,1093 629,1082" fill="#5a4852"/>
<polygon points="629,1080 644,1092 644,1100 629,1088" fill="#5a4852"/>
<polygon points="640,845 657,855 657,863 640,853" fill="#201cae"/>
<polygon points="640,851 657,861 657,869 640,859" fill="#201cae"/>
<polygon points="640,857 657,867 657,875 640,865" fill="#201cae"/>
<polygon points="640,864 657,874 657,882 640,871" fill="#201cae"/>
<polygon points="640,870 657,880 657,888 640,878" fill="#201cae"/>
<polygon points="640,876 657,886 657,894 641,884" fill="#201cae"/>
<polygon points="641,882 657,893 657,901 641,890" fill="#201cae"/>
<polygon points="641,889 657,899 657,907 641,897" fill="#201cae"/>
<polygon points="641,895 657,905 657,913 641,903" fill="#201cae"/>
<polygon points="641,901 657,912 657,920 641,909" fill="#201cae"/>
<polygon points="641,908 657,918 657,926 641,916" fill="#201cae"/>
<polygon points="641,914 657,924 657,932 641,922" fill="#201cae"/>
<polygon points="641,920 657,931 657,939 641,928" fill="#201cae"/>
<polygon points="641,927 657,937 657,945 641,934" fill="#201cae"/>
<polygon points="641,933 657,943 657,951 641,941" fill="#201cae"/>
<polygon points="641,939 657,950 657,958 641,947" fill="#231eac"/>
<polygon points="641,945 657,956 657,964 641,953" fill="#2621aa"/>
<polygon points="641,952 657,962 657,970 641,960" fill="#2b25a6"/>
<polygon points="641,958 657,969 657,977 641,966" fill="#312aa3"/>
<polygon points="641,964 657,975 657,983 641,972" fill="#372f9e"/>
<polygon points="641,971 657,981 657,989 641,979" fill="#3e349a"/>
<polygon points="641,977 657,988 657,996 641,985" fill="#453995"/>
<polygon points="641,983 657,994 657,1002 641,991" fill="#4c4090"/>
<polygon points="641,990 657,1000 657,1008 641,997" fill="#53468a"/>
<polygon points="641,996 657,1007 657,1015 641,1004" fill="#5a4c84"/>
<polygon points="641,1002 657,1013 657,1021 641,1010" fill="#5f527e"/>
<polygon points="641,1008 657,1019 657,1027 641,1016" fill="#655878"/>
<polygon points="641,1015 657,1026 657,1034 641,1023" fill="#6a5e71"/>
<polygon points="641,1021 657,1032 657,1040 641,1029" fill="#6d626b"/>
<polygon points="641,1027 657,1038 657,1046 642,1035" fill="#6e6267"/>
<polygon points="642,1034 657,1045 657,1053 642,1042" fill="#6d6064"/>
<polygon points="642,1040 657,1051 657,1059 642,1048" fill="#6c5e62"/>
<polygon points="642,1046 657,1057 657,1065 642,1054" fill="#695b5f"/>
<polygon points="642,1053 657,1064 657,1072 642,1060" fill="#65555b"/>
<polygon points="642,1059 657,1070 657,1078 642,1067" fill="#605058"/>
<polygon points="642,1065 657,1076 657,1084 642,1073" fill="#5c4b54"/>
<polygon points="642,1071 657,1083 657,1091 642,1079" fill="#5a4852"/>
<polygon points="642,1078 657,1089 657,1097 642,1086" fill="#5a4852"/>
<polygon points="642,1084 657,1095 657,1103 642,1092" fill="#5a4852"/>
<polygon points="642,1090 657,1102 657,1110 642,1098" fill="#5a4852"/>
<polygon points="655,853 671,863 671,871 655,861" fill="#1f1bae"/>
<polygon points="655,860 671,870 671,878 655,868" fill="#1f1bae"/>
<polygon points="655,866 671,876 671,884 655,874" fill="#1f1bae"/>
<polygon points="655,872 671,882 671,890 655,880" fill="#1f1bae"/>
<polygon points="655,879 671,889 671,897 655,887" fill="#1f1bae"/>
<polygon points="655,885 671,895 671,903 655,893" fill="#1f1bae"/>
<polygon points="655,891 671,901 671,910 655,899" fill="#1f1bae"/>
<polygon points="655,898 671,908 671,916 655,906" fill="#1f1bae"/>
<polygon points="655,904 671,914 671,922 655,912" fill="#1f1bae"/>
<polygon points="655,910 671,921 671,929 655,918" fill="#1f1bae"/>
<polygon points="655,917 671,927 671,935 655,925" fill="#1f1bae"/>
<polygon points="655,923 671,933 671,941 655,931" fill="#1f1bae"/>
<polygon points="655,929 671,940 671,948 655,937" fill="#1f1bae"/>
<polygon points="655,936 671,946 671,954 655,944" fill="#1f1bae"/>
<polygon points="655,942 671,952 671,961 655,950" fill="#1f1bae"/>
<polygon points="655,948 671,959 671,967 655,956" fill="#211dac"/>
<polygon points="655,955 671,965 671,973 655,963" fill="#2520a9"/>
<polygon points="655,961 671,972 671,980 655,969" fill="#2a24a6"/>
<polygon points="655,967 671,978 671,986 655,975" fill="#3029a2"/>
<polygon points="655,974 671,984 671,992 655,982" fill="#372e9d"/>
<polygon points="655,980 671,991 671,999 655,988" fill="#3d3399"/>
<polygon points="655,986 671,997 671,1005 655,994" fill="#443994"/>
<polygon points="655,993 671,1003 671,1012 655,1001" fill="#4c3f8e"/>
<polygon points="655,999 671,1010 671,1018 655,1007" fill="#534589"/>
<polygon points="655,1005 671,1016 671,1024 655,1013" fill="#5a4c83"/>
<polygon points="655,1012 671,1023 671,1031 655,1020" fill="#5f527d"/>
<polygon points="655,1018 671,1029 671,1037 655,1026" fill="#655877"/>
<polygon points="655,1024 671,1035 671,1043 655,1032" fill="#6a5e71"/>
<polygon points="655,1031 671,1042 671,1050 655,1039" fill="#6d616b"/>
<polygon points="655,1037 671,1048 671,1056 655,1045" fill="#6d6267"/>
<polygon points="655,1043 671,1054 671,1063 655,1051" fill="#6d6064"/>
<polygon points="655,1050 671,1061 671,1069 655,1058" fill="#6c5e62"/>
<polygon points="655,1056 671,1067 670,1075 655,1064" fill="#695b5f"/>
<polygon points="655,1062 670,1074 670,1082 655,1070" fill="#65565b"/>
<polygon points="655,1069 670,1080 670,1088 655,1077" fill="#605058"/>
<polygon points="655,1075 670,1086 670,1094 655,1083" fill="#5c4b54"/>
<polygon points="655,1081 670,1093 670,1101 655,1089" fill="#5a4852"/>
<polygon points="655,1088 670,1099 670,1107 655,1096" fill="#5a4852"/>
<polygon points="655,1094 670,1105 670,1114 655,1102" fill="#5a4852"/>
<polygon points="655,1100 670,1112 670,1120 655,1108" fill="#5a4852"/>
<polygon points="669,862 685,872 685,880 669,870" fill="#1e1aae"/>
<polygon points="669,868 685,878 685,886 669,876" fill="#1e1aae"/>
<polygon points="669,875 685,885 685,893 669,883" fill="#1e1aae"/>
<polygon points="669,881 685,891 685,899 669,889" fill="#1e1aae"/>
<polygon points="669,887 685,898 685,906 669,895" fill="#1e1aae"/>
<polygon points="669,894 685,904 685,912 669,902" fill="#1e1aae"/>
<polygon points="669,900 685,910 685,918 669,908" fill="#1e1aae"/>
<polygon points="669,907 685,917 685,925 669,915" fill="#1e1aae"/>
<polygon points="669,913 685,923 685,931 669,921" fill="#1e1aae"/>
<polygon points="669,919 685,930 685,938 669,927" fill="#1e1aae"/>
<polygon points="669,926 685,936 685,944 669,934" fill="#1e1aae"/>
<polygon points="669,932 685,942 685,950 669,940" fill="#1e1aae"/>
<polygon points="669,938 685,949 685,957 669,946" fill="#1e1aae"/>
<polygon points="669,945 685,955 685,963 669,953" fill="#1e1aae"/>
<polygon points="669,951 685,962 685,970 669,959" fill="#1f1aae"/>
<polygon points="669,957 685,968 685,976 669,966" fill="#211cac"/>
<polygon points="669,964 685,974 684,983 669,972" fill="#251fa9"/>
<polygon points="669,970 684,981 684,989 669,978" fill="#2a23a6"/>
<polygon points="669,977 684,987 684,995 669,985" fill="#3028a2"/>
<polygon points="669,983 684,994 684,1002 669,991" fill="#362d9d"/>
<polygon points="669,989 684,1000 684,1008 669,997" fill="#3d3398"/>
<polygon points="669,996 684,1007 684,1015 669,1004" fill="#443993"/>
<polygon points="669,1002 684,1013 684,1021 669,1010" fill="#4c3f8e"/>
<polygon points="669,1008 684,1019 684,1027 669,1016" fill="#534588"/>
<polygon points="669,1015 684,1026 684,1034 669,1023" fill="#5a4c82"/>
<polygon points="669,1021 684,1032 684,1040 669,1029" fill="#5f527c"/>
<polygon points="669,1028 684,1039 684,1047 669,1036" fill="#655877"/>
<polygon points="669,1034 684,1045 684,1053 669,1042" fill="#6a5e70"/>
<polygon points="669,1040 684,1051 684,1059 669,1048" fill="#6d616b"/>
<polygon points="669,1047 684,1058 684,1066 669,1055" fill="#6d6167"/>
<polygon points="669,1053 684,1064 684,1072 668,1061" fill="#6d6064"/>
<polygon points="669,1059 684,1071 684,1079 668,1067" fill="#6c5e62"/>
<polygon points="668,1066 684,1077 684,1085 668,1074" fill="#695b5f"/>
<polygon points="668,1072 684,1083 684,1092 668,1080" fill="#65565b"/>
<polygon points="668,1079 684,1090 684,1098 668,1087" fill="#605058"/>
<polygon points="668,1085 684,1096 684,1104 668,1093" fill="#5c4b54"/>
<polygon points="668,1091 684,1103 684,1111 668,1099" fill="#5a4852"/>
<polygon points="668,1098 684,1109 684,1117 668,1106" fill="#5a4852"/>
<polygon points="668,1104 684,1115 684,1124 668,1112" fill="#5a4852"/>
<polygon points="668,1110 684,1122 684,1130 668,1118" fill="#5a4852"/>
</g></g></g>
<mask id="mR" maskUnits="userSpaceOnUse" x="0" y="0" width="1800" height="1200"><linearGradient id="mgR" gradientUnits="userSpaceOnUse" x1="893.7" y1="716.8" x2="921.3" y2="757.3"><stop offset="0" stop-color="#fff" stop-opacity="0"/><stop offset="1" stop-color="#fff" stop-opacity="1"/></linearGradient><rect x="0" y="0" width="1800" height="1200" fill="url(#mgR)"/></mask>
<g clip-path="url(#cBody)"><g mask="url(#mR)"><g filter="url(#b35)" shape-rendering="crispEdges">
<polygon points="1199,519 1184,529 1183,535 1198,525" fill="#929c82"/>
<polygon points="1199,524 1183,534 1182,540 1198,530" fill="#929c82"/>
<polygon points="1198,529 1182,539 1181,545 1197,535" fill="#929c82"/>
<polygon points="1197,534 1181,544 1180,550 1196,540" fill="#929c82"/>
<polygon points="1196,539 1181,549 1179,555 1195,545" fill="#929c82"/>
<polygon points="1195,544 1180,554 1179,560 1194,550" fill="#929c82"/>
<polygon points="1194,549 1179,559 1178,565 1193,555" fill="#929c82"/>
<polygon points="1194,554 1178,564 1177,571 1193,560" fill="#929c82"/>
<polygon points="1193,559 1177,569 1176,576 1192,565" fill="#929c82"/>
<polygon points="1192,564 1176,574 1175,581 1191,570" fill="#929c82"/>
<polygon points="1191,569 1176,579 1175,586 1190,575" fill="#929c82"/>
<polygon points="1190,574 1175,584 1174,591 1189,580" fill="#919b80"/>
<polygon points="1189,579 1174,589 1173,596 1188,585" fill="#90997d"/>
<polygon points="1189,584 1173,594 1172,601 1187,590" fill="#8f977a"/>
<polygon points="1188,589 1172,600 1171,606 1187,595" fill="#8d9477"/>
<polygon points="1187,594 1172,605 1171,611 1186,600" fill="#8c9376"/>
<polygon points="1186,599 1171,610 1170,616 1185,605" fill="#8b9275"/>
<polygon points="1185,604 1170,615 1169,621 1184,610" fill="#8a9174"/>
<polygon points="1184,609 1169,620 1168,626 1183,615" fill="#899073"/>
<polygon points="1184,614 1168,625 1167,631 1182,620" fill="#888e72"/>
<polygon points="1183,619 1167,630 1166,636 1182,625" fill="#878d71"/>
<polygon points="1182,624 1167,635 1166,641 1181,630" fill="#878b6f"/>
<polygon points="1181,629 1166,640 1165,646 1180,635" fill="#868a6e"/>
<polygon points="1180,634 1165,645 1164,651 1179,640" fill="#85886c"/>
<polygon points="1179,639 1164,650 1163,656 1178,645" fill="#82846b"/>
<polygon points="1178,644 1163,655 1162,661 1177,650" fill="#80806a"/>
<polygon points="1178,649 1163,660 1162,666 1177,655" fill="#7d7b68"/>
<polygon points="1177,654 1162,665 1161,672 1176,660" fill="#7a7767"/>
<polygon points="1176,659 1161,670 1160,677 1175,665" fill="#777265"/>
<polygon points="1175,664 1160,675 1159,682 1174,670" fill="#726a62"/>
<polygon points="1174,669 1159,680 1158,687 1173,675" fill="#6d6360"/>
<polygon points="1173,674 1159,685 1157,692 1172,680" fill="#695c5d"/>
<polygon points="1173,679 1158,690 1157,697 1172,685" fill="#655659"/>
<polygon points="1172,684 1157,695 1156,702 1171,690" fill="#605056"/>
<polygon points="1171,689 1156,700 1155,707 1170,695" fill="#5d4b54"/>
<polygon points="1170,694 1155,706 1154,712 1169,700" fill="#5b4953"/>
<polygon points="1169,699 1154,711 1153,717 1168,705" fill="#5a4852"/>
<polygon points="1168,704 1154,716 1153,722 1167,710" fill="#5a4852"/>
<polygon points="1168,709 1153,721 1152,727 1167,715" fill="#5a4852"/>
<polygon points="1167,714 1152,726 1151,732 1166,720" fill="#5a4852"/>
<polygon points="1186,528 1170,538 1169,544 1185,534" fill="#929c82"/>
<polygon points="1185,533 1169,543 1168,549 1184,539" fill="#929c82"/>
<polygon points="1184,538 1169,548 1168,554 1183,544" fill="#929c82"/>
<polygon points="1183,543 1168,553 1167,559 1182,549" fill="#929c82"/>
<polygon points="1183,548 1167,558 1166,564 1182,554" fill="#929c82"/>
<polygon points="1182,553 1166,563 1165,569 1181,559" fill="#929c82"/>
<polygon points="1181,558 1165,568 1164,575 1180,564" fill="#929c82"/>
<polygon points="1180,563 1165,573 1164,580 1179,569" fill="#929c82"/>
<polygon points="1179,568 1164,578 1163,585 1178,574" fill="#929c82"/>
<polygon points="1178,573 1163,583 1162,590 1177,579" fill="#929c82"/>
<polygon points="1178,578 1162,588 1161,595 1177,584" fill="#929c82"/>
<polygon points="1177,583 1161,594 1160,600 1176,589" fill="#919b80"/>
<polygon points="1176,588 1161,599 1160,605 1175,594" fill="#90997d"/>
<polygon points="1175,593 1160,604 1159,610 1174,599" fill="#8f977a"/>
<polygon points="1174,598 1159,609 1158,615 1173,604" fill="#8d9477"/>
<polygon points="1174,603 1158,614 1157,620 1173,610" fill="#8c9376"/>
<polygon points="1173,608 1157,619 1156,625 1172,615" fill="#8b9275"/>
<polygon points="1172,613 1157,624 1156,630 1171,620" fill="#8a9174"/>
<polygon points="1171,618 1156,629 1155,636 1170,625" fill="#899073"/>
<polygon points="1170,623 1155,634 1154,641 1169,630" fill="#888e72"/>
<polygon points="1169,628 1154,639 1153,646 1168,635" fill="#878d71"/>
<polygon points="1169,633 1153,644 1152,651 1168,640" fill="#878b6f"/>
<polygon points="1168,638 1153,649 1152,656 1167,645" fill="#868a6e"/>
<polygon points="1167,644 1152,655 1151,661 1166,650" fill="#85886c"/>
<polygon points="1166,649 1151,660 1150,666 1165,655" fill="#82846b"/>
<polygon points="1165,654 1150,665 1149,671 1164,660" fill="#80806a"/>
<polygon points="1165,659 1150,670 1149,676 1164,665" fill="#7d7b68"/>
<polygon points="1164,664 1149,675 1148,681 1163,670" fill="#7a7767"/>
<polygon points="1163,669 1148,680 1147,686 1162,675" fill="#777265"/>
<polygon points="1162,674 1147,685 1146,691 1161,680" fill="#726a62"/>
<polygon points="1161,679 1146,690 1145,697 1160,685" fill="#6d6360"/>
<polygon points="1160,684 1146,695 1145,702 1159,690" fill="#695c5d"/>
<polygon points="1160,689 1145,700 1144,707 1159,695" fill="#655659"/>
<polygon points="1159,694 1144,705 1143,712 1158,700" fill="#605056"/>
<polygon points="1158,699 1143,710 1142,717 1157,705" fill="#5d4b54"/>
<polygon points="1157,704 1142,716 1141,722 1156,710" fill="#5b4953"/>
<polygon points="1156,709 1142,721 1141,727 1155,715" fill="#5a4852"/>
<polygon points="1156,714 1141,726 1140,732 1155,720" fill="#5a4852"/>
<polygon points="1155,719 1140,731 1139,737 1154,726" fill="#5a4852"/>
<polygon points="1154,724 1139,736 1138,742 1153,731" fill="#5a4852"/>
<polygon points="1172,536 1156,546 1156,553 1171,543" fill="#919a86"/>
<polygon points="1171,541 1156,552 1155,558 1170,548" fill="#919a86"/>
<polygon points="1171,546 1155,557 1154,563 1170,553" fill="#919a86"/>
<polygon points="1170,552 1154,562 1153,568 1169,558" fill="#919a86"/>
<polygon points="1169,557 1153,567 1152,573 1168,563" fill="#919a86"/>
<polygon points="1168,562 1153,572 1152,578 1167,568" fill="#919a86"/>
<polygon points="1167,567 1152,577 1151,584 1166,573" fill="#919a86"/>
<polygon points="1167,572 1151,582 1150,589 1166,578" fill="#919a86"/>
<polygon points="1166,577 1150,587 1149,594 1165,583" fill="#919a86"/>
<polygon points="1165,582 1150,592 1149,599 1164,588" fill="#919a86"/>
<polygon points="1164,587 1149,598 1148,604 1163,594" fill="#919a86"/>
<polygon points="1163,592 1148,603 1147,609 1162,599" fill="#909a84"/>
<polygon points="1163,597 1147,608 1146,614 1162,604" fill="#909880"/>
<polygon points="1162,602 1146,613 1145,619 1161,609" fill="#8f977c"/>
<polygon points="1161,607 1146,618 1145,625 1160,614" fill="#8d9578"/>
<polygon points="1160,612 1145,623 1144,630 1159,619" fill="#8c9376"/>
<polygon points="1159,618 1144,628 1143,635 1158,624" fill="#8b9275"/>
<polygon points="1159,623 1143,633 1142,640 1158,629" fill="#8a9174"/>
<polygon points="1158,628 1143,639 1142,645 1157,634" fill="#899073"/>
<polygon points="1157,633 1142,644 1141,650 1156,639" fill="#888e72"/>
<polygon points="1156,638 1141,649 1140,655 1155,644" fill="#878d71"/>
<polygon points="1155,643 1140,654 1139,660 1154,649" fill="#878b6f"/>
<polygon points="1155,648 1140,659 1139,665 1154,654" fill="#868a6e"/>
<polygon points="1154,653 1139,664 1138,671 1153,660" fill="#85886c"/>
<polygon points="1153,658 1138,669 1137,676 1152,665" fill="#82846b"/>
<polygon points="1152,663 1137,674 1136,681 1151,670" fill="#80806a"/>
<polygon points="1151,668 1136,680 1135,686 1150,675" fill="#7d7b68"/>
<polygon points="1151,673 1136,685 1135,691 1150,680" fill="#7a7767"/>
<polygon points="1150,679 1135,690 1134,696 1149,685" fill="#777265"/>
<polygon points="1149,684 1134,695 1133,701 1148,690" fill="#726a62"/>
<polygon points="1148,689 1133,700 1132,706 1147,695" fill="#6d6360"/>
<polygon points="1147,694 1133,705 1132,712 1146,700" fill="#695c5d"/>
<polygon points="1147,699 1132,710 1131,717 1146,705" fill="#655659"/>
<polygon points="1146,704 1131,715 1130,722 1145,710" fill="#605056"/>
<polygon points="1145,709 1130,720 1129,727 1144,715" fill="#5d4b54"/>
<polygon points="1144,714 1129,726 1129,732 1143,720" fill="#5b4953"/>
<polygon points="1144,719 1129,731 1128,737 1142,726" fill="#5a4852"/>
<polygon points="1143,724 1128,736 1127,742 1142,731" fill="#5a4852"/>
<polygon points="1142,729 1127,741 1126,747 1141,736" fill="#5a4852"/>
<polygon points="1141,734 1126,746 1125,753 1140,741" fill="#5a4852"/>
<polygon points="1159,545 1143,555 1142,562 1158,552" fill="#8f988a"/>
<polygon points="1158,550 1142,560 1141,567 1157,557" fill="#8f988a"/>
<polygon points="1157,555 1141,566 1140,572 1156,562" fill="#8f988a"/>
<polygon points="1156,560 1141,571 1140,577 1155,567" fill="#8f988a"/>
<polygon points="1155,566 1140,576 1139,582 1154,572" fill="#8f988a"/>
<polygon points="1155,571 1139,581 1138,588 1154,577" fill="#8f988a"/>
<polygon points="1154,576 1138,586 1137,593 1153,582" fill="#8f988a"/>
<polygon points="1153,581 1138,591 1137,598 1152,587" fill="#8f988a"/>
<polygon points="1152,586 1137,596 1136,603 1151,592" fill="#8f988a"/>
<polygon points="1152,591 1136,602 1135,608 1151,598" fill="#8f988a"/>
<polygon points="1151,596 1135,607 1134,613 1150,603" fill="#8f988a"/>
<polygon points="1150,601 1135,612 1134,618 1149,608" fill="#8f9888"/>
<polygon points="1149,606 1134,617 1133,624 1148,613" fill="#8f9884"/>
<polygon points="1148,612 1133,622 1132,629 1147,618" fill="#8f967e"/>
<polygon points="1148,617 1132,627 1131,634 1147,623" fill="#8e9579"/>
<polygon points="1147,622 1132,633 1131,639 1146,628" fill="#8c9376"/>
<polygon points="1146,627 1131,638 1130,644 1145,633" fill="#8c9276"/>
<polygon points="1145,632 1130,643 1129,649 1144,638" fill="#8b9175"/>
<polygon points="1145,637 1129,648 1128,654 1144,644" fill="#899073"/>
<polygon points="1144,642 1129,653 1128,660 1143,649" fill="#888f72"/>
<polygon points="1143,647 1128,658 1127,665 1142,654" fill="#888d71"/>
<polygon points="1142,652 1127,663 1126,670 1141,659" fill="#878b6f"/>
<polygon points="1141,658 1126,669 1125,675 1140,664" fill="#868a6e"/>
<polygon points="1141,663 1126,674 1125,680 1140,669" fill="#85886c"/>
<polygon points="1140,668 1125,679 1124,685 1139,674" fill="#82846b"/>
<polygon points="1139,673 1124,684 1123,691 1138,679" fill="#80806a"/>
<polygon points="1138,678 1123,689 1122,696 1137,685" fill="#7d7b68"/>
<polygon points="1138,683 1123,694 1122,701 1137,690" fill="#7a7767"/>
<polygon points="1137,688 1122,700 1121,706 1136,695" fill="#777265"/>
<polygon points="1136,693 1121,705 1120,711 1135,700" fill="#726a62"/>
<polygon points="1135,699 1120,710 1119,716 1134,705" fill="#6d6360"/>
<polygon points="1135,704 1120,715 1119,721 1134,710" fill="#695c5d"/>
<polygon points="1134,709 1119,720 1118,727 1133,715" fill="#655659"/>
<polygon points="1133,714 1118,725 1117,732 1132,720" fill="#605056"/>
<polygon points="1132,719 1117,730 1116,737 1131,725" fill="#5d4b54"/>
<polygon points="1131,724 1117,736 1116,742 1130,731" fill="#5b4953"/>
<polygon points="1131,729 1116,741 1115,747 1130,736" fill="#5a4852"/>
<polygon points="1130,734 1115,746 1114,752 1129,741" fill="#5a4852"/>
<polygon points="1129,739 1114,751 1113,758 1128,746" fill="#5a4852"/>
<polygon points="1128,745 1114,756 1113,763 1127,751" fill="#5a4852"/>
<polygon points="1145,554 1129,564 1128,571 1144,560" fill="#8e978d"/>
<polygon points="1144,559 1128,569 1128,576 1143,566" fill="#8e978d"/>
<polygon points="1143,564 1128,574 1127,581 1142,571" fill="#8e978d"/>
<polygon points="1143,569 1127,580 1126,586 1142,576" fill="#8e978d"/>
<polygon points="1142,575 1126,585 1125,591 1141,581" fill="#8e978d"/>
<polygon points="1141,580 1126,590 1125,597 1140,586" fill="#8e978d"/>
<polygon points="1140,585 1125,595 1124,602 1139,591" fill="#8e978d"/>
<polygon points="1140,590 1124,600 1123,607 1139,596" fill="#8e978d"/>
<polygon points="1139,595 1123,606 1122,612 1138,602" fill="#8e978d"/>
<polygon points="1138,600 1123,611 1122,617 1137,607" fill="#8e978d"/>
<polygon points="1137,605 1122,616 1121,622 1136,612" fill="#8e978e"/>
<polygon points="1137,611 1121,621 1120,628 1136,617" fill="#8e978c"/>
<polygon points="1136,616 1120,626 1120,633 1135,622" fill="#8e9788"/>
<polygon points="1135,621 1120,631 1119,638 1134,627" fill="#8e9682"/>
<polygon points="1134,626 1119,637 1118,643 1133,632" fill="#8d957c"/>
<polygon points="1134,631 1118,642 1117,648 1133,638" fill="#8d9477"/>
<polygon points="1133,636 1118,647 1117,654 1132,643" fill="#8c9276"/>
<polygon points="1132,641 1117,652 1116,659 1131,648" fill="#8b9175"/>
<polygon points="1131,647 1116,657 1115,664 1130,653" fill="#8a9074"/>
<polygon points="1131,652 1115,663 1114,669 1130,658" fill="#898f73"/>
<polygon points="1130,657 1115,668 1114,674 1129,663" fill="#888d71"/>
<polygon points="1129,662 1114,673 1113,680 1128,669" fill="#878b6f"/>
<polygon points="1128,667 1113,678 1112,685 1127,674" fill="#868a6e"/>
<polygon points="1128,672 1112,683 1112,690 1127,679" fill="#85886c"/>
<polygon points="1127,677 1112,689 1111,695 1126,684" fill="#82846b"/>
<polygon points="1126,683 1111,694 1110,700 1125,689" fill="#80806a"/>
<polygon points="1125,688 1110,699 1109,705 1124,694" fill="#7d7b68"/>
<polygon points="1125,693 1110,704 1109,711 1124,699" fill="#7a7767"/>
<polygon points="1124,698 1109,709 1108,716 1123,705" fill="#777265"/>
<polygon points="1123,703 1108,714 1107,721 1122,710" fill="#726a62"/>
<polygon points="1122,708 1107,720 1106,726 1121,715" fill="#6d6360"/>
<polygon points="1122,714 1107,725 1106,731 1121,720" fill="#695c5d"/>
<polygon points="1121,719 1106,730 1105,737 1120,725" fill="#655659"/>
<polygon points="1120,724 1105,735 1104,742 1119,730" fill="#605056"/>
<polygon points="1119,729 1104,740 1104,747 1118,735" fill="#5d4b54"/>
<polygon points="1119,734 1104,746 1103,752 1118,741" fill="#5b4953"/>
<polygon points="1118,739 1103,751 1102,757 1117,746" fill="#5a4852"/>
<polygon points="1117,744 1102,756 1101,763 1116,751" fill="#5a4852"/>
<polygon points="1116,750 1102,761 1101,768 1115,756" fill="#5a4852"/>
<polygon points="1116,755 1101,766 1100,773 1115,761" fill="#5a4852"/>
<polygon points="1131,563 1116,573 1115,579 1130,569" fill="#8d9591"/>
<polygon points="1131,568 1115,578 1114,585 1130,574" fill="#8d9591"/>
<polygon points="1130,573 1114,583 1113,590 1129,580" fill="#8d9591"/>
<polygon points="1129,578 1113,589 1113,595 1128,585" fill="#8d9591"/>
<polygon points="1128,583 1113,594 1112,600 1127,590" fill="#8d9591"/>
<polygon points="1128,589 1112,599 1111,606 1127,595" fill="#8d9591"/>
<polygon points="1127,594 1111,604 1110,611 1126,600" fill="#8d9591"/>
<polygon points="1126,599 1111,609 1110,616 1125,606" fill="#8d9591"/>
<polygon points="1125,604 1110,615 1109,621 1124,611" fill="#8d9591"/>
<polygon points="1125,609 1109,620 1108,626 1124,616" fill="#8d9591"/>
<polygon points="1124,615 1108,625 1108,632 1123,621" fill="#8d9591"/>
<polygon points="1123,620 1108,630 1107,637 1122,626" fill="#8d9591"/>
<polygon points="1122,625 1107,636 1106,642 1122,631" fill="#8d958d"/>
<polygon points="1122,630 1106,641 1105,647 1121,637" fill="#8d9586"/>
<polygon points="1121,635 1106,646 1105,653 1120,642" fill="#8d957f"/>
<polygon points="1120,640 1105,651 1104,658 1119,647" fill="#8d9478"/>
<polygon points="1120,646 1104,656 1103,663 1119,652" fill="#8c9276"/>
<polygon points="1119,651 1104,662 1103,668 1118,657" fill="#8b9175"/>
<polygon points="1118,656 1103,667 1102,673 1117,663" fill="#8a9074"/>
<polygon points="1117,661 1102,672 1101,679 1116,668" fill="#898f73"/>
<polygon points="1117,666 1101,677 1101,684 1116,673" fill="#888d71"/>
<polygon points="1116,672 1101,683 1100,689 1115,678" fill="#878b6f"/>
<polygon points="1115,677 1100,688 1099,694 1114,683" fill="#868a6e"/>
<polygon points="1114,682 1099,693 1098,700 1113,688" fill="#85886c"/>
<polygon points="1114,687 1099,698 1098,705 1113,694" fill="#82846b"/>
<polygon points="1113,692 1098,703 1097,710 1112,699" fill="#80806a"/>
<polygon points="1112,697 1097,709 1096,715 1111,704" fill="#7d7b68"/>
<polygon points="1111,703 1096,714 1096,720 1111,709" fill="#7a7767"/>
<polygon points="1111,708 1096,719 1095,726 1110,714" fill="#777265"/>
<polygon points="1110,713 1095,724 1094,731 1109,720" fill="#726a62"/>
<polygon points="1109,718 1094,730 1093,736 1108,725" fill="#6d6360"/>
<polygon points="1109,723 1094,735 1093,741 1108,730" fill="#695c5d"/>
<polygon points="1108,729 1093,740 1092,747 1107,735" fill="#655659"/>
<polygon points="1107,734 1092,745 1091,752 1106,740" fill="#605056"/>
<polygon points="1106,739 1092,750 1091,757 1105,745" fill="#5d4b54"/>
<polygon points="1106,744 1091,756 1090,762 1105,751" fill="#5b4953"/>
<polygon points="1105,749 1090,761 1089,767 1104,756" fill="#5a4852"/>
<polygon points="1104,754 1089,766 1088,773 1103,761" fill="#5a4852"/>
<polygon points="1103,760 1089,771 1088,778 1103,766" fill="#5a4852"/>
<polygon points="1103,765 1088,777 1087,783 1102,771" fill="#5a4852"/>
<polygon points="1118,572 1102,582 1101,588 1117,578" fill="#899194"/>
<polygon points="1117,577 1101,587 1100,594 1116,583" fill="#899194"/>
<polygon points="1116,582 1101,592 1100,599 1115,589" fill="#899194"/>
<polygon points="1115,587 1100,597 1099,604 1115,594" fill="#899194"/>
<polygon points="1115,592 1099,603 1098,609 1114,599" fill="#899194"/>
<polygon points="1114,598 1098,608 1098,615 1113,604" fill="#899194"/>
<polygon points="1113,603 1098,613 1097,620 1112,609" fill="#899194"/>
<polygon points="1113,608 1097,618 1096,625 1112,615" fill="#899194"/>
<polygon points="1112,613 1096,624 1096,630 1111,620" fill="#899194"/>
<polygon points="1111,618 1096,629 1095,636 1110,625" fill="#899194"/>
<polygon points="1110,624 1095,634 1094,641 1110,630" fill="#8a9195"/>
<polygon points="1110,629 1094,639 1094,646 1109,636" fill="#8a9295"/>
<polygon points="1109,634 1094,645 1093,651 1108,641" fill="#8b9291"/>
<polygon points="1108,639 1093,650 1092,657 1107,646" fill="#8b938b"/>
<polygon points="1108,645 1092,655 1091,662 1107,651" fill="#8c9482"/>
<polygon points="1107,650 1092,661 1091,667 1106,656" fill="#8c937b"/>
<polygon points="1106,655 1091,666 1090,672 1105,662" fill="#8c9276"/>
<polygon points="1106,660 1090,671 1089,678 1105,667" fill="#8b9175"/>
<polygon points="1105,665 1090,676 1089,683 1104,672" fill="#8a9074"/>
<polygon points="1104,671 1089,682 1088,688 1103,677" fill="#898f73"/>
<polygon points="1103,676 1088,687 1087,693 1102,682" fill="#888d71"/>
<polygon points="1103,681 1088,692 1087,699 1102,688" fill="#878b6f"/>
<polygon points="1102,686 1087,697 1086,704 1101,693" fill="#868a6e"/>
<polygon points="1101,692 1086,703 1085,709 1100,698" fill="#85886c"/>
<polygon points="1101,697 1085,708 1085,714 1100,703" fill="#82846b"/>
<polygon points="1100,702 1085,713 1084,720 1099,709" fill="#80806a"/>
<polygon points="1099,707 1084,718 1083,725 1098,714" fill="#7d7b68"/>
<polygon points="1098,712 1083,724 1083,730 1098,719" fill="#7a7767"/>
<polygon points="1098,718 1083,729 1082,735 1097,724" fill="#777265"/>
<polygon points="1097,723 1082,734 1081,741 1096,729" fill="#726a62"/>
<polygon points="1096,728 1081,739 1080,746 1095,735" fill="#6d6360"/>
<polygon points="1096,733 1081,745 1080,751 1095,740" fill="#695c5d"/>
<polygon points="1095,738 1080,750 1079,757 1094,745" fill="#655659"/>
<polygon points="1094,744 1079,755 1078,762 1093,750" fill="#605056"/>
<polygon points="1093,749 1079,760 1078,767 1093,756" fill="#5d4b54"/>
<polygon points="1093,754 1078,766 1077,772 1092,761" fill="#5b4953"/>
<polygon points="1092,759 1077,771 1076,778 1091,766" fill="#5a4852"/>
<polygon points="1091,765 1077,776 1076,783 1090,771" fill="#5a4852"/>
<polygon points="1091,770 1076,781 1075,788 1090,776" fill="#5a4852"/>
<polygon points="1090,775 1075,787 1074,793 1089,782" fill="#5a4852"/>
<polygon points="1104,580 1088,590 1087,597 1103,587" fill="#848c98"/>
<polygon points="1103,586 1088,596 1087,602 1102,592" fill="#848c98"/>
<polygon points="1103,591 1087,601 1086,608 1102,597" fill="#848c98"/>
<polygon points="1102,596 1086,606 1085,613 1101,603" fill="#848c98"/>
<polygon points="1101,601 1086,612 1085,618 1100,608" fill="#848c98"/>
<polygon points="1101,607 1085,617 1084,624 1100,613" fill="#848c98"/>
<polygon points="1100,612 1084,622 1083,629 1099,618" fill="#848c98"/>
<polygon points="1099,617 1084,627 1083,634 1098,624" fill="#848c98"/>
<polygon points="1098,622 1083,633 1082,639 1098,629" fill="#848c98"/>
<polygon points="1098,628 1082,638 1081,645 1097,634" fill="#848c98"/>
<polygon points="1097,633 1082,643 1081,650 1096,639" fill="#858c98"/>
<polygon points="1096,638 1081,649 1080,655 1096,645" fill="#858d98"/>
<polygon points="1096,643 1080,654 1079,661 1095,650" fill="#868e96"/>
<polygon points="1095,649 1080,659 1079,666 1094,655" fill="#88908f"/>
<polygon points="1094,654 1079,665 1078,671 1093,660" fill="#8a9186"/>
<polygon points="1094,659 1078,670 1077,677 1093,666" fill="#8b927e"/>
<polygon points="1093,664 1078,675 1077,682 1092,671" fill="#8c9277"/>
<polygon points="1092,670 1077,680 1076,687 1091,676" fill="#8b9175"/>
<polygon points="1092,675 1076,686 1075,692 1091,681" fill="#8a9074"/>
<polygon points="1091,680 1076,691 1075,698 1090,687" fill="#898f73"/>
<polygon points="1090,685 1075,696 1074,703 1089,692" fill="#888d71"/>
<polygon points="1089,691 1074,702 1073,708 1089,697" fill="#878b6f"/>
<polygon points="1089,696 1074,707 1073,714 1088,703" fill="#868a6e"/>
<polygon points="1088,701 1073,712 1072,719 1087,708" fill="#85886c"/>
<polygon points="1087,706 1072,717 1071,724 1087,713" fill="#82846b"/>
<polygon points="1087,712 1072,723 1071,729 1086,718" fill="#80806a"/>
<polygon points="1086,717 1071,728 1070,735 1085,724" fill="#7d7b68"/>
<polygon points="1085,722 1070,733 1069,740 1084,729" fill="#7a7767"/>
<polygon points="1085,727 1070,739 1069,745 1084,734" fill="#777265"/>
<polygon points="1084,733 1069,744 1068,751 1083,739" fill="#726a62"/>
<polygon points="1083,738 1068,749 1067,756 1082,745" fill="#6d6360"/>
<polygon points="1083,743 1068,755 1067,761 1082,750" fill="#695c5d"/>
<polygon points="1082,748 1067,760 1066,766 1081,755" fill="#655659"/>
<polygon points="1081,754 1066,765 1066,772 1080,760" fill="#605056"/>
<polygon points="1081,759 1066,770 1065,777 1080,766" fill="#5d4b54"/>
<polygon points="1080,764 1065,776 1064,782 1079,771" fill="#5b4953"/>
<polygon points="1079,769 1064,781 1064,788 1078,776" fill="#5a4852"/>
<polygon points="1078,775 1064,786 1063,793 1078,781" fill="#5a4852"/>
<polygon points="1078,780 1063,792 1062,798 1077,787" fill="#5a4852"/>
<polygon points="1077,785 1062,797 1062,804 1076,792" fill="#5a4852"/>
<polygon points="1090,589 1075,599 1074,606 1089,596" fill="#7f869b"/>
<polygon points="1090,594 1074,605 1073,611 1089,601" fill="#7f869b"/>
<polygon points="1089,600 1073,610 1073,617 1088,606" fill="#7f869b"/>
<polygon points="1088,605 1073,615 1072,622 1087,612" fill="#7f869b"/>
<polygon points="1088,610 1072,621 1071,627 1087,617" fill="#7f869b"/>
<polygon points="1087,616 1071,626 1071,633 1086,622" fill="#7f869b"/>
<polygon points="1086,621 1071,631 1070,638 1085,628" fill="#7f869b"/>
<polygon points="1086,626 1070,637 1069,643 1085,633" fill="#7f869b"/>
<polygon points="1085,631 1069,642 1069,649 1084,638" fill="#7f869b"/>
<polygon points="1084,637 1069,647 1068,654 1083,643" fill="#7f869b"/>
<polygon points="1084,642 1068,653 1067,659 1083,649" fill="#7f869b"/>
<polygon points="1083,647 1068,658 1067,665 1082,654" fill="#80879b"/>
<polygon points="1082,653 1067,663 1066,670 1081,659" fill="#82899a"/>
<polygon points="1082,658 1066,668 1065,675 1081,665" fill="#848c94"/>
<polygon points="1081,663 1066,674 1065,681 1080,670" fill="#878e8b"/>
<polygon points="1080,668 1065,679 1064,686 1079,675" fill="#8a9181"/>
<polygon points="1080,674 1064,684 1064,691 1079,680" fill="#8b9279"/>
<polygon points="1079,679 1064,690 1063,697 1078,686" fill="#8b9175"/>
<polygon points="1078,684 1063,695 1062,702 1077,691" fill="#8a9074"/>
<polygon points="1078,690 1062,700 1062,707 1077,696" fill="#898f73"/>
<polygon points="1077,695 1062,706 1061,713 1076,702" fill="#888d71"/>
<polygon points="1076,700 1061,711 1060,718 1075,707" fill="#878c70"/>
<polygon points="1076,705 1060,716 1060,723 1075,712" fill="#868a6e"/>
<polygon points="1075,711 1060,722 1059,728 1074,717" fill="#85886c"/>
<polygon points="1074,716 1059,727 1058,734 1073,723" fill="#82846b"/>
<polygon points="1074,721 1059,732 1058,739 1073,728" fill="#80806a"/>
<polygon points="1073,727 1058,738 1057,744 1072,733" fill="#7d7b68"/>
<polygon points="1072,732 1057,743 1056,750 1071,739" fill="#7a7767"/>
<polygon points="1072,737 1057,748 1056,755 1071,744" fill="#777265"/>
<polygon points="1071,742 1056,754 1055,760 1070,749" fill="#726a62"/>
<polygon points="1070,748 1055,759 1055,766 1069,754" fill="#6d6360"/>
<polygon points="1070,753 1055,764 1054,771 1069,760" fill="#695c5d"/>
<polygon points="1069,758 1054,770 1053,776 1068,765" fill="#655659"/>
<polygon points="1068,764 1053,775 1053,782 1067,770" fill="#605056"/>
<polygon points="1068,769 1053,780 1052,787 1067,776" fill="#5d4b54"/>
<polygon points="1067,774 1052,786 1051,792 1066,781" fill="#5b4953"/>
<polygon points="1066,779 1051,791 1051,798 1065,786" fill="#5a4852"/>
<polygon points="1066,785 1051,796 1050,803 1065,791" fill="#5a4852"/>
<polygon points="1065,790 1050,802 1049,808 1064,797" fill="#5a4852"/>
<polygon points="1064,795 1050,807 1049,814 1063,802" fill="#5a4852"/>
<polygon points="1077,598 1061,608 1060,615 1076,605" fill="#797f9e"/>
<polygon points="1076,603 1060,613 1060,620 1075,610" fill="#797f9e"/>
<polygon points="1075,609 1060,619 1059,626 1075,615" fill="#797f9e"/>
<polygon points="1075,614 1059,624 1058,631 1074,621" fill="#797f9e"/>
<polygon points="1074,619 1059,629 1058,636 1073,626" fill="#797f9e"/>
<polygon points="1073,625 1058,635 1057,642 1073,631" fill="#797f9e"/>
<polygon points="1073,630 1057,640 1056,647 1072,637" fill="#797f9e"/>
<polygon points="1072,635 1057,646 1056,652 1071,642" fill="#797f9e"/>
<polygon points="1071,641 1056,651 1055,658 1071,647" fill="#797f9e"/>
<polygon points="1071,646 1055,656 1055,663 1070,653" fill="#797f9e"/>
<polygon points="1070,651 1055,662 1054,668 1069,658" fill="#7a809e"/>
<polygon points="1070,656 1054,667 1053,674 1069,663" fill="#7b829e"/>
<polygon points="1069,662 1054,672 1053,679 1068,669" fill="#7d839e"/>
<polygon points="1068,667 1053,678 1052,685 1067,674" fill="#808799"/>
<polygon points="1068,672 1052,683 1051,690 1067,679" fill="#848b90"/>
<polygon points="1067,678 1052,688 1051,695 1066,684" fill="#878e85"/>
<polygon points="1066,683 1051,694 1050,701 1066,690" fill="#8a917c"/>
<polygon points="1066,688 1050,699 1050,706 1065,695" fill="#8b9176"/>
<polygon points="1065,694 1050,705 1049,711 1064,700" fill="#8a9074"/>
<polygon points="1064,699 1049,710 1048,717 1064,706" fill="#898f73"/>
<polygon points="1064,704 1049,715 1048,722 1063,711" fill="#888d71"/>
<polygon points="1063,710 1048,721 1047,727 1062,716" fill="#878c70"/>
<polygon points="1062,715 1047,726 1047,733 1062,722" fill="#868a6e"/>
<polygon points="1062,720 1047,731 1046,738 1061,727" fill="#85886c"/>
<polygon points="1061,726 1046,737 1045,744 1060,732" fill="#82846b"/>
<polygon points="1061,731 1045,742 1045,749 1060,738" fill="#80806a"/>
<polygon points="1060,736 1045,747 1044,754 1059,743" fill="#7d7b68"/>
<polygon points="1059,742 1044,753 1043,760 1058,748" fill="#7a7767"/>
<polygon points="1059,747 1044,758 1043,765 1058,754" fill="#777265"/>
<polygon points="1058,752 1043,764 1042,770 1057,759" fill="#726a62"/>
<polygon points="1057,758 1042,769 1042,776 1056,764" fill="#6d6360"/>
<polygon points="1057,763 1042,774 1041,781 1056,770" fill="#695c5d"/>
<polygon points="1056,768 1041,780 1040,786 1055,775" fill="#655659"/>
<polygon points="1055,774 1040,785 1040,792 1055,780" fill="#605056"/>
<polygon points="1055,779 1040,790 1039,797 1054,786" fill="#5d4b54"/>
<polygon points="1054,784 1039,796 1038,802 1053,791" fill="#5b4953"/>
<polygon points="1053,790 1039,801 1038,808 1053,796" fill="#5a4852"/>
<polygon points="1053,795 1038,806 1037,813 1052,802" fill="#5a4852"/>
<polygon points="1052,800 1037,812 1037,819 1051,807" fill="#5a4852"/>
<polygon points="1051,805 1037,817 1036,824 1051,812" fill="#5a4852"/>
<polygon points="1063,607 1047,617 1047,624 1062,613" fill="#7379a1"/>
<polygon points="1062,612 1047,622 1046,629 1062,619" fill="#7379a1"/>
<polygon points="1062,617 1046,628 1045,634 1061,624" fill="#7379a1"/>
<polygon points="1061,623 1046,633 1045,640 1060,630" fill="#7379a1"/>
<polygon points="1061,628 1045,638 1044,645 1060,635" fill="#7379a1"/>
<polygon points="1060,634 1044,644 1044,651 1059,640" fill="#7379a1"/>
<polygon points="1059,639 1044,649 1043,656 1058,646" fill="#7379a1"/>
<polygon points="1059,644 1043,655 1042,661 1058,651" fill="#7379a1"/>
<polygon points="1058,650 1043,660 1042,667 1057,656" fill="#7379a1"/>
<polygon points="1057,655 1042,665 1041,672 1057,662" fill="#7379a1"/>
<polygon points="1057,660 1041,671 1041,678 1056,667" fill="#747aa1"/>
<polygon points="1056,666 1041,676 1040,683 1055,672" fill="#767ca1"/>
<polygon points="1056,671 1040,682 1039,688 1055,678" fill="#777ea1"/>
<polygon points="1055,676 1040,687 1039,694 1054,683" fill="#7b819d"/>
<polygon points="1054,682 1039,692 1038,699 1053,688" fill="#808695"/>
<polygon points="1054,687 1038,698 1038,705 1053,694" fill="#848b8a"/>
<polygon points="1053,692 1038,703 1037,710 1052,699" fill="#888f80"/>
<polygon points="1052,698 1037,709 1036,715 1052,705" fill="#8a9177"/>
<polygon points="1052,703 1037,714 1036,721 1051,710" fill="#8a9074"/>
<polygon points="1051,709 1036,719 1035,726 1050,715" fill="#898f73"/>
<polygon points="1051,714 1035,725 1035,732 1050,721" fill="#888e71"/>
<polygon points="1050,719 1035,730 1034,737 1049,726" fill="#878c70"/>
<polygon points="1049,725 1034,736 1033,742 1048,731" fill="#868a6e"/>
<polygon points="1049,730 1034,741 1033,748 1048,737" fill="#85886c"/>
<polygon points="1048,735 1033,746 1032,753 1047,742" fill="#82846b"/>
<polygon points="1047,741 1032,752 1032,759 1047,747" fill="#80806a"/>
<polygon points="1047,746 1032,757 1031,764 1046,753" fill="#7d7b68"/>
<polygon points="1046,751 1031,763 1030,769 1045,758" fill="#7a7767"/>
<polygon points="1046,757 1031,768 1030,775 1045,763" fill="#777265"/>
<polygon points="1045,762 1030,773 1029,780 1044,769" fill="#726a62"/>
<polygon points="1044,767 1029,779 1029,786 1043,774" fill="#6d6360"/>
<polygon points="1044,773 1029,784 1028,791 1043,780" fill="#695c5d"/>
<polygon points="1043,778 1028,790 1027,796 1042,785" fill="#655659"/>
<polygon points="1042,784 1028,795 1027,802 1042,790" fill="#605056"/>
<polygon points="1042,789 1027,800 1026,807 1041,796" fill="#5d4b54"/>
<polygon points="1041,794 1026,806 1026,813 1040,801" fill="#5b4953"/>
<polygon points="1041,800 1026,811 1025,818 1040,806" fill="#5a4852"/>
<polygon points="1040,805 1025,817 1024,823 1039,812" fill="#5a4852"/>
<polygon points="1039,810 1025,822 1024,829 1038,817" fill="#5a4852"/>
<polygon points="1039,816 1024,827 1023,834 1038,822" fill="#5a4852"/>
<polygon points="1049,616 1034,626 1033,632 1049,622" fill="#6c72a5"/>
<polygon points="1049,621 1033,631 1032,638 1048,628" fill="#6c72a5"/>
<polygon points="1048,626 1033,637 1032,643 1047,633" fill="#6c72a5"/>
<polygon points="1048,632 1032,642 1031,649 1047,639" fill="#6c72a5"/>
<polygon points="1047,637 1031,647 1031,654 1046,644" fill="#6c72a5"/>
<polygon points="1046,642 1031,653 1030,660 1046,649" fill="#6c72a5"/>
<polygon points="1046,648 1030,658 1030,665 1045,655" fill="#6c72a5"/>
<polygon points="1045,653 1030,664 1029,671 1044,660" fill="#6c72a5"/>
<polygon points="1045,659 1029,669 1028,676 1044,665" fill="#6c72a5"/>
<polygon points="1044,664 1028,675 1028,681 1043,671" fill="#6c72a5"/>
<polygon points="1043,669 1028,680 1027,687 1043,676" fill="#6e73a5"/>
<polygon points="1043,675 1027,685 1027,692 1042,682" fill="#7076a5"/>
<polygon points="1042,680 1027,691 1026,698 1041,687" fill="#7278a5"/>
<polygon points="1042,686 1026,696 1025,703 1041,692" fill="#757ba2"/>
<polygon points="1041,691 1026,702 1025,709 1040,698" fill="#7a819b"/>
<polygon points="1040,696 1025,707 1024,714 1040,703" fill="#808790"/>
<polygon points="1040,702 1024,713 1024,719 1039,709" fill="#858c84"/>
<polygon points="1039,707 1024,718 1023,725 1038,714" fill="#898f7a"/>
<polygon points="1039,713 1023,723 1023,730 1038,719" fill="#8a9074"/>
<polygon points="1038,718 1023,729 1022,736 1037,725" fill="#898f73"/>
<polygon points="1037,723 1022,734 1021,741 1037,730" fill="#888e72"/>
<polygon points="1037,729 1022,740 1021,747 1036,736" fill="#878c70"/>
<polygon points="1036,734 1021,745 1020,752 1035,741" fill="#868a6e"/>
<polygon points="1036,740 1020,751 1020,757 1035,746" fill="#85886c"/>
<polygon points="1035,745 1020,756 1019,763 1034,752" fill="#82846b"/>
<polygon points="1034,750 1019,761 1018,768 1034,757" fill="#80806a"/>
<polygon points="1034,756 1019,767 1018,774 1033,763" fill="#7d7b68"/>
<polygon points="1033,761 1018,772 1017,779 1032,768" fill="#7a7767"/>
<polygon points="1032,767 1017,778 1017,785 1032,773" fill="#777265"/>
<polygon points="1032,772 1017,783 1016,790 1031,779" fill="#726a62"/>
<polygon points="1031,777 1016,789 1016,795 1031,784" fill="#6d6360"/>
<polygon points="1031,783 1016,794 1015,801 1030,789" fill="#695c5d"/>
<polygon points="1030,788 1015,799 1014,806 1029,795" fill="#655659"/>
<polygon points="1029,793 1015,805 1014,812 1029,800" fill="#605056"/>
<polygon points="1029,799 1014,810 1013,817 1028,806" fill="#5d4b54"/>
<polygon points="1028,804 1013,816 1013,823 1027,811" fill="#5b4953"/>
<polygon points="1028,810 1013,821 1012,828 1027,816" fill="#5a4852"/>
<polygon points="1027,815 1012,827 1012,833 1026,822" fill="#5a4852"/>
<polygon points="1026,820 1012,832 1011,839 1026,827" fill="#5a4852"/>
<polygon points="1026,826 1011,838 1010,844 1025,833" fill="#5a4852"/>
<polygon points="1036,624 1020,634 1019,641 1035,631" fill="#656aa8"/>
<polygon points="1035,630 1020,640 1019,647 1034,637" fill="#656aa8"/>
<polygon points="1035,635 1019,645 1018,652 1034,642" fill="#656aa8"/>
<polygon points="1034,641 1018,651 1018,658 1033,647" fill="#656aa8"/>
<polygon points="1033,646 1018,656 1017,663 1033,653" fill="#656aa8"/>
<polygon points="1033,651 1017,662 1017,669 1032,658" fill="#656aa8"/>
<polygon points="1032,657 1017,667 1016,674 1032,664" fill="#656aa8"/>
<polygon points="1032,662 1016,673 1015,680 1031,669" fill="#656aa8"/>
<polygon points="1031,668 1016,678 1015,685 1030,675" fill="#656aa8"/>
<polygon points="1031,673 1015,684 1014,691 1030,680" fill="#656aa8"/>
<polygon points="1030,679 1014,689 1014,696 1029,685" fill="#676ca8"/>
<polygon points="1029,684 1014,695 1013,701 1029,691" fill="#6a6fa8"/>
<polygon points="1029,689 1013,700 1013,707 1028,696" fill="#6c72a8"/>
<polygon points="1028,695 1013,706 1012,712 1027,702" fill="#6f75a7"/>
<polygon points="1028,700 1012,711 1012,718 1027,707" fill="#757ba1"/>
<polygon points="1027,706 1012,716 1011,723 1026,713" fill="#7b8296"/>
<polygon points="1026,711 1011,722 1010,729 1026,718" fill="#82888a"/>
<polygon points="1026,717 1011,727 1010,734 1025,723" fill="#878d7e"/>
<polygon points="1025,722 1010,733 1009,740 1025,729" fill="#899076"/>
<polygon points="1025,727 1009,738 1009,745 1024,734" fill="#898f73"/>
<polygon points="1024,733 1009,744 1008,751 1023,740" fill="#888e72"/>
<polygon points="1024,738 1008,749 1008,756 1023,745" fill="#878c70"/>
<polygon points="1023,744 1008,755 1007,762 1022,751" fill="#868a6e"/>
<polygon points="1022,749 1007,760 1007,767 1022,756" fill="#85886c"/>
<polygon points="1022,755 1007,766 1006,773 1021,761" fill="#83846b"/>
<polygon points="1021,760 1006,771 1005,778 1020,767" fill="#80806a"/>
<polygon points="1021,765 1006,777 1005,783 1020,772" fill="#7d7b68"/>
<polygon points="1020,771 1005,782 1004,789 1019,778" fill="#7a7767"/>
<polygon points="1019,776 1004,788 1004,794 1019,783" fill="#777265"/>
<polygon points="1019,782 1004,793 1003,800 1018,789" fill="#726a62"/>
<polygon points="1018,787 1003,798 1003,805 1018,794" fill="#6d6360"/>
<polygon points="1018,793 1003,804 1002,811 1017,799" fill="#695c5d"/>
<polygon points="1017,798 1002,809 1002,816 1016,805" fill="#655659"/>
<polygon points="1017,803 1002,815 1001,822 1016,810" fill="#605056"/>
<polygon points="1016,809 1001,820 1000,827 1015,816" fill="#5d4b54"/>
<polygon points="1015,814 1001,826 1000,833 1015,821" fill="#5b4953"/>
<polygon points="1015,820 1000,831 999,838 1014,827" fill="#5a4852"/>
<polygon points="1014,825 999,837 999,844 1013,832" fill="#5a4852"/>
<polygon points="1014,831 999,842 998,849 1013,837" fill="#5a4852"/>
<polygon points="1013,836 998,848 998,855 1012,843" fill="#5a4852"/>
<polygon points="1022,633 1006,643 1006,650 1021,640" fill="#6165a9"/>
<polygon points="1022,639 1006,649 1005,656 1021,645" fill="#6165a9"/>
<polygon points="1021,644 1005,654 1005,661 1020,651" fill="#6165a9"/>
<polygon points="1020,650 1005,660 1004,667 1020,656" fill="#6165a9"/>
<polygon points="1020,655 1004,665 1004,672 1019,662" fill="#6165a9"/>
<polygon points="1019,660 1004,671 1003,678 1019,667" fill="#6165a9"/>
<polygon points="1019,666 1003,676 1003,683 1018,673" fill="#6165a9"/>
<polygon points="1018,671 1003,682 1002,689 1017,678" fill="#6165a9"/>
<polygon points="1018,677 1002,687 1001,694 1017,684" fill="#6165a9"/>
<polygon points="1017,682 1002,693 1001,700 1016,689" fill="#6165a9"/>
<polygon points="1016,688 1001,698 1000,705 1016,695" fill="#6367a9"/>
<polygon points="1016,693 1001,704 1000,711 1015,700" fill="#666ba9"/>
<polygon points="1015,699 1000,709 999,716 1015,706" fill="#696ea9"/>
<polygon points="1015,704 999,715 999,722 1014,711" fill="#6b71a8"/>
<polygon points="1014,710 999,720 998,727 1014,716" fill="#7076a4"/>
<polygon points="1014,715 998,726 998,733 1013,722" fill="#777d9b"/>
<polygon points="1013,721 998,731 997,738 1012,727" fill="#7e858f"/>
<polygon points="1013,726 997,737 997,744 1012,733" fill="#848a83"/>
<polygon points="1012,731 997,742 996,749 1011,738" fill="#888e79"/>
<polygon points="1011,737 996,748 996,755 1011,744" fill="#898f73"/>
<polygon points="1011,742 996,753 995,760 1010,749" fill="#888e72"/>
<polygon points="1010,748 995,759 994,766 1010,755" fill="#878c70"/>
<polygon points="1010,753 995,764 994,771 1009,760" fill="#868a6e"/>
<polygon points="1009,759 994,770 993,777 1008,766" fill="#85886c"/>
<polygon points="1009,764 994,775 993,782 1008,771" fill="#83846b"/>
<polygon points="1008,770 993,781 992,788 1007,777" fill="#80806a"/>
<polygon points="1008,775 992,786 992,793 1007,782" fill="#7d7b68"/>
<polygon points="1007,781 992,792 991,799 1006,787" fill="#7a7767"/>
<polygon points="1006,786 991,797 991,804 1006,793" fill="#777265"/>
<polygon points="1006,792 991,803 990,810 1005,798" fill="#726a62"/>
<polygon points="1005,797 990,808 990,815 1005,804" fill="#6d6360"/>
<polygon points="1005,802 990,814 989,821 1004,809" fill="#695c5d"/>
<polygon points="1004,808 989,819 989,826 1003,815" fill="#655659"/>
<polygon points="1004,813 989,825 988,832 1003,820" fill="#605056"/>
<polygon points="1003,819 988,830 988,837 1002,826" fill="#5d4b54"/>
<polygon points="1002,824 988,836 987,843 1002,831" fill="#5b4953"/>
<polygon points="1002,830 987,841 986,848 1001,837" fill="#5a4852"/>
<polygon points="1001,835 987,847 986,854 1001,842" fill="#5a4852"/>
<polygon points="1001,841 986,852 985,859 1000,848" fill="#5a4852"/>
<polygon points="1000,846 986,858 985,865 1000,853" fill="#5a4852"/>
<polygon points="1008,642 993,652 992,659 1008,649" fill="#5d60a9"/>
<polygon points="1008,647 992,658 992,665 1007,654" fill="#5d60a9"/>
<polygon points="1007,653 992,663 991,670 1007,660" fill="#5d60a9"/>
<polygon points="1007,658 991,669 991,676 1006,665" fill="#5d60a9"/>
<polygon points="1006,664 991,674 990,681 1006,671" fill="#5d60a9"/>
<polygon points="1006,669 990,680 990,687 1005,676" fill="#5d60a9"/>
<polygon points="1005,675 990,685 989,692 1005,682" fill="#5d60a9"/>
<polygon points="1005,680 989,691 989,698 1004,687" fill="#5d60a9"/>
<polygon points="1004,686 989,696 988,703 1003,693" fill="#5d60a9"/>
<polygon points="1004,691 988,702 987,709 1003,698" fill="#5d60a9"/>
<polygon points="1003,697 988,707 987,714 1002,704" fill="#5f63a9"/>
<polygon points="1003,702 987,713 986,720 1002,709" fill="#6266a9"/>
<polygon points="1002,708 987,718 986,725 1001,715" fill="#656aa9"/>
<polygon points="1001,713 986,724 985,731 1001,720" fill="#686da8"/>
<polygon points="1001,719 986,730 985,737 1000,726" fill="#6d72a6"/>
<polygon points="1000,724 985,735 984,742 1000,731" fill="#74799e"/>
<polygon points="1000,730 985,741 984,748 999,737" fill="#7b8193"/>
<polygon points="999,735 984,746 983,753 999,742" fill="#818787"/>
<polygon points="999,741 984,752 983,759 998,748" fill="#868c7c"/>
<polygon points="998,746 983,757 982,764 998,753" fill="#898f75"/>
<polygon points="998,752 982,763 982,770 997,759" fill="#888e72"/>
<polygon points="997,757 982,768 981,775 996,764" fill="#888c70"/>
<polygon points="997,763 981,774 981,781 996,770" fill="#868a6e"/>
<polygon points="996,768 981,779 980,786 995,775" fill="#85896d"/>
<polygon points="996,774 980,785 980,792 995,781" fill="#83846b"/>
<polygon points="995,779 980,790 979,797 994,786" fill="#80806a"/>
<polygon points="994,785 979,796 979,803 994,792" fill="#7d7b68"/>
<polygon points="994,790 979,802 978,809 993,797" fill="#7a7767"/>
<polygon points="993,796 978,807 978,814 993,803" fill="#777265"/>
<polygon points="993,801 978,813 977,820 992,808" fill="#726a62"/>
<polygon points="992,807 977,818 977,825 992,814" fill="#6d6360"/>
<polygon points="992,812 977,824 976,831 991,819" fill="#695c5d"/>
<polygon points="991,818 976,829 976,836 991,825" fill="#655659"/>
<polygon points="991,823 976,835 975,842 990,830" fill="#605056"/>
<polygon points="990,829 975,840 975,847 989,836" fill="#5d4b54"/>
<polygon points="990,834 975,846 974,853 989,841" fill="#5b4953"/>
<polygon points="989,840 974,851 974,858 988,847" fill="#5a4852"/>
<polygon points="989,845 974,857 973,864 988,852" fill="#5a4852"/>
<polygon points="988,851 973,862 973,869 987,858" fill="#5a4852"/>
<polygon points="987,856 973,868 972,875 987,863" fill="#5a4852"/>
<polygon points="995,651 979,661 979,668 994,658" fill="#585baa"/>
<polygon points="994,656 979,666 978,673 994,663" fill="#585baa"/>
<polygon points="994,662 978,672 978,679 993,669" fill="#585baa"/>
<polygon points="993,667 978,678 977,685 993,674" fill="#585baa"/>
<polygon points="993,673 977,683 977,690 992,680" fill="#585baa"/>
<polygon points="992,678 977,689 976,696 992,685" fill="#585baa"/>
<polygon points="992,684 976,694 976,701 991,691" fill="#585baa"/>
<polygon points="991,689 976,700 975,707 991,696" fill="#585baa"/>
<polygon points="991,695 975,705 975,712 990,702" fill="#585baa"/>
<polygon points="990,701 975,711 974,718 990,707" fill="#585baa"/>
<polygon points="990,706 974,717 974,724 989,713" fill="#5a5ea9"/>
<polygon points="989,712 974,722 973,729 988,719" fill="#5e62a9"/>
<polygon points="989,717 973,728 973,735 988,724" fill="#6266a9"/>
<polygon points="988,723 973,733 972,740 987,730" fill="#656aa8"/>
<polygon points="988,728 972,739 972,746 987,735" fill="#696ea7"/>
<polygon points="987,734 972,744 971,751 986,741" fill="#7075a1"/>
<polygon points="987,739 971,750 971,757 986,746" fill="#777d98"/>
<polygon points="986,745 971,756 970,763 985,752" fill="#7e848c"/>
<polygon points="985,750 970,761 970,768 985,757" fill="#848a80"/>
<polygon points="985,756 970,767 969,774 984,763" fill="#888e77"/>
<polygon points="984,761 969,772 969,779 984,768" fill="#898e72"/>
<polygon points="984,767 969,778 968,785 983,774" fill="#888c70"/>
<polygon points="983,772 968,783 968,790 983,779" fill="#878b6f"/>
<polygon points="983,778 968,789 967,796 982,785" fill="#86896d"/>
<polygon points="982,783 967,795 967,802 982,790" fill="#83846b"/>
<polygon points="982,789 967,800 966,807 981,796" fill="#80806a"/>
<polygon points="981,795 966,806 966,813 981,802" fill="#7d7b68"/>
<polygon points="981,800 966,811 965,818 980,807" fill="#7a7767"/>
<polygon points="980,806 965,817 965,824 980,813" fill="#777265"/>
<polygon points="980,811 965,822 964,829 979,818" fill="#726a62"/>
<polygon points="979,817 964,828 964,835 979,824" fill="#6d6360"/>
<polygon points="979,822 964,834 963,841 978,829" fill="#695c5d"/>
<polygon points="978,828 963,839 963,846 978,835" fill="#655659"/>
<polygon points="978,833 963,845 962,852 977,840" fill="#605056"/>
<polygon points="977,839 962,850 962,857 977,846" fill="#5d4b54"/>
<polygon points="977,844 962,856 961,863 976,851" fill="#5b4953"/>
<polygon points="976,850 961,861 961,868 976,857" fill="#5a4852"/>
<polygon points="976,855 961,867 960,874 975,862" fill="#5a4852"/>
<polygon points="975,861 960,873 960,880 974,868" fill="#5a4852"/>
<polygon points="975,866 960,878 959,885 974,873" fill="#5a4852"/>
<polygon points="981,660 965,670 965,677 981,667" fill="#5356aa"/>
<polygon points="981,665 965,675 964,682 980,672" fill="#5356aa"/>
<polygon points="980,671 965,681 964,688 980,678" fill="#5356aa"/>
<polygon points="980,676 964,686 963,694 979,683" fill="#5356aa"/>
<polygon points="979,682 964,692 963,699 979,689" fill="#5356aa"/>
<polygon points="979,687 963,698 963,705 978,694" fill="#5356aa"/>
<polygon points="978,693 963,703 962,710 978,700" fill="#5356aa"/>
<polygon points="978,698 962,709 962,716 977,706" fill="#5356aa"/>
<polygon points="977,704 962,714 961,722 977,711" fill="#5356aa"/>
<polygon points="977,710 961,720 961,727 976,717" fill="#5356aa"/>
<polygon points="976,715 961,726 960,733 976,722" fill="#5659aa"/>
<polygon points="976,721 960,731 960,738 975,728" fill="#5a5da9"/>
<polygon points="975,726 960,737 959,744 975,733" fill="#5e61a9"/>
<polygon points="975,732 959,743 959,750 974,739" fill="#6266a8"/>
<polygon points="974,737 959,748 958,755 974,744" fill="#656aa8"/>
<polygon points="974,743 958,754 958,761 973,750" fill="#6b70a4"/>
<polygon points="973,749 958,759 957,766 973,756" fill="#73789b"/>
<polygon points="973,754 957,765 957,772 972,761" fill="#7b8090"/>
<polygon points="972,760 957,771 956,778 972,767" fill="#818785"/>
<polygon points="972,765 957,776 956,783 971,772" fill="#868c7a"/>
<polygon points="971,771 956,782 955,789 971,778" fill="#888e73"/>
<polygon points="971,776 956,787 955,794 970,783" fill="#888c70"/>
<polygon points="970,782 955,793 955,800 970,789" fill="#878b6f"/>
<polygon points="970,788 955,799 954,806 969,795" fill="#86896d"/>
<polygon points="969,793 954,804 954,811 969,800" fill="#83856b"/>
<polygon points="969,799 954,810 953,817 968,806" fill="#80806a"/>
<polygon points="968,804 953,815 953,823 968,811" fill="#7d7b68"/>
<polygon points="968,810 953,821 952,828 967,817" fill="#7a7767"/>
<polygon points="967,815 952,827 952,834 967,822" fill="#777265"/>
<polygon points="967,821 952,832 951,839 966,828" fill="#726a62"/>
<polygon points="966,827 951,838 951,845 966,834" fill="#6d6360"/>
<polygon points="966,832 951,843 950,851 965,839" fill="#695c5d"/>
<polygon points="965,838 950,849 950,856 965,845" fill="#655659"/>
<polygon points="965,843 950,855 949,862 964,850" fill="#605056"/>
<polygon points="964,849 949,860 949,867 964,856" fill="#5d4b54"/>
<polygon points="964,854 949,866 948,873 963,861" fill="#5b4953"/>
<polygon points="963,860 948,871 948,879 963,867" fill="#5a4852"/>
<polygon points="963,866 948,877 947,884 962,873" fill="#5a4852"/>
<polygon points="962,871 948,883 947,890 962,878" fill="#5a4852"/>
<polygon points="962,877 947,888 946,895 961,884" fill="#5a4852"/>
<polygon points="968,668 952,678 951,686 967,675" fill="#4f51aa"/>
<polygon points="967,674 951,684 951,691 966,681" fill="#4f51aa"/>
<polygon points="967,680 951,690 950,697 966,687" fill="#4f51aa"/>
<polygon points="966,685 951,695 950,702 966,692" fill="#4f51aa"/>
<polygon points="966,691 950,701 949,708 965,698" fill="#4f51aa"/>
<polygon points="965,696 950,707 949,714 965,703" fill="#4f51aa"/>
<polygon points="965,702 949,712 949,719 964,709" fill="#4f51aa"/>
<polygon points="964,708 949,718 948,725 964,715" fill="#4f51aa"/>
<polygon points="964,713 948,724 948,731 963,720" fill="#4f51aa"/>
<polygon points="963,719 948,729 947,736 963,726" fill="#4f51aa"/>
<polygon points="963,724 947,735 947,742 962,731" fill="#5153aa"/>
<polygon points="962,730 947,741 946,748 962,737" fill="#5558aa"/>
<polygon points="962,736 946,746 946,753 961,743" fill="#5a5da9"/>
<polygon points="961,741 946,752 945,759 961,748" fill="#5e61a9"/>
<polygon points="961,747 946,757 945,765 960,754" fill="#6266a8"/>
<polygon points="960,752 945,763 945,770 960,759" fill="#676ba6"/>
<polygon points="960,758 945,769 944,776 959,765" fill="#6f749f"/>
<polygon points="959,764 944,774 944,781 959,771" fill="#777c94"/>
<polygon points="959,769 944,780 943,787 958,776" fill="#7e8489"/>
<polygon points="959,775 943,786 943,793 958,782" fill="#848a7e"/>
<polygon points="958,780 943,791 942,798 957,787" fill="#878d75"/>
<polygon points="958,786 942,797 942,804 957,793" fill="#888d70"/>
<polygon points="957,792 942,803 941,810 956,799" fill="#878b6f"/>
<polygon points="957,797 941,808 941,815 956,804" fill="#86896d"/>
<polygon points="956,803 941,814 940,821 956,810" fill="#83856b"/>
<polygon points="956,808 941,819 940,827 955,815" fill="#80806a"/>
<polygon points="955,814 940,825 940,832 955,821" fill="#7d7b68"/>
<polygon points="955,820 940,831 939,838 954,827" fill="#7a7767"/>
<polygon points="954,825 939,836 939,844 954,832" fill="#777265"/>
<polygon points="954,831 939,842 938,849 953,838" fill="#726a62"/>
<polygon points="953,836 938,848 938,855 953,843" fill="#6d6360"/>
<polygon points="953,842 938,853 937,860 952,849" fill="#695c5d"/>
<polygon points="952,848 937,859 937,866 952,855" fill="#655659"/>
<polygon points="952,853 937,865 936,872 951,860" fill="#605056"/>
<polygon points="951,859 937,870 936,877 951,866" fill="#5d4b54"/>
<polygon points="951,864 936,876 936,883 950,871" fill="#5b4953"/>
<polygon points="950,870 936,882 935,889 950,877" fill="#5a4852"/>
<polygon points="950,876 935,887 935,894 949,883" fill="#5a4852"/>
<polygon points="949,881 935,893 934,900 949,888" fill="#5a4852"/>
<polygon points="949,887 934,898 934,906 948,894" fill="#5a4852"/>
<polygon points="954,677 938,687 938,694 953,684" fill="#4a4bab"/>
<polygon points="953,683 938,693 937,700 953,690" fill="#4a4bab"/>
<polygon points="953,688 937,699 937,706 952,696" fill="#4a4bab"/>
<polygon points="953,694 937,704 936,711 952,701" fill="#4a4bab"/>
<polygon points="952,700 936,710 936,717 952,707" fill="#4a4bab"/>
<polygon points="952,705 936,716 936,723 951,712" fill="#4a4bab"/>
<polygon points="951,711 936,721 935,728 951,718" fill="#4a4bab"/>
<polygon points="951,717 935,727 935,734 950,724" fill="#4a4bab"/>
<polygon points="950,722 935,733 934,740 950,729" fill="#4a4bab"/>
<polygon points="950,728 934,738 934,746 949,735" fill="#4a4bab"/>
<polygon points="949,733 934,744 933,751 949,741" fill="#4c4eaa"/>
<polygon points="949,739 933,750 933,757 948,746" fill="#5153aa"/>
<polygon points="948,745 933,755 933,763 948,752" fill="#5558a9"/>
<polygon points="948,750 933,761 932,768 947,758" fill="#5a5da9"/>
<polygon points="948,756 932,767 932,774 947,763" fill="#5e62a8"/>
<polygon points="947,762 932,772 931,780 947,769" fill="#6367a7"/>
<polygon points="947,767 931,778 931,785 946,774" fill="#6b6fa1"/>
<polygon points="946,773 931,784 930,791 946,780" fill="#737898"/>
<polygon points="946,779 930,789 930,797 945,786" fill="#7b808d"/>
<polygon points="945,784 930,795 930,802 945,791" fill="#818782"/>
<polygon points="945,790 930,801 929,808 944,797" fill="#868b78"/>
<polygon points="944,795 929,806 929,814 944,803" fill="#888c71"/>
<polygon points="944,801 929,812 928,819 943,808" fill="#878b6f"/>
<polygon points="943,807 928,818 928,825 943,814" fill="#86896d"/>
<polygon points="943,812 928,823 927,831 942,820" fill="#83856b"/>
<polygon points="943,818 927,829 927,836 942,825" fill="#80806a"/>
<polygon points="942,824 927,835 927,842 942,831" fill="#7d7c68"/>
<polygon points="942,829 927,841 926,848 941,836" fill="#7a7767"/>
<polygon points="941,835 926,846 926,853 941,842" fill="#777265"/>
<polygon points="941,841 926,852 925,859 940,848" fill="#726a62"/>
<polygon points="940,846 925,858 925,865 940,853" fill="#6d6360"/>
<polygon points="940,852 925,863 924,870 939,859" fill="#695c5d"/>
<polygon points="939,858 924,869 924,876 939,865" fill="#655659"/>
<polygon points="939,863 924,875 924,882 938,870" fill="#605056"/>
<polygon points="938,869 924,880 923,887 938,876" fill="#5d4b54"/>
<polygon points="938,874 923,886 923,893 937,882" fill="#5b4953"/>
<polygon points="938,880 923,892 922,899 937,887" fill="#5a4852"/>
<polygon points="937,886 922,897 922,904 937,893" fill="#5a4852"/>
<polygon points="937,891 922,903 921,910 936,898" fill="#5a4852"/>
<polygon points="936,897 921,909 921,916 936,904" fill="#5a4852"/>
<polygon points="940,686 925,696 924,703 940,693" fill="#4546ab"/>
<polygon points="940,692 924,702 924,709 939,699" fill="#4546ab"/>
<polygon points="939,697 924,707 923,715 939,704" fill="#4546ab"/>
<polygon points="939,703 923,713 923,720 938,710" fill="#4546ab"/>
<polygon points="939,709 923,719 922,726 938,716" fill="#4546ab"/>
<polygon points="938,714 923,725 922,732 938,721" fill="#4546ab"/>
<polygon points="938,720 922,730 922,738 937,727" fill="#4546ab"/>
<polygon points="937,726 922,736 921,743 937,733" fill="#4546ab"/>
<polygon points="937,731 921,742 921,749 936,738" fill="#4546ab"/>
<polygon points="936,737 921,747 920,755 936,744" fill="#4546ab"/>
<polygon points="936,743 920,753 920,760 935,750" fill="#4748ab"/>
<polygon points="935,748 920,759 920,766 935,755" fill="#4c4daa"/>
<polygon points="935,754 920,765 919,772 935,761" fill="#5052aa"/>
<polygon points="935,760 919,770 919,778 934,767" fill="#5558a9"/>
<polygon points="934,765 919,776 918,783 934,772" fill="#5a5da8"/>
<polygon points="934,771 918,782 918,789 933,778" fill="#5f62a8"/>
<polygon points="933,777 918,787 918,795 933,784" fill="#666aa4"/>
<polygon points="933,782 918,793 917,800 932,790" fill="#6f739c"/>
<polygon points="932,788 917,799 917,806 932,795" fill="#777c91"/>
<polygon points="932,794 917,805 916,812 931,801" fill="#7e8486"/>
<polygon points="932,799 916,810 916,817 931,807" fill="#84897b"/>
<polygon points="931,805 916,816 915,823 931,812" fill="#878c73"/>
<polygon points="931,811 916,822 915,829 930,818" fill="#878b6f"/>
<polygon points="930,816 915,827 915,835 930,824" fill="#86896d"/>
<polygon points="930,822 915,833 914,840 929,829" fill="#83856c"/>
<polygon points="929,828 914,839 914,846 929,835" fill="#80806a"/>
<polygon points="929,833 914,845 913,852 928,841" fill="#7d7c68"/>
<polygon points="929,839 914,850 913,857 928,846" fill="#7a7767"/>
<polygon points="928,845 913,856 913,863 928,852" fill="#777265"/>
<polygon points="928,850 913,862 912,869 927,858" fill="#726a62"/>
<polygon points="927,856 912,867 912,875 927,863" fill="#6d6360"/>
<polygon points="927,862 912,873 911,880 926,869" fill="#695c5d"/>
<polygon points="926,867 912,879 911,886 926,875" fill="#655659"/>
<polygon points="926,873 911,885 911,892 925,880" fill="#605056"/>
<polygon points="926,879 911,890 910,897 925,886" fill="#5d4b54"/>
<polygon points="925,884 910,896 910,903 925,892" fill="#5b4953"/>
<polygon points="925,890 910,902 909,909 924,897" fill="#5a4852"/>
<polygon points="924,896 909,907 909,915 924,903" fill="#5a4852"/>
<polygon points="924,901 909,913 909,920 923,909" fill="#5a4852"/>
<polygon points="923,907 909,919 908,926 923,914" fill="#5a4852"/>
<polygon points="927,695 911,705 910,712 926,702" fill="#4040ab"/>
<polygon points="926,700 911,711 910,718 926,708" fill="#4040ab"/>
<polygon points="926,706 910,716 910,724 925,713" fill="#4040ab"/>
<polygon points="925,712 910,722 909,729 925,719" fill="#4040ab"/>
<polygon points="925,718 909,728 909,735 924,725" fill="#4040ab"/>
<polygon points="925,723 909,734 909,741 924,730" fill="#4040ab"/>
<polygon points="924,729 909,739 908,747 924,736" fill="#4040ab"/>
<polygon points="924,735 908,745 908,752 923,742" fill="#4040ab"/>
<polygon points="923,740 908,751 907,758 923,748" fill="#4040ab"/>
<polygon points="923,746 907,757 907,764 922,753" fill="#4040ab"/>
<polygon points="923,752 907,762 907,770 922,759" fill="#4343ab"/>
<polygon points="922,757 907,768 906,775 922,765" fill="#4748aa"/>
<polygon points="922,763 906,774 906,781 921,770" fill="#4c4daa"/>
<polygon points="921,769 906,780 905,787 921,776" fill="#5153a9"/>
<polygon points="921,775 906,785 905,793 920,782" fill="#5658a8"/>
<polygon points="920,780 905,791 905,798 920,788" fill="#5b5ea8"/>
<polygon points="920,786 905,797 904,804 920,793" fill="#6264a5"/>
<polygon points="920,792 904,803 904,810 919,799" fill="#6a6e9f"/>
<polygon points="919,797 904,808 903,816 919,805" fill="#737795"/>
<polygon points="919,803 904,814 903,821 918,810" fill="#7b808a"/>
<polygon points="918,809 903,820 903,827 918,816" fill="#81867f"/>
<polygon points="918,815 903,826 902,833 917,822" fill="#858a75"/>
<polygon points="918,820 902,831 902,839 917,827" fill="#878b6f"/>
<polygon points="917,826 902,837 902,844 917,833" fill="#86896d"/>
<polygon points="917,832 902,843 901,850 916,839" fill="#83856c"/>
<polygon points="916,837 901,849 901,856 916,845" fill="#80806a"/>
<polygon points="916,843 901,854 900,862 915,850" fill="#7d7c69"/>
<polygon points="916,849 900,860 900,867 915,856" fill="#7a7767"/>
<polygon points="915,855 900,866 900,873 915,862" fill="#777265"/>
<polygon points="915,860 900,871 899,879 914,867" fill="#726a62"/>
<polygon points="914,866 899,877 899,884 914,873" fill="#6d6360"/>
<polygon points="914,872 899,883 898,890 913,879" fill="#695c5d"/>
<polygon points="913,877 899,889 898,896 913,885" fill="#655659"/>
<polygon points="913,883 898,894 898,902 913,890" fill="#605056"/>
<polygon points="913,889 898,900 897,907 912,896" fill="#5d4b54"/>
<polygon points="912,894 897,906 897,913 912,902" fill="#5b4953"/>
<polygon points="912,900 897,912 897,919 911,907" fill="#5a4852"/>
<polygon points="911,906 897,917 896,925 911,913" fill="#5a4852"/>
<polygon points="911,912 896,923 896,930 910,919" fill="#5a4852"/>
<polygon points="911,917 896,929 895,936 910,924" fill="#5a4852"/>
<polygon points="913,704 897,714 897,721 912,711" fill="#3d3dac"/>
<polygon points="913,709 897,719 896,727 912,717" fill="#3d3dac"/>
<polygon points="912,715 897,725 896,733 912,722" fill="#3d3dac"/>
<polygon points="912,721 896,731 896,738 911,728" fill="#3d3dac"/>
<polygon points="911,726 896,737 895,744 911,734" fill="#3d3dac"/>
<polygon points="911,732 895,743 895,750 911,739" fill="#3d3dac"/>
<polygon points="911,738 895,748 895,756 910,745" fill="#3d3dac"/>
<polygon points="910,744 895,754 894,761 910,751" fill="#3d3dac"/>
<polygon points="910,749 894,760 894,767 909,757" fill="#3d3dac"/>
<polygon points="909,755 894,766 894,773 909,762" fill="#3d3dac"/>
<polygon points="909,761 894,771 893,779 909,768" fill="#3f3fab"/>
<polygon points="909,767 893,777 893,785 908,774" fill="#4344ab"/>
<polygon points="908,772 893,783 892,790 908,780" fill="#4848aa"/>
<polygon points="908,778 893,789 892,796 907,785" fill="#4d4ea9"/>
<polygon points="908,784 892,795 892,802 907,791" fill="#5353a8"/>
<polygon points="907,790 892,800 891,808 907,797" fill="#5859a7"/>
<polygon points="907,795 891,806 891,813 906,803" fill="#5d5fa6"/>
<polygon points="906,801 891,812 891,819 906,808" fill="#6568a0"/>
<polygon points="906,807 891,818 890,825 905,814" fill="#6f7298"/>
<polygon points="906,813 890,823 890,831 905,820" fill="#777b8d"/>
<polygon points="905,818 890,829 890,837 905,826" fill="#7e8382"/>
<polygon points="905,824 890,835 889,842 904,831" fill="#838878"/>
<polygon points="904,830 889,841 889,848 904,837" fill="#868a71"/>
<polygon points="904,836 889,847 888,854 904,843" fill="#868a6d"/>
<polygon points="904,841 889,852 888,860 903,849" fill="#83856c"/>
<polygon points="903,847 888,858 888,865 903,854" fill="#80816a"/>
<polygon points="903,853 888,864 887,871 902,860" fill="#7d7c69"/>
<polygon points="902,859 887,870 887,877 902,866" fill="#7a7767"/>
<polygon points="902,864 887,876 887,883 902,872" fill="#777265"/>
<polygon points="902,870 887,881 886,889 901,877" fill="#726a62"/>
<polygon points="901,876 886,887 886,894 901,883" fill="#6d6360"/>
<polygon points="901,882 886,893 886,900 900,889" fill="#695c5d"/>
<polygon points="900,887 886,899 885,906 900,895" fill="#655659"/>
<polygon points="900,893 885,904 885,912 900,900" fill="#605056"/>
<polygon points="900,899 885,910 884,918 899,906" fill="#5d4b54"/>
<polygon points="899,904 885,916 884,923 899,912" fill="#5b4953"/>
<polygon points="899,910 884,922 884,929 898,917" fill="#5a4852"/>
<polygon points="899,916 884,928 883,935 898,923" fill="#5a4852"/>
<polygon points="898,922 883,933 883,941 898,929" fill="#5a4852"/>
<polygon points="898,927 883,939 883,946 897,935" fill="#5a4852"/>
<polygon points="899,712 884,722 883,730 899,720" fill="#3a3aac"/>
<polygon points="899,718 883,728 883,736 898,725" fill="#3a3aac"/>
<polygon points="899,724 883,734 883,741 898,731" fill="#3a3aac"/>
<polygon points="898,730 883,740 882,747 898,737" fill="#3a3aac"/>
<polygon points="898,735 882,746 882,753 897,743" fill="#3a3aac"/>
<polygon points="897,741 882,752 881,759 897,749" fill="#3a3aac"/>
<polygon points="897,747 882,757 881,765 897,754" fill="#3a3aac"/>
<polygon points="897,753 881,763 881,771 896,760" fill="#3a3aac"/>
<polygon points="896,759 881,769 880,776 896,766" fill="#3a3aac"/>
<polygon points="896,764 881,775 880,782 896,772" fill="#3a3aac"/>
<polygon points="896,770 880,781 880,788 895,777" fill="#3c3cab"/>
<polygon points="895,776 880,786 879,794 895,783" fill="#4040ab"/>
<polygon points="895,782 880,792 879,800 894,789" fill="#4544aa"/>
<polygon points="895,787 879,798 879,805 894,795" fill="#4a49a9"/>
<polygon points="894,793 879,804 878,811 894,800" fill="#4f4fa8"/>
<polygon points="894,799 878,810 878,817 893,806" fill="#5454a6"/>
<polygon points="893,805 878,816 878,823 893,812" fill="#595aa5"/>
<polygon points="893,811 878,821 877,829 893,818" fill="#6162a1"/>
<polygon points="893,816 877,827 877,834 892,824" fill="#6a6c9a"/>
<polygon points="892,822 877,833 877,840 892,829" fill="#737690"/>
<polygon points="892,828 877,839 876,846 891,835" fill="#7b7f86"/>
<polygon points="892,834 876,845 876,852 891,841" fill="#81857b"/>
<polygon points="891,839 876,850 876,858 891,847" fill="#858973"/>
<polygon points="891,845 876,856 875,864 890,852" fill="#868a6e"/>
<polygon points="890,851 875,862 875,869 890,858" fill="#84856c"/>
<polygon points="890,857 875,868 875,875 890,864" fill="#80816a"/>
<polygon points="890,863 875,874 874,881 889,870" fill="#7d7c69"/>
<polygon points="889,868 874,879 874,887 889,876" fill="#7a7767"/>
<polygon points="889,874 874,885 874,893 889,881" fill="#777265"/>
<polygon points="889,880 874,891 873,898 888,887" fill="#726a62"/>
<polygon points="888,886 873,897 873,904 888,893" fill="#6d6360"/>
<polygon points="888,891 873,903 873,910 887,899" fill="#695c5d"/>
<polygon points="888,897 873,909 872,916 887,904" fill="#655659"/>
<polygon points="887,903 872,914 872,922 887,910" fill="#605056"/>
<polygon points="887,909 872,920 872,928 886,916" fill="#5d4b54"/>
<polygon points="886,915 872,926 871,933 886,922" fill="#5b4953"/>
<polygon points="886,920 871,932 871,939 886,928" fill="#5a4852"/>
<polygon points="886,926 871,938 870,945 885,933" fill="#5a4852"/>
<polygon points="885,932 871,943 870,951 885,939" fill="#5a4852"/>
<polygon points="885,938 870,949 870,957 884,945" fill="#5a4852"/>
<polygon points="886,721 870,731 870,739 885,728" fill="#3837ac"/>
<polygon points="885,727 870,737 869,744 885,734" fill="#3837ac"/>
<polygon points="885,733 869,743 869,750 885,740" fill="#3837ac"/>
<polygon points="885,739 869,749 869,756 884,746" fill="#3837ac"/>
<polygon points="884,744 869,755 868,762 884,752" fill="#3837ac"/>
<polygon points="884,750 868,761 868,768 884,758" fill="#3837ac"/>
<polygon points="884,756 868,766 868,774 883,763" fill="#3837ac"/>
<polygon points="883,762 868,772 867,780 883,769" fill="#3837ac"/>
<polygon points="883,768 867,778 867,785 882,775" fill="#3837ac"/>
<polygon points="883,773 867,784 867,791 882,781" fill="#3837ac"/>
<polygon points="882,779 867,790 866,797 882,787" fill="#3938ac"/>
<polygon points="882,785 866,796 866,803 881,792" fill="#3d3cab"/>
<polygon points="882,791 866,801 866,809 881,798" fill="#4140aa"/>
<polygon points="881,797 866,807 865,815 881,804" fill="#4645a9"/>
<polygon points="881,802 865,813 865,821 880,810" fill="#4b4aa7"/>
<polygon points="880,808 865,819 865,826 880,816" fill="#5150a6"/>
<polygon points="880,814 865,825 864,832 880,821" fill="#5655a5"/>
<polygon points="880,820 865,831 864,838 879,827" fill="#5c5ca2"/>
<polygon points="879,826 864,837 864,844 879,833" fill="#66669b"/>
<polygon points="879,832 864,842 863,850 879,839" fill="#6f7193"/>
<polygon points="879,837 864,848 863,856 878,845" fill="#787a88"/>
<polygon points="878,843 863,854 863,862 878,851" fill="#7e827e"/>
<polygon points="878,849 863,860 863,867 878,856" fill="#838775"/>
<polygon points="878,855 863,866 862,873 877,862" fill="#86896f"/>
<polygon points="877,861 862,872 862,879 877,868" fill="#84866c"/>
<polygon points="877,866 862,878 862,885 877,874" fill="#81816b"/>
<polygon points="877,872 862,883 861,891 876,880" fill="#7e7c69"/>
<polygon points="876,878 861,889 861,897 876,885" fill="#7a7867"/>
<polygon points="876,884 861,895 861,902 876,891" fill="#777265"/>
<polygon points="876,890 861,901 860,908 875,897" fill="#726a62"/>
<polygon points="875,895 860,907 860,914 875,903" fill="#6d6360"/>
<polygon points="875,901 860,913 860,920 874,909" fill="#695c5d"/>
<polygon points="875,907 860,918 859,926 874,914" fill="#655659"/>
<polygon points="874,913 859,924 859,932 874,920" fill="#605056"/>
<polygon points="874,919 859,930 859,938 873,926" fill="#5d4b54"/>
<polygon points="874,925 859,936 858,943 873,932" fill="#5b4953"/>
<polygon points="873,930 858,942 858,949 873,938" fill="#5a4852"/>
<polygon points="873,936 858,948 858,955 872,943" fill="#5a4852"/>
<polygon points="872,942 858,954 857,961 872,949" fill="#5a4852"/>
<polygon points="872,948 857,959 857,967 872,955" fill="#5a4852"/>
<polygon points="872,730 856,740 856,747 872,737" fill="#3534ac"/>
<polygon points="872,736 856,746 856,753 871,743" fill="#3534ac"/>
<polygon points="871,742 856,752 855,759 871,749" fill="#3534ac"/>
<polygon points="871,747 855,758 855,765 871,755" fill="#3534ac"/>
<polygon points="871,753 855,764 855,771 870,761" fill="#3534ac"/>
<polygon points="870,759 855,769 854,777 870,767" fill="#3534ac"/>
<polygon points="870,765 855,775 854,783 870,772" fill="#3534ac"/>
<polygon points="870,771 854,781 854,789 869,778" fill="#3534ac"/>
<polygon points="869,777 854,787 854,795 869,784" fill="#3534ac"/>
<polygon points="869,783 854,793 853,800 869,790" fill="#3534ac"/>
<polygon points="869,788 853,799 853,806 868,796" fill="#3735ac"/>
<polygon points="868,794 853,805 853,812 868,802" fill="#3a38ab"/>
<polygon points="868,800 853,811 852,818 868,807" fill="#3e3caa"/>
<polygon points="868,806 852,817 852,824 867,813" fill="#4241a9"/>
<polygon points="867,812 852,822 852,830 867,819" fill="#4846a7"/>
<polygon points="867,818 852,828 851,836 867,825" fill="#4d4ba6"/>
<polygon points="867,823 852,834 851,842 866,831" fill="#5250a5"/>
<polygon points="867,829 851,840 851,848 866,837" fill="#5856a2"/>
<polygon points="866,835 851,846 851,853 866,843" fill="#61609d"/>
<polygon points="866,841 851,852 850,859 865,848" fill="#6b6b95"/>
<polygon points="866,847 850,858 850,865 865,854" fill="#74758b"/>
<polygon points="865,853 850,864 850,871 865,860" fill="#7b7e81"/>
<polygon points="865,859 850,870 849,877 864,866" fill="#818478"/>
<polygon points="865,864 849,875 849,883 864,872" fill="#858870"/>
<polygon points="864,870 849,881 849,889 864,878" fill="#84866c"/>
<polygon points="864,876 849,887 848,895 863,883" fill="#81816b"/>
<polygon points="864,882 849,893 848,901 863,889" fill="#7e7c69"/>
<polygon points="863,888 848,899 848,906 863,895" fill="#7a7867"/>
<polygon points="863,894 848,905 848,912 863,901" fill="#777265"/>
<polygon points="863,899 848,911 847,918 862,907" fill="#726a63"/>
<polygon points="862,905 847,917 847,924 862,913" fill="#6d6360"/>
<polygon points="862,911 847,923 847,930 862,919" fill="#695c5d"/>
<polygon points="862,917 847,928 846,936 861,924" fill="#655659"/>
<polygon points="861,923 846,934 846,942 861,930" fill="#605056"/>
<polygon points="861,929 846,940 846,948 861,936" fill="#5d4b54"/>
<polygon points="861,935 846,946 845,953 860,942" fill="#5b4953"/>
<polygon points="860,940 846,952 845,959 860,948" fill="#5a4852"/>
<polygon points="860,946 845,958 845,965 860,954" fill="#5a4852"/>
<polygon points="860,952 845,964 845,971 859,959" fill="#5a4852"/>
<polygon points="859,958 845,970 844,977 859,965" fill="#5a4852"/>
<polygon points="858,739 843,749 842,756 858,746" fill="#3331ad"/>
<polygon points="858,745 842,755 842,762 858,752" fill="#3331ad"/>
<polygon points="858,750 842,761 842,768 857,758" fill="#3331ad"/>
<polygon points="857,756 842,767 842,774 857,764" fill="#3331ad"/>
<polygon points="857,762 842,773 841,780 857,770" fill="#3331ad"/>
<polygon points="857,768 841,778 841,786 856,776" fill="#3331ad"/>
<polygon points="857,774 841,784 841,792 856,781" fill="#3331ad"/>
<polygon points="856,780 841,790 840,798 856,787" fill="#3331ad"/>
<polygon points="856,786 840,796 840,804 856,793" fill="#3331ad"/>
<polygon points="856,792 840,802 840,810 855,799" fill="#3331ad"/>
<polygon points="855,798 840,808 840,816 855,805" fill="#3432ac"/>
<polygon points="855,803 840,814 839,821 855,811" fill="#3735ac"/>
<polygon points="855,809 839,820 839,827 854,817" fill="#3a38aa"/>
<polygon points="854,815 839,826 839,833 854,823" fill="#3f3da9"/>
<polygon points="854,821 839,832 838,839 854,828" fill="#4441a8"/>
<polygon points="854,827 839,838 838,845 853,834" fill="#4947a6"/>
<polygon points="854,833 838,844 838,851 853,840" fill="#4f4ca4"/>
<polygon points="853,839 838,850 838,857 853,846" fill="#5451a2"/>
<polygon points="853,845 838,855 837,863 853,852" fill="#5c599e"/>
<polygon points="853,850 837,861 837,869 852,858" fill="#666497"/>
<polygon points="852,856 837,867 837,875 852,864" fill="#6f6f8e"/>
<polygon points="852,862 837,873 836,881 852,870" fill="#777884"/>
<polygon points="852,868 837,879 836,887 851,876" fill="#7e807b"/>
<polygon points="851,874 836,885 836,893 851,881" fill="#828572"/>
<polygon points="851,880 836,891 836,898 851,887" fill="#83846d"/>
<polygon points="851,886 836,897 835,904 850,893" fill="#80806b"/>
<polygon points="850,892 835,903 835,910 850,899" fill="#7d7c69"/>
<polygon points="850,898 835,909 835,916 850,905" fill="#7a7768"/>
<polygon points="850,903 835,915 835,922 849,911" fill="#777266"/>
<polygon points="850,909 835,921 834,928 849,917" fill="#726a63"/>
<polygon points="849,915 834,926 834,934 849,923" fill="#6d6360"/>
<polygon points="849,921 834,932 834,940 849,928" fill="#695c5d"/>
<polygon points="849,927 834,938 833,946 848,934" fill="#65565a"/>
<polygon points="848,933 833,944 833,952 848,940" fill="#615056"/>
<polygon points="848,939 833,950 833,958 848,946" fill="#5d4b54"/>
<polygon points="848,945 833,956 833,964 847,952" fill="#5b4953"/>
<polygon points="847,950 833,962 832,969 847,958" fill="#5a4852"/>
<polygon points="847,956 832,968 832,975 847,964" fill="#5a4852"/>
<polygon points="847,962 832,974 832,981 846,970" fill="#5a4852"/>
<polygon points="847,968 832,980 831,987 846,976" fill="#5a4852"/>
<polygon points="845,748 829,758 829,765 844,755" fill="#312fad"/>
<polygon points="844,753 829,764 828,771 844,761" fill="#312fad"/>
<polygon points="844,759 829,770 828,777 844,767" fill="#312fad"/>
<polygon points="844,765 828,776 828,783 844,773" fill="#312fad"/>
<polygon points="844,771 828,781 828,789 843,779" fill="#312fad"/>
<polygon points="843,777 828,787 827,795 843,785" fill="#312fad"/>
<polygon points="843,783 828,793 827,801 843,790" fill="#312fad"/>
<polygon points="843,789 827,799 827,807 842,796" fill="#312fad"/>
<polygon points="842,795 827,805 827,813 842,802" fill="#312fad"/>
<polygon points="842,801 827,811 826,819 842,808" fill="#312fad"/>
<polygon points="842,807 826,817 826,825 842,814" fill="#322fad"/>
<polygon points="842,813 826,823 826,831 841,820" fill="#3431ac"/>
<polygon points="841,819 826,829 826,837 841,826" fill="#3734ab"/>
<polygon points="841,824 826,835 825,843 841,832" fill="#3b38aa"/>
<polygon points="841,830 825,841 825,849 840,838" fill="#403da8"/>
<polygon points="841,836 825,847 825,855 840,844" fill="#4542a6"/>
<polygon points="840,842 825,853 825,860 840,850" fill="#4b47a4"/>
<polygon points="840,848 825,859 824,866 840,856" fill="#504ca2"/>
<polygon points="840,854 824,865 824,872 839,861" fill="#57539f"/>
<polygon points="839,860 824,871 824,878 839,867" fill="#605d99"/>
<polygon points="839,866 824,877 824,884 839,873" fill="#6a6890"/>
<polygon points="839,872 824,883 823,890 838,879" fill="#727287"/>
<polygon points="839,878 823,889 823,896 838,885" fill="#797a7e"/>
<polygon points="838,884 823,895 823,902 838,891" fill="#7f8075"/>
<polygon points="838,890 823,901 823,908 838,897" fill="#80816f"/>
<polygon points="838,895 823,907 822,914 837,903" fill="#7f7e6c"/>
<polygon points="837,901 822,913 822,920 837,909" fill="#7c7a6a"/>
<polygon points="837,907 822,918 822,926 837,915" fill="#7a7668"/>
<polygon points="837,913 822,924 822,932 836,921" fill="#767166"/>
<polygon points="837,919 822,930 821,938 836,927" fill="#716a63"/>
<polygon points="836,925 821,936 821,944 836,932" fill="#6d6260"/>
<polygon points="836,931 821,942 821,950 836,938" fill="#695c5d"/>
<polygon points="836,937 821,948 820,956 835,944" fill="#65565a"/>
<polygon points="835,943 821,954 820,962 835,950" fill="#615056"/>
<polygon points="835,949 820,960 820,968 835,956" fill="#5d4c54"/>
<polygon points="835,955 820,966 820,974 835,962" fill="#5b4953"/>
<polygon points="835,961 820,972 819,980 834,968" fill="#5a4852"/>
<polygon points="834,966 820,978 819,986 834,974" fill="#5a4852"/>
<polygon points="834,972 819,984 819,992 834,980" fill="#5a4852"/>
<polygon points="834,978 819,990 819,997 833,986" fill="#5a4852"/>
<polygon points="831,756 815,766 815,774 831,764" fill="#2f2cad"/>
<polygon points="831,762 815,772 815,780 831,770" fill="#2f2cad"/>
<polygon points="831,768 815,778 815,786 830,776" fill="#2f2cad"/>
<polygon points="830,774 815,784 814,792 830,782" fill="#2f2cad"/>
<polygon points="830,780 814,790 814,798 830,788" fill="#2f2cad"/>
<polygon points="830,786 814,796 814,804 829,794" fill="#2f2cad"/>
<polygon points="830,792 814,802 814,810 829,800" fill="#2f2cad"/>
<polygon points="829,798 814,808 813,816 829,805" fill="#2f2cad"/>
<polygon points="829,804 814,814 813,822 829,811" fill="#2f2cad"/>
<polygon points="829,810 813,820 813,828 828,817" fill="#2f2cad"/>
<polygon points="829,816 813,826 813,834 828,823" fill="#2f2dad"/>
<polygon points="828,822 813,832 813,840 828,829" fill="#312ead"/>
<polygon points="828,828 813,838 812,846 828,835" fill="#3431ab"/>
<polygon points="828,834 812,844 812,852 827,841" fill="#3834aa"/>
<polygon points="827,840 812,850 812,858 827,847" fill="#3c39a8"/>
<polygon points="827,846 812,856 812,864 827,853" fill="#413da6"/>
<polygon points="827,852 812,862 811,870 827,859" fill="#4742a4"/>
<polygon points="827,857 811,868 811,876 826,865" fill="#4c47a2"/>
<polygon points="826,863 811,874 811,882 826,871" fill="#524da0"/>
<polygon points="826,869 811,880 811,888 826,877" fill="#5b569a"/>
<polygon points="826,875 811,886 810,894 826,883" fill="#646093"/>
<polygon points="826,881 810,892 810,900 825,889" fill="#6d6a8a"/>
<polygon points="825,887 810,898 810,906 825,895" fill="#747381"/>
<polygon points="825,893 810,904 810,912 825,901" fill="#7a7a79"/>
<polygon points="825,899 810,910 809,918 825,907" fill="#7d7c71"/>
<polygon points="825,905 810,916 809,924 824,913" fill="#7d7c6c"/>
<polygon points="824,911 809,922 809,930 824,919" fill="#7b786a"/>
<polygon points="824,917 809,928 809,936 824,925" fill="#797568"/>
<polygon points="824,923 809,934 809,942 823,930" fill="#767066"/>
<polygon points="824,929 809,940 808,948 823,936" fill="#716963"/>
<polygon points="823,935 808,946 808,954 823,942" fill="#6d6260"/>
<polygon points="823,941 808,952 808,960 823,948" fill="#695c5d"/>
<polygon points="823,947 808,958 808,966 822,954" fill="#65565a"/>
<polygon points="822,953 808,964 807,972 822,960" fill="#615057"/>
<polygon points="822,959 807,970 807,978 822,966" fill="#5e4c54"/>
<polygon points="822,965 807,976 807,984 822,972" fill="#5b4953"/>
<polygon points="822,971 807,982 807,990 821,978" fill="#5a4852"/>
<polygon points="821,977 807,988 806,996 821,984" fill="#5a4852"/>
<polygon points="821,982 806,994 806,1002 821,990" fill="#5a4852"/>
<polygon points="821,988 806,1000 806,1008 821,996" fill="#5a4852"/>
<polygon points="817,765 802,775 802,783 817,773" fill="#2d2aad"/>
<polygon points="817,771 802,781 801,789 817,779" fill="#2d2aad"/>
<polygon points="817,777 801,787 801,795 817,785" fill="#2d2aad"/>
<polygon points="817,783 801,793 801,801 816,791" fill="#2d2aad"/>
<polygon points="817,789 801,799 801,807 816,797" fill="#2d2aad"/>
<polygon points="816,795 801,805 800,813 816,803" fill="#2d2aad"/>
<polygon points="816,801 801,811 800,819 816,809" fill="#2d2aad"/>
<polygon points="816,807 800,817 800,825 815,815" fill="#2d2aad"/>
<polygon points="816,813 800,823 800,831 815,821" fill="#2d2aad"/>
<polygon points="815,819 800,829 800,837 815,827" fill="#2d2aad"/>
<polygon points="815,825 800,836 799,843 815,833" fill="#2d2aad"/>
<polygon points="815,831 799,842 799,849 815,839" fill="#2e2bad"/>
<polygon points="815,837 799,848 799,855 814,845" fill="#312dac"/>
<polygon points="814,843 799,854 799,861 814,851" fill="#3431ab"/>
<polygon points="814,849 799,860 799,867 814,856" fill="#3934a9"/>
<polygon points="814,855 799,866 798,873 814,862" fill="#3e39a7"/>
<polygon points="814,861 798,872 798,879 813,868" fill="#433ea5"/>
<polygon points="813,867 798,878 798,885 813,874" fill="#4843a2"/>
<polygon points="813,873 798,884 798,891 813,880" fill="#4e47a0"/>
<polygon points="813,879 798,890 797,897 813,886" fill="#554f9c"/>
<polygon points="813,885 797,896 797,903 812,892" fill="#5e5995"/>
<polygon points="812,891 797,902 797,909 812,898" fill="#67628d"/>
<polygon points="812,897 797,908 797,915 812,904" fill="#6f6b85"/>
<polygon points="812,903 797,914 797,921 812,910" fill="#75737c"/>
<polygon points="812,909 797,920 796,927 811,916" fill="#797774"/>
<polygon points="811,915 796,926 796,934 811,922" fill="#7a786e"/>
<polygon points="811,921 796,932 796,940 811,928" fill="#7a766b"/>
<polygon points="811,927 796,938 796,946 811,934" fill="#787369"/>
<polygon points="811,933 796,944 795,952 810,940" fill="#756f66"/>
<polygon points="811,939 796,950 795,958 810,946" fill="#716863"/>
<polygon points="810,945 795,956 795,964 810,952" fill="#6d6261"/>
<polygon points="810,951 795,962 795,970 810,958" fill="#695c5e"/>
<polygon points="810,957 795,968 795,976 809,964" fill="#65575b"/>
<polygon points="810,963 795,974 794,982 809,970" fill="#615157"/>
<polygon points="809,969 794,980 794,988 809,976" fill="#5e4c54"/>
<polygon points="809,975 794,986 794,994 809,982" fill="#5b4a53"/>
<polygon points="809,981 794,992 794,1000 809,988" fill="#5a4852"/>
<polygon points="809,987 794,998 794,1006 808,994" fill="#5a4852"/>
<polygon points="808,993 794,1004 793,1012 808,1000" fill="#5a4852"/>
<polygon points="808,999 793,1010 793,1018 808,1006" fill="#5a4852"/>
<polygon points="804,774 788,784 788,792 804,782" fill="#2b28ae"/>
<polygon points="804,780 788,790 788,798 803,788" fill="#2b28ae"/>
<polygon points="803,786 788,796 788,804 803,794" fill="#2b28ae"/>
<polygon points="803,792 788,802 787,810 803,800" fill="#2b28ae"/>
<polygon points="803,798 787,808 787,816 803,806" fill="#2b28ae"/>
<polygon points="803,804 787,814 787,822 802,812" fill="#2b28ae"/>
<polygon points="803,810 787,820 787,828 802,818" fill="#2b28ae"/>
<polygon points="802,816 787,826 787,834 802,824" fill="#2b28ae"/>
<polygon points="802,822 787,833 786,840 802,830" fill="#2b28ae"/>
<polygon points="802,828 786,839 786,846 802,836" fill="#2b28ae"/>
<polygon points="802,834 786,845 786,852 801,842" fill="#2b28ae"/>
<polygon points="801,840 786,851 786,858 801,848" fill="#2c28ad"/>
<polygon points="801,846 786,857 786,864 801,854" fill="#2e2aad"/>
<polygon points="801,852 786,863 785,870 801,860" fill="#312dab"/>
<polygon points="801,858 785,869 785,877 800,866" fill="#3530a9"/>
<polygon points="801,864 785,875 785,883 800,872" fill="#3a35a7"/>
<polygon points="800,870 785,881 785,889 800,878" fill="#3f39a5"/>
<polygon points="800,876 785,887 785,895 800,884" fill="#443ea3"/>
<polygon points="800,882 785,893 784,901 800,890" fill="#4a43a0"/>
<polygon points="800,888 784,899 784,907 799,896" fill="#50499d"/>
<polygon points="799,894 784,905 784,913 799,902" fill="#595197"/>
<polygon points="799,900 784,911 784,919 799,908" fill="#615b90"/>
<polygon points="799,906 784,917 784,925 799,914" fill="#696488"/>
<polygon points="799,912 784,923 783,931 799,920" fill="#706b7f"/>
<polygon points="799,918 783,930 783,937 798,926" fill="#747177"/>
<polygon points="798,924 783,936 783,943 798,932" fill="#777370"/>
<polygon points="798,930 783,942 783,949 798,938" fill="#78736b"/>
<polygon points="798,936 783,948 783,955 798,944" fill="#777169"/>
<polygon points="798,943 783,954 782,961 797,950" fill="#746d67"/>
<polygon points="797,949 783,960 782,967 797,956" fill="#706764"/>
<polygon points="797,955 782,966 782,974 797,962" fill="#6d6261"/>
<polygon points="797,961 782,972 782,980 797,968" fill="#695c5e"/>
<polygon points="797,967 782,978 782,986 797,974" fill="#66575b"/>
<polygon points="797,973 782,984 782,992 796,980" fill="#625158"/>
<polygon points="796,979 782,990 781,998 796,986" fill="#5e4d55"/>
<polygon points="796,985 781,996 781,1004 796,992" fill="#5c4a53"/>
<polygon points="796,991 781,1002 781,1010 796,998" fill="#5a4852"/>
<polygon points="796,997 781,1008 781,1016 795,1004" fill="#5a4852"/>
<polygon points="796,1003 781,1014 781,1022 795,1010" fill="#5a4852"/>
<polygon points="795,1009 781,1020 780,1028 795,1016" fill="#5a4852"/>
<polygon points="790,783 775,793 774,801 790,790" fill="#2a26ae"/>
<polygon points="790,789 774,799 774,807 790,796" fill="#2a26ae"/>
<polygon points="790,795 774,805 774,813 790,802" fill="#2a26ae"/>
<polygon points="790,801 774,811 774,819 789,809" fill="#2a26ae"/>
<polygon points="789,807 774,817 774,825 789,815" fill="#2a26ae"/>
<polygon points="789,813 774,823 773,831 789,821" fill="#2a26ae"/>
<polygon points="789,819 773,829 773,837 789,827" fill="#2a26ae"/>
<polygon points="789,825 773,836 773,843 789,833" fill="#2a26ae"/>
<polygon points="789,831 773,842 773,849 788,839" fill="#2a26ae"/>
<polygon points="788,837 773,848 773,855 788,845" fill="#2a26ae"/>
<polygon points="788,843 773,854 773,862 788,851" fill="#2a26ae"/>
<polygon points="788,849 773,860 772,868 788,857" fill="#2a26ae"/>
<polygon points="788,855 772,866 772,874 788,863" fill="#2b27ad"/>
<polygon points="788,861 772,872 772,880 787,869" fill="#2e29ac"/>
<polygon points="787,868 772,878 772,886 787,875" fill="#312daa"/>
<polygon points="787,874 772,884 772,892 787,881" fill="#3630a8"/>
<polygon points="787,880 772,890 772,898 787,887" fill="#3b35a6"/>
<polygon points="787,886 772,896 771,904 787,893" fill="#4039a3"/>
<polygon points="787,892 771,903 771,910 786,899" fill="#463ea1"/>
<polygon points="786,898 771,909 771,916 786,905" fill="#4c439e"/>
<polygon points="786,904 771,915 771,922 786,911" fill="#534b98"/>
<polygon points="786,910 771,921 771,929 786,918" fill="#5c5492"/>
<polygon points="786,916 771,927 770,935 786,924" fill="#635c8a"/>
<polygon points="786,922 771,933 770,941 785,930" fill="#6a6483"/>
<polygon points="785,928 770,939 770,947 785,936" fill="#6f6a7b"/>
<polygon points="785,934 770,945 770,953 785,942" fill="#736e73"/>
<polygon points="785,940 770,951 770,959 785,948" fill="#75706d"/>
<polygon points="785,946 770,957 770,965 785,954" fill="#756f69"/>
<polygon points="785,952 770,964 769,971 784,960" fill="#736c67"/>
<polygon points="784,958 770,970 769,977 784,966" fill="#706764"/>
<polygon points="784,964 769,976 769,983 784,972" fill="#6d6161"/>
<polygon points="784,970 769,982 769,990 784,978" fill="#695c5f"/>
<polygon points="784,977 769,988 769,996 784,984" fill="#66585c"/>
<polygon points="784,983 769,994 769,1002 783,990" fill="#625258"/>
<polygon points="783,989 769,1000 768,1008 783,996" fill="#5e4d55"/>
<polygon points="783,995 768,1006 768,1014 783,1002" fill="#5c4a53"/>
<polygon points="783,1001 768,1012 768,1020 783,1008" fill="#5a4852"/>
<polygon points="783,1007 768,1018 768,1026 783,1014" fill="#5a4852"/>
<polygon points="783,1013 768,1024 768,1032 782,1020" fill="#5a4852"/>
<polygon points="782,1019 768,1031 768,1038 782,1027" fill="#5a4852"/>
<polygon points="777,792 761,802 761,809 776,799" fill="#2824ae"/>
<polygon points="776,798 761,808 761,816 776,805" fill="#2824ae"/>
<polygon points="776,804 761,814 760,822 776,811" fill="#2824ae"/>
<polygon points="776,810 760,820 760,828 776,817" fill="#2824ae"/>
<polygon points="776,816 760,826 760,834 776,824" fill="#2824ae"/>
<polygon points="776,822 760,832 760,840 775,830" fill="#2824ae"/>
<polygon points="775,828 760,838 760,846 775,836" fill="#2824ae"/>
<polygon points="775,834 760,845 760,852 775,842" fill="#2824ae"/>
<polygon points="775,840 760,851 759,858 775,848" fill="#2824ae"/>
<polygon points="775,846 760,857 759,865 775,854" fill="#2824ae"/>
<polygon points="775,852 759,863 759,871 775,860" fill="#2824ae"/>
<polygon points="775,859 759,869 759,877 774,866" fill="#2824ae"/>
<polygon points="774,865 759,875 759,883 774,872" fill="#2924ae"/>
<polygon points="774,871 759,881 759,889 774,878" fill="#2b26ad"/>
<polygon points="774,877 759,887 759,895 774,884" fill="#2e29ab"/>
<polygon points="774,883 759,894 758,901 774,891" fill="#322ca9"/>
<polygon points="774,889 758,900 758,907 774,897" fill="#3731a6"/>
<polygon points="774,895 758,906 758,914 773,903" fill="#3c35a4"/>
<polygon points="773,901 758,912 758,920 773,909" fill="#423aa1"/>
<polygon points="773,907 758,918 758,926 773,915" fill="#473e9e"/>
<polygon points="773,913 758,924 758,932 773,921" fill="#4e459a"/>
<polygon points="773,919 758,930 758,938 773,927" fill="#564d94"/>
<polygon points="773,926 758,937 757,944 772,933" fill="#5e558d"/>
<polygon points="773,932 757,943 757,950 772,939" fill="#655d85"/>
<polygon points="772,938 757,949 757,957 772,945" fill="#6b637d"/>
<polygon points="772,944 757,955 757,963 772,951" fill="#6f6976"/>
<polygon points="772,950 757,961 757,969 772,958" fill="#736c6f"/>
<polygon points="772,956 757,967 757,975 772,964" fill="#746d6a"/>
<polygon points="772,962 757,973 756,981 771,970" fill="#736b67"/>
<polygon points="771,968 756,979 756,987 771,976" fill="#706665"/>
<polygon points="771,974 756,986 756,993 771,982" fill="#6d6162"/>
<polygon points="771,980 756,992 756,999 771,988" fill="#6a5d5f"/>
<polygon points="771,986 756,998 756,1006 771,994" fill="#67585c"/>
<polygon points="771,993 756,1004 756,1012 771,1000" fill="#625259"/>
<polygon points="771,999 756,1010 756,1018 770,1006" fill="#5f4e56"/>
<polygon points="770,1005 756,1016 755,1024 770,1012" fill="#5c4a53"/>
<polygon points="770,1011 755,1022 755,1030 770,1018" fill="#5a4852"/>
<polygon points="770,1017 755,1028 755,1036 770,1025" fill="#5a4852"/>
<polygon points="770,1023 755,1035 755,1042 770,1031" fill="#5a4852"/>
<polygon points="770,1029 755,1041 755,1048 769,1037" fill="#5a4852"/>
<polygon points="763,800 747,810 747,818 763,808" fill="#2723ae"/>
<polygon points="763,806 747,817 747,824 763,814" fill="#2723ae"/>
<polygon points="763,813 747,823 747,831 762,820" fill="#2723ae"/>
<polygon points="762,819 747,829 747,837 762,826" fill="#2723ae"/>
<polygon points="762,825 747,835 747,843 762,833" fill="#2723ae"/>
<polygon points="762,831 747,841 746,849 762,839" fill="#2723ae"/>
<polygon points="762,837 746,847 746,855 762,845" fill="#2723ae"/>
<polygon points="762,843 746,854 746,861 762,851" fill="#2723ae"/>
<polygon points="762,849 746,860 746,868 761,857" fill="#2723ae"/>
<polygon points="762,855 746,866 746,874 761,863" fill="#2723ae"/>
<polygon points="761,862 746,872 746,880 761,869" fill="#2723ae"/>
<polygon points="761,868 746,878 746,886 761,875" fill="#2723ae"/>
<polygon points="761,874 746,884 746,892 761,882" fill="#2723ae"/>
<polygon points="761,880 746,891 745,898 761,888" fill="#2824ad"/>
<polygon points="761,886 745,897 745,905 761,894" fill="#2b26ab"/>
<polygon points="761,892 745,903 745,911 760,900" fill="#2f2aa9"/>
<polygon points="760,898 745,909 745,917 760,906" fill="#342ea7"/>
<polygon points="760,904 745,915 745,923 760,912" fill="#3932a4"/>
<polygon points="760,911 745,921 745,929 760,918" fill="#3f37a1"/>
<polygon points="760,917 745,928 745,935 760,924" fill="#453c9e"/>
<polygon points="760,923 745,934 744,942 760,931" fill="#4b419a"/>
<polygon points="760,929 744,940 744,948 759,937" fill="#534895"/>
<polygon points="760,935 744,946 744,954 759,943" fill="#5a508e"/>
<polygon points="759,941 744,952 744,960 759,949" fill="#615787"/>
<polygon points="759,947 744,958 744,966 759,955" fill="#675e80"/>
<polygon points="759,953 744,965 744,972 759,961" fill="#6c6378"/>
<polygon points="759,960 744,971 744,979 759,967" fill="#706871"/>
<polygon points="759,966 744,977 744,985 759,973" fill="#726b6b"/>
<polygon points="759,972 744,983 743,991 758,980" fill="#726968"/>
<polygon points="758,978 743,989 743,997 758,986" fill="#6f6565"/>
<polygon points="758,984 743,995 743,1003 758,992" fill="#6d6162"/>
<polygon points="758,990 743,1002 743,1009 758,998" fill="#6a5d60"/>
<polygon points="758,996 743,1008 743,1016 758,1004" fill="#67595d"/>
<polygon points="758,1002 743,1014 743,1022 758,1010" fill="#635359"/>
<polygon points="758,1009 743,1020 743,1028 757,1016" fill="#5f4e56"/>
<polygon points="757,1015 743,1026 743,1034 757,1022" fill="#5c4a53"/>
<polygon points="757,1021 743,1032 742,1040 757,1029" fill="#5a4852"/>
<polygon points="757,1027 742,1039 742,1046 757,1035" fill="#5a4852"/>
<polygon points="757,1033 742,1045 742,1053 757,1041" fill="#5a4852"/>
<polygon points="757,1039 742,1051 742,1059 757,1047" fill="#5a4852"/>
<polygon points="749,809 734,819 733,827 749,817" fill="#2521ae"/>
<polygon points="749,815 733,825 733,833 749,823" fill="#2521ae"/>
<polygon points="749,821 733,832 733,839 749,829" fill="#2521ae"/>
<polygon points="749,828 733,838 733,846 749,835" fill="#2521ae"/>
<polygon points="749,834 733,844 733,852 749,842" fill="#2521ae"/>
<polygon points="749,840 733,850 733,858 748,848" fill="#2521ae"/>
<polygon points="748,846 733,856 733,864 748,854" fill="#2521ae"/>
<polygon points="748,852 733,863 733,870 748,860" fill="#2521ae"/>
<polygon points="748,858 733,869 733,877 748,866" fill="#2521ae"/>
<polygon points="748,865 733,875 732,883 748,872" fill="#2521ae"/>
<polygon points="748,871 733,881 732,889 748,879" fill="#2521ae"/>
<polygon points="748,877 732,887 732,895 748,885" fill="#2521ae"/>
<polygon points="748,883 732,894 732,901 748,891" fill="#2521ae"/>
<polygon points="748,889 732,900 732,908 747,897" fill="#2622ad"/>
<polygon points="747,895 732,906 732,914 747,903" fill="#2924ac"/>
<polygon points="747,902 732,912 732,920 747,909" fill="#2c27aa"/>
<polygon points="747,908 732,918 732,926 747,915" fill="#312ba7"/>
<polygon points="747,914 732,925 732,932 747,922" fill="#362fa4"/>
<polygon points="747,920 732,931 731,939 747,928" fill="#3c34a1"/>
<polygon points="747,926 732,937 731,945 747,934" fill="#42399e"/>
<polygon points="747,932 731,943 731,951 746,940" fill="#483e9a"/>
<polygon points="746,939 731,949 731,957 746,946" fill="#4f4495"/>
<polygon points="746,945 731,956 731,963 746,952" fill="#574c8f"/>
<polygon points="746,951 731,962 731,970 746,959" fill="#5d5289"/>
<polygon points="746,957 731,968 731,976 746,965" fill="#635982"/>
<polygon points="746,963 731,974 731,982 746,971" fill="#685f7a"/>
<polygon points="746,969 731,980 731,988 746,977" fill="#6d6473"/>
<polygon points="746,975 731,987 731,994 746,983" fill="#71686c"/>
<polygon points="746,982 731,993 730,1001 745,989" fill="#716868"/>
<polygon points="745,988 730,999 730,1007 745,996" fill="#6f6465"/>
<polygon points="745,994 730,1005 730,1013 745,1002" fill="#6d6163"/>
<polygon points="745,1000 730,1011 730,1019 745,1008" fill="#6a5d60"/>
<polygon points="745,1006 730,1018 730,1025 745,1014" fill="#68595d"/>
<polygon points="745,1012 730,1024 730,1032 745,1020" fill="#63535a"/>
<polygon points="745,1019 730,1030 730,1038 745,1026" fill="#5f4f56"/>
<polygon points="745,1025 730,1036 730,1044 744,1033" fill="#5c4a54"/>
<polygon points="744,1031 730,1042 730,1050 744,1039" fill="#5a4852"/>
<polygon points="744,1037 730,1049 729,1057 744,1045" fill="#5a4852"/>
<polygon points="744,1043 729,1055 729,1063 744,1051" fill="#5a4852"/>
<polygon points="744,1049 729,1061 729,1069 744,1057" fill="#5a4852"/>
<polygon points="736,818 720,828 720,836 735,826" fill="#2420ae"/>
<polygon points="736,824 720,834 720,842 735,832" fill="#2420ae"/>
<polygon points="735,830 720,841 720,848 735,838" fill="#2420ae"/>
<polygon points="735,837 720,847 720,855 735,844" fill="#2420ae"/>
<polygon points="735,843 720,853 719,861 735,851" fill="#2420ae"/>
<polygon points="735,849 720,859 719,867 735,857" fill="#2420ae"/>
<polygon points="735,855 719,865 719,873 735,863" fill="#2420ae"/>
<polygon points="735,861 719,872 719,880 735,869" fill="#2420ae"/>
<polygon points="735,867 719,878 719,886 735,875" fill="#2420ae"/>
<polygon points="735,874 719,884 719,892 734,882" fill="#2420ae"/>
<polygon points="735,880 719,890 719,898 734,888" fill="#2420ae"/>
<polygon points="734,886 719,897 719,905 734,894" fill="#2420ae"/>
<polygon points="734,892 719,903 719,911 734,900" fill="#2420ae"/>
<polygon points="734,898 719,909 719,917 734,906" fill="#2420ae"/>
<polygon points="734,905 719,915 719,923 734,912" fill="#2622ad"/>
<polygon points="734,911 719,922 719,929 734,919" fill="#2924ab"/>
<polygon points="734,917 719,928 718,936 734,925" fill="#2e28a8"/>
<polygon points="734,923 718,934 718,942 734,931" fill="#332ca5"/>
<polygon points="734,929 718,940 718,948 733,937" fill="#3931a1"/>
<polygon points="734,936 718,947 718,954 733,943" fill="#3f369e"/>
<polygon points="733,942 718,953 718,961 733,950" fill="#453b9a"/>
<polygon points="733,948 718,959 718,967 733,956" fill="#4c4196"/>
<polygon points="733,954 718,965 718,973 733,962" fill="#534890"/>
<polygon points="733,960 718,971 718,979 733,968" fill="#5a4e8a"/>
<polygon points="733,967 718,978 718,986 733,974" fill="#605583"/>
<polygon points="733,973 718,984 718,992 733,981" fill="#655a7c"/>
<polygon points="733,979 718,990 718,998 733,987" fill="#6a6075"/>
<polygon points="733,985 718,996 717,1004 732,993" fill="#6f656e"/>
<polygon points="732,991 718,1003 717,1011 732,999" fill="#706669"/>
<polygon points="732,998 717,1009 717,1017 732,1005" fill="#6e6366"/>
<polygon points="732,1004 717,1015 717,1023 732,1012" fill="#6d6063"/>
<polygon points="732,1010 717,1021 717,1029 732,1018" fill="#6b5e61"/>
<polygon points="732,1016 717,1028 717,1035 732,1024" fill="#685a5e"/>
<polygon points="732,1022 717,1034 717,1042 732,1030" fill="#64545a"/>
<polygon points="732,1029 717,1040 717,1048 732,1036" fill="#604f57"/>
<polygon points="732,1035 717,1046 717,1054 732,1043" fill="#5c4b54"/>
<polygon points="732,1041 717,1053 717,1060 731,1049" fill="#5a4852"/>
<polygon points="731,1047 717,1059 717,1067 731,1055" fill="#5a4852"/>
<polygon points="731,1053 717,1065 717,1073 731,1061" fill="#5a4852"/>
<polygon points="731,1060 717,1071 716,1079 731,1067" fill="#5a4852"/>
<polygon points="722,827 706,837 706,845 722,835" fill="#231fae"/>
<polygon points="722,833 706,843 706,851 722,841" fill="#231fae"/>
<polygon points="722,839 706,849 706,857 722,847" fill="#231fae"/>
<polygon points="722,845 706,856 706,864 722,853" fill="#231fae"/>
<polygon points="722,852 706,862 706,870 722,860" fill="#231fae"/>
<polygon points="722,858 706,868 706,876 721,866" fill="#231fae"/>
<polygon points="721,864 706,874 706,882 721,872" fill="#231fae"/>
<polygon points="721,870 706,881 706,889 721,878" fill="#231fae"/>
<polygon points="721,877 706,887 706,895 721,884" fill="#231fae"/>
<polygon points="721,883 706,893 706,901 721,891" fill="#231fae"/>
<polygon points="721,889 706,900 706,907 721,897" fill="#231fae"/>
<polygon points="721,895 706,906 705,914 721,903" fill="#231fae"/>
<polygon points="721,901 706,912 705,920 721,909" fill="#231fae"/>
<polygon points="721,908 705,918 705,926 721,916" fill="#231fae"/>
<polygon points="721,914 705,925 705,933 721,922" fill="#2420ad"/>
<polygon points="721,920 705,931 705,939 721,928" fill="#2722ab"/>
<polygon points="721,926 705,937 705,945 720,934" fill="#2b26a9"/>
<polygon points="720,933 705,943 705,951 720,941" fill="#302aa5"/>
<polygon points="720,939 705,950 705,958 720,947" fill="#362fa2"/>
<polygon points="720,945 705,956 705,964 720,953" fill="#3c349e"/>
<polygon points="720,951 705,962 705,970 720,959" fill="#43399a"/>
<polygon points="720,958 705,969 705,976 720,965" fill="#493e96"/>
<polygon points="720,964 705,975 705,983 720,972" fill="#514590"/>
<polygon points="720,970 705,981 705,989 720,978" fill="#574b8a"/>
<polygon points="720,976 705,987 705,995 720,984" fill="#5d5184"/>
<polygon points="720,982 705,994 705,1002 720,990" fill="#63577d"/>
<polygon points="720,989 705,1000 705,1008 720,997" fill="#685d76"/>
<polygon points="720,995 705,1006 704,1014 719,1003" fill="#6d626f"/>
<polygon points="719,1001 704,1012 704,1020 719,1009" fill="#6f6469"/>
<polygon points="719,1007 704,1019 704,1027 719,1015" fill="#6e6366"/>
<polygon points="719,1014 704,1025 704,1033 719,1022" fill="#6d6064"/>
<polygon points="719,1020 704,1031 704,1039 719,1028" fill="#6b5e61"/>
<polygon points="719,1026 704,1038 704,1045 719,1034" fill="#685a5e"/>
<polygon points="719,1032 704,1044 704,1052 719,1040" fill="#64555b"/>
<polygon points="719,1039 704,1050 704,1058 719,1046" fill="#604f57"/>
<polygon points="719,1045 704,1056 704,1064 719,1053" fill="#5c4b54"/>
<polygon points="719,1051 704,1063 704,1071 719,1059" fill="#5a4852"/>
<polygon points="719,1057 704,1069 704,1077 719,1065" fill="#5a4852"/>
<polygon points="719,1063 704,1075 704,1083 718,1071" fill="#5a4852"/>
<polygon points="718,1070 704,1081 704,1089 718,1078" fill="#5a4852"/>
<polygon points="708,836 693,846 693,854 708,843" fill="#211dae"/>
<polygon points="708,842 693,852 693,860 708,850" fill="#211dae"/>
<polygon points="708,848 693,858 693,866 708,856" fill="#211dae"/>
<polygon points="708,854 693,865 692,873 708,862" fill="#211dae"/>
<polygon points="708,861 692,871 692,879 708,869" fill="#211dae"/>
<polygon points="708,867 692,877 692,885 708,875" fill="#211dae"/>
<polygon points="708,873 692,883 692,891 708,881" fill="#211dae"/>
<polygon points="708,879 692,890 692,898 708,887" fill="#211dae"/>
<polygon points="708,886 692,896 692,904 708,894" fill="#211dae"/>
<polygon points="708,892 692,902 692,910 708,900" fill="#211dae"/>
<polygon points="708,898 692,909 692,917 708,906" fill="#211dae"/>
<polygon points="708,904 692,915 692,923 707,912" fill="#211dae"/>
<polygon points="708,911 692,921 692,929 707,919" fill="#211dae"/>
<polygon points="707,917 692,928 692,936 707,925" fill="#211dae"/>
<polygon points="707,923 692,934 692,942 707,931" fill="#221ead"/>
<polygon points="707,930 692,940 692,948 707,937" fill="#2520ab"/>
<polygon points="707,936 692,947 692,954 707,944" fill="#2924a9"/>
<polygon points="707,942 692,953 692,961 707,950" fill="#2e28a5"/>
<polygon points="707,948 692,959 692,967 707,956" fill="#342da2"/>
<polygon points="707,955 692,965 692,973 707,962" fill="#3b329e"/>
<polygon points="707,961 692,972 692,980 707,969" fill="#413799"/>
<polygon points="707,967 692,978 692,986 707,975" fill="#483d95"/>
<polygon points="707,973 692,984 692,992 707,981" fill="#4f438f"/>
<polygon points="707,980 692,991 692,999 707,988" fill="#56498a"/>
<polygon points="707,986 692,997 692,1005 707,994" fill="#5c4f84"/>
<polygon points="707,992 692,1003 691,1011 707,1000" fill="#61557d"/>
<polygon points="707,998 692,1010 691,1018 706,1006" fill="#675b77"/>
<polygon points="706,1005 691,1016 691,1024 706,1013" fill="#6c6170"/>
<polygon points="706,1011 691,1022 691,1030 706,1019" fill="#6e636a"/>
<polygon points="706,1017 691,1029 691,1036 706,1025" fill="#6e6266"/>
<polygon points="706,1023 691,1035 691,1043 706,1031" fill="#6d6064"/>
<polygon points="706,1030 691,1041 691,1049 706,1038" fill="#6b5e62"/>
<polygon points="706,1036 691,1047 691,1055 706,1044" fill="#695b5f"/>
<polygon points="706,1042 691,1054 691,1062 706,1050" fill="#64555b"/>
<polygon points="706,1049 691,1060 691,1068 706,1056" fill="#605057"/>
<polygon points="706,1055 691,1066 691,1074 706,1063" fill="#5c4b54"/>
<polygon points="706,1061 691,1073 691,1081 706,1069" fill="#5a4852"/>
<polygon points="706,1067 691,1079 691,1087 706,1075" fill="#5a4852"/>
<polygon points="706,1074 691,1085 691,1093 706,1082" fill="#5a4852"/>
<polygon points="706,1080 691,1092 691,1100 706,1088" fill="#5a4852"/>
<polygon points="695,844 679,854 679,862 695,852" fill="#201cae"/>
<polygon points="695,851 679,861 679,869 695,859" fill="#201cae"/>
<polygon points="695,857 679,867 679,875 695,865" fill="#201cae"/>
<polygon points="695,863 679,873 679,881 695,871" fill="#201cae"/>
<polygon points="695,870 679,880 679,888 694,877" fill="#201cae"/>
<polygon points="694,876 679,886 679,894 694,884" fill="#201cae"/>
<polygon points="694,882 679,892 679,900 694,890" fill="#201cae"/>
<polygon points="694,888 679,899 679,907 694,896" fill="#201cae"/>
<polygon points="694,895 679,905 679,913 694,903" fill="#201cae"/>
<polygon points="694,901 679,912 679,920 694,909" fill="#201cae"/>
<polygon points="694,907 679,918 679,926 694,915" fill="#201cae"/>
<polygon points="694,914 679,924 679,932 694,922" fill="#201cae"/>
<polygon points="694,920 679,931 679,939 694,928" fill="#201cae"/>
<polygon points="694,926 679,937 679,945 694,934" fill="#201cae"/>
<polygon points="694,933 679,943 679,951 694,940" fill="#211dad"/>
<polygon points="694,939 679,950 679,958 694,947" fill="#231fac"/>
<polygon points="694,945 679,956 679,964 694,953" fill="#2722a9"/>
<polygon points="694,951 679,962 679,970 694,959" fill="#2d26a6"/>
<polygon points="694,958 679,969 679,977 694,966" fill="#322ba2"/>
<polygon points="694,964 679,975 679,983 694,972" fill="#39309d"/>
<polygon points="694,970 679,981 679,989 694,978" fill="#3f3599"/>
<polygon points="694,977 679,988 679,996 694,985" fill="#463b94"/>
<polygon points="694,983 679,994 678,1002 694,991" fill="#4e418f"/>
<polygon points="694,989 678,1000 678,1008 694,997" fill="#554789"/>
<polygon points="694,996 678,1007 678,1015 693,1003" fill="#5b4d83"/>
<polygon points="694,1002 678,1013 678,1021 693,1010" fill="#60537d"/>
<polygon points="693,1008 678,1019 678,1027 693,1016" fill="#655977"/>
<polygon points="693,1014 678,1026 678,1034 693,1022" fill="#6b5f70"/>
<polygon points="693,1021 678,1032 678,1040 693,1029" fill="#6d626b"/>
<polygon points="693,1027 678,1038 678,1046 693,1035" fill="#6e6267"/>
<polygon points="693,1033 678,1045 678,1053 693,1041" fill="#6d6064"/>
<polygon points="693,1040 678,1051 678,1059 693,1048" fill="#6b5e62"/>
<polygon points="693,1046 678,1057 678,1065 693,1054" fill="#695b5f"/>
<polygon points="693,1052 678,1064 678,1072 693,1060" fill="#65555b"/>
<polygon points="693,1059 678,1070 678,1078 693,1066" fill="#605057"/>
<polygon points="693,1065 678,1076 678,1084 693,1073" fill="#5c4b54"/>
<polygon points="693,1071 678,1083 678,1091 693,1079" fill="#5a4852"/>
<polygon points="693,1077 678,1089 678,1097 693,1085" fill="#5a4852"/>
<polygon points="693,1084 678,1095 678,1103 693,1092" fill="#5a4852"/>
<polygon points="693,1090 678,1102 678,1110 693,1098" fill="#5a4852"/>
<polygon points="681,853 665,863 665,871 681,861" fill="#1f1bae"/>
<polygon points="681,859 665,870 665,878 681,867" fill="#1f1bae"/>
<polygon points="681,866 665,876 665,884 681,874" fill="#1f1bae"/>
<polygon points="681,872 665,882 665,890 681,880" fill="#1f1bae"/>
<polygon points="681,878 665,889 665,897 681,886" fill="#1f1bae"/>
<polygon points="681,885 665,895 665,903 681,893" fill="#1f1bae"/>
<polygon points="681,891 665,902 665,910 681,899" fill="#1f1bae"/>
<polygon points="681,897 665,908 665,916 681,905" fill="#1f1bae"/>
<polygon points="681,904 665,914 665,922 681,912" fill="#1f1bae"/>
<polygon points="681,910 665,921 665,929 681,918" fill="#1f1bae"/>
<polygon points="681,916 665,927 665,935 681,924" fill="#1f1bae"/>
<polygon points="681,923 665,933 665,941 681,931" fill="#1f1bae"/>
<polygon points="681,929 665,940 665,948 681,937" fill="#1f1bae"/>
<polygon points="681,935 665,946 665,954 681,943" fill="#1f1bae"/>
<polygon points="681,942 665,953 665,961 681,950" fill="#1f1bae"/>
<polygon points="681,948 665,959 665,967 681,956" fill="#221dac"/>
<polygon points="681,954 665,965 665,973 681,962" fill="#2520a9"/>
<polygon points="681,961 665,972 665,980 681,969" fill="#2b24a6"/>
<polygon points="681,967 665,978 665,986 681,975" fill="#3129a2"/>
<polygon points="681,974 665,984 665,992 681,981" fill="#372e9d"/>
<polygon points="681,980 665,991 665,999 681,988" fill="#3e3498"/>
<polygon points="681,986 665,997 665,1005 680,994" fill="#453993"/>
<polygon points="680,993 665,1004 665,1012 680,1001" fill="#4c3f8e"/>
<polygon points="680,999 665,1010 665,1018 680,1007" fill="#534688"/>
<polygon points="680,1005 665,1016 665,1024 680,1013" fill="#5a4c82"/>
<polygon points="680,1012 665,1023 665,1031 680,1020" fill="#60527d"/>
<polygon points="680,1018 665,1029 665,1037 680,1026" fill="#655877"/>
<polygon points="680,1024 665,1035 665,1043 680,1032" fill="#6a5e70"/>
<polygon points="680,1031 665,1042 665,1050 680,1039" fill="#6d616b"/>
<polygon points="680,1037 665,1048 665,1056 680,1045" fill="#6d6267"/>
<polygon points="680,1043 665,1055 665,1063 680,1051" fill="#6d6064"/>
<polygon points="680,1050 665,1061 665,1069 680,1058" fill="#6c5e62"/>
<polygon points="680,1056 665,1067 665,1075 680,1064" fill="#695b5f"/>
<polygon points="680,1062 665,1074 665,1082 680,1070" fill="#65555b"/>
<polygon points="680,1069 665,1080 665,1088 680,1077" fill="#605058"/>
<polygon points="680,1075 665,1086 665,1094 680,1083" fill="#5c4b54"/>
<polygon points="680,1081 665,1093 665,1101 680,1089" fill="#5a4852"/>
<polygon points="680,1088 665,1099 665,1107 680,1096" fill="#5a4852"/>
<polygon points="680,1094 665,1106 665,1114 680,1102" fill="#5a4852"/>
<polygon points="680,1100 665,1112 665,1120 680,1108" fill="#5a4852"/>
<polygon points="667,862 652,872 652,880 667,870" fill="#1e1aae"/>
<polygon points="667,868 652,878 652,887 667,876" fill="#1e1aae"/>
<polygon points="667,875 652,885 652,893 667,883" fill="#1e1aae"/>
<polygon points="667,881 652,891 652,899 667,889" fill="#1e1aae"/>
<polygon points="667,887 652,898 652,906 667,895" fill="#1e1aae"/>
<polygon points="667,894 652,904 652,912 667,902" fill="#1e1aae"/>
<polygon points="667,900 652,911 652,919 667,908" fill="#1e1aae"/>
<polygon points="667,907 652,917 652,925 667,915" fill="#1e1aae"/>
<polygon points="667,913 652,923 652,931 667,921" fill="#1e1aae"/>
<polygon points="667,919 652,930 652,938 667,927" fill="#1e1aae"/>
<polygon points="667,926 652,936 652,944 667,934" fill="#1e1aae"/>
<polygon points="667,932 652,943 652,951 667,940" fill="#1e1aae"/>
<polygon points="667,938 652,949 652,957 667,946" fill="#1e1aae"/>
<polygon points="667,945 652,955 652,963 667,953" fill="#1e1aae"/>
<polygon points="667,951 652,962 652,970 667,959" fill="#1f1aae"/>
<polygon points="667,957 652,968 652,976 667,966" fill="#211cac"/>
<polygon points="667,964 652,975 652,983 667,972" fill="#251fa9"/>
<polygon points="667,970 652,981 652,989 667,978" fill="#2a23a6"/>
<polygon points="667,977 652,987 652,996 667,985" fill="#3028a2"/>
<polygon points="667,983 652,994 652,1002 667,991" fill="#362d9d"/>
<polygon points="667,989 652,1000 652,1008 667,997" fill="#3d3398"/>
<polygon points="667,996 652,1007 652,1015 667,1004" fill="#443993"/>
<polygon points="667,1002 652,1013 652,1021 667,1010" fill="#4c3f8e"/>
<polygon points="667,1008 652,1019 652,1028 667,1016" fill="#534588"/>
<polygon points="667,1015 652,1026 652,1034 667,1023" fill="#5a4c82"/>
<polygon points="667,1021 652,1032 652,1040 667,1029" fill="#5f527c"/>
<polygon points="667,1028 652,1039 652,1047 667,1036" fill="#655877"/>
<polygon points="667,1034 652,1045 652,1053 667,1042" fill="#6a5e70"/>
<polygon points="667,1040 652,1052 652,1060 667,1048" fill="#6d616b"/>
<polygon points="667,1047 652,1058 652,1066 667,1055" fill="#6d6167"/>
<polygon points="667,1053 652,1064 652,1072 667,1061" fill="#6d6064"/>
<polygon points="667,1059 652,1071 652,1079 667,1067" fill="#6c5e62"/>
<polygon points="667,1066 652,1077 652,1085 667,1074" fill="#695b5f"/>
<polygon points="667,1072 652,1084 652,1092 667,1080" fill="#65565b"/>
<polygon points="667,1079 652,1090 652,1098 667,1087" fill="#605058"/>
<polygon points="667,1085 652,1096 652,1105 667,1093" fill="#5c4b54"/>
<polygon points="667,1091 652,1103 652,1111 667,1099" fill="#5a4852"/>
<polygon points="667,1098 652,1109 652,1117 667,1106" fill="#5a4852"/>
<polygon points="667,1104 652,1116 653,1124 667,1112" fill="#5a4852"/>
<polygon points="667,1110 653,1122 653,1130 667,1118" fill="#5a4852"/>
</g></g></g>
<polygon points="169.5,717.6 170.7,718.4 171.9,718.6 173.1,721.7 174.2,720.0 175.4,723.0 176.6,723.1 177.8,722.6 179.0,725.5 180.2,724.3 181.4,726.9 182.6,726.2 183.7,727.2 184.9,729.6 186.1,732.3 187.3,730.0 188.5,731.3 189.7,734.0 190.9,736.4 192.0,735.6 193.2,735.7 194.4,739.1 195.6,735.9 196.8,740.4 198.0,738.7 199.2,739.0 200.3,739.7 201.5,741.5 202.7,744.6 203.9,742.7 205.1,745.4 206.3,746.5 207.5,746.2 208.7,747.9 209.8,746.6 211.0,747.5 212.2,749.0 213.4,752.0 214.6,751.8 215.8,752.2 217.0,754.3 218.1,754.6 219.3,754.8 220.5,757.9 221.7,758.3 222.9,757.2 224.1,759.5 225.3,760.2 226.4,762.7 227.6,762.9 228.8,761.8 230.0,765.8 231.2,762.8 232.4,765.1 233.6,767.5 234.8,765.6 235.9,768.0 237.1,766.9 238.3,770.6 239.5,772.0 240.7,772.0 241.9,774.2 243.1,772.6 244.2,775.2 245.4,775.6 246.6,776.5 247.8,776.8 249.0,779.4 250.2,780.8 251.4,779.5 252.5,781.3 253.7,779.4 254.9,783.2 256.1,783.9 257.3,786.3 258.5,786.4 259.7,784.9 260.9,786.2 262.0,788.4 263.2,786.4 264.4,789.2 265.6,788.8 266.8,789.5 268.0,790.1 269.2,794.2 270.3,792.2 271.5,793.6 272.7,795.1 273.9,798.2 275.1,795.5 276.3,798.1 277.5,799.4 278.7,801.8 279.8,802.4 281.0,803.5 282.2,801.7 283.4,803.2 284.6,803.9 285.8,807.1 287.0,808.4 288.1,805.6 289.3,806.6 290.5,807.8 291.7,808.6 292.9,810.7 294.1,812.0 295.3,811.4 296.4,811.2 297.6,813.9 298.8,814.6 300.0,816.4 301.2,819.0 302.4,818.7 303.6,818.8 304.8,820.1 305.9,821.3 307.1,819.4 308.3,824.1 309.5,824.4 310.7,825.7 311.9,826.3 313.1,825.4 314.2,826.3 315.4,825.8 316.6,829.1 317.8,827.4 319.0,828.3 320.2,829.9 321.4,830.5 322.5,832.2 323.7,831.8 324.9,832.5 326.1,834.0 327.3,834.7 328.5,836.8 329.7,836.1 330.9,840.8 332.0,840.6 333.2,839.4 334.4,840.7 335.6,842.0 336.8,843.0 338.0,842.8 339.2,847.0 340.3,848.5 341.5,847.0 342.7,848.0 343.9,847.1 345.1,848.0 346.3,850.0 347.5,850.5 348.7,854.0 349.8,851.9 351.0,852.1 352.2,857.2 353.4,856.2 354.6,855.3 355.8,858.0 357.0,856.6 358.1,859.7 359.3,862.6 360.5,863.0 361.7,863.1 362.9,862.1 364.1,863.4 365.3,863.4 366.4,867.0 367.6,866.8 368.8,868.8 370.0,867.7 371.2,868.1 372.4,871.7 373.6,873.3 374.8,873.6 375.9,874.3 377.1,875.2 378.3,875.8 379.5,874.4 380.7,876.6 381.9,876.7 383.1,876.1 384.2,877.0 385.4,879.0 386.6,879.8 387.8,882.7 389.0,884.7 390.2,883.3 391.4,886.4 392.5,887.6 393.7,888.3 394.9,886.5 396.1,886.8 397.3,887.7 398.5,888.4 399.7,889.4 400.9,892.1 402.0,894.3 403.2,894.9 404.4,894.1 405.6,895.8 406.8,897.4 408.0,895.0 409.2,898.5 410.3,900.5 411.5,900.8 412.7,901.6 413.9,901.2 415.1,900.8 416.3,904.4 417.5,903.3 418.6,906.3 419.8,907.9 421.0,906.2 422.2,907.1 423.4,910.5 424.6,910.4 425.8,908.7 427.0,909.4 428.1,910.4 429.3,914.7 430.5,915.2 431.7,913.1 432.9,917.0 434.1,918.6 435.3,918.0 436.4,917.6 437.6,919.3 438.8,918.3 440.0,918.7 441.2,923.9 442.4,923.3 443.6,923.7 444.8,926.4 445.9,925.0 447.1,927.9 448.3,928.6 449.5,926.7 450.7,927.8 451.9,928.8 453.1,929.5 454.2,931.9 455.4,931.4 456.6,933.0 457.8,932.6 459.0,936.9 460.2,935.3 461.4,936.7 462.5,938.1 463.7,940.5 464.9,939.2 466.1,942.3 467.3,941.3 468.5,942.4 469.7,943.2 470.9,941.8 472.0,944.6 473.2,944.3 474.4,944.4 475.6,948.9 476.8,947.0 478.0,949.2 479.2,951.2 480.3,951.3 481.5,951.2 482.7,953.0 483.9,954.0 485.1,955.9 486.3,953.8 487.5,956.7 488.6,956.2 489.8,957.2 491.0,960.3 492.2,960.0 493.4,961.1 494.6,962.9 495.8,964.5 497.0,963.3 498.1,964.9 499.3,965.3 500.5,966.2 501.7,968.0 502.9,967.8 504.1,969.0 505.3,969.6 506.4,972.6 507.6,972.4 508.8,974.1 510.0,975.3 511.2,973.1 512.4,975.3 513.6,978.0 514.8,978.4 515.9,976.1 517.1,976.9 518.3,979.3 519.5,978.5 520.7,980.1 521.9,980.3 523.1,983.8 524.2,985.2 525.4,986.6 526.6,984.2 527.8,987.6 529.0,988.2 530.2,986.8 531.4,991.0 532.5,992.3 533.7,989.8 534.9,994.0 536.1,992.4 537.3,993.7 538.5,996.8 539.7,997.0 540.9,994.9 542.0,997.0 543.2,998.2 544.4,998.3 545.6,998.6 546.8,1000.0 548.0,1002.7 549.2,1000.5 550.3,1003.7 551.5,1004.1 552.7,1003.1 553.9,1005.4 555.1,1007.6 556.3,1008.0 557.5,1006.9 558.6,1011.9 559.8,1011.9 561.0,1013.6 562.2,1010.6 563.4,1012.2 564.6,1012.1 565.8,1016.3 567.0,1014.9 568.1,1015.2 569.3,1017.4 570.5,1020.5 571.7,1020.9 572.9,1019.3 574.1,1019.7 575.3,1024.0 576.4,1023.4 577.6,1024.8 578.8,1023.0 580.0,1023.7 581.2,1027.4 582.4,1027.2 583.6,1026.5 584.8,1031.2 585.9,1030.8 587.1,1032.4 588.3,1030.1 589.5,1034.4 590.7,1031.8 591.9,1036.2 593.1,1035.3 594.2,1035.6 595.4,1037.5 596.6,1040.1 597.8,1038.0 599.0,1038.3 600.2,1040.9 601.4,1040.5 602.5,1040.8 603.7,1042.0 604.9,1042.3 606.1,1043.9 607.3,1045.3 608.5,1046.2 609.7,1049.1 610.9,1047.9 612.0,1049.7 613.2,1049.1 614.4,1050.8 615.6,1050.2 616.8,1052.1 618.0,1052.0 619.2,1056.1 620.3,1056.1 621.5,1055.4 622.7,1057.6 623.9,1060.5 625.1,1057.7 626.3,1061.8 627.5,1060.9 628.6,1062.1 629.8,1064.5 631.0,1063.4 632.2,1064.8 633.4,1066.5 634.6,1068.7 635.8,1066.8 637.0,1069.8 638.1,1070.2 639.3,1070.7 640.5,1070.6 641.7,1071.2 642.9,1070.8 644.1,1072.0 645.3,1072.6 646.4,1076.5 647.6,1075.2 648.8,1075.7 650.0,1076.3 651.2,1080.5 652.4,1081.6 653.6,1081.6 654.7,1080.7 655.9,1081.4 657.1,1082.5 658.3,1084.2 659.5,1083.7 660.7,1085.9 661.9,1085.9 663.1,1090.0 664.2,1090.9 665.4,1089.9 666.6,1089.4 667.8,1090.7 667.8,1133.8 175.0,753.9" fill="#7e0000"/>
<polygon points="667.8,1090.7 668.9,1092.6 670.1,1088.8 671.2,1088.1 672.4,1085.6 673.5,1086.4 674.7,1085.9 675.8,1085.1 677.0,1082.8 678.1,1083.3 679.3,1080.1 680.4,1080.4 681.6,1078.7 682.8,1079.2 683.9,1076.7 685.0,1075.7 686.2,1076.0 687.3,1074.8 688.5,1075.5 689.6,1074.3 690.8,1074.4 691.9,1073.1 693.1,1072.4 694.2,1072.2 695.4,1069.1 696.5,1067.9 697.7,1070.0 698.8,1065.3 700.0,1067.0 701.1,1065.7 702.3,1062.1 703.4,1064.8 704.6,1064.1 705.8,1062.0 706.9,1061.6 708.0,1061.0 709.2,1057.1 710.3,1057.9 711.5,1056.9 712.6,1057.5 713.8,1056.4 714.9,1055.6 716.1,1053.6 717.2,1054.1 718.4,1052.2 719.5,1051.4 720.7,1048.4 721.8,1046.6 723.0,1046.1 724.1,1046.2 725.3,1044.2 726.4,1046.6 727.6,1044.4 728.8,1043.8 729.9,1042.9 731.0,1042.2 732.2,1040.5 733.3,1037.4 734.5,1040.0 735.6,1038.9 736.8,1036.9 737.9,1036.1 739.1,1035.8 740.2,1032.2 741.4,1034.3 742.5,1031.2 743.7,1029.5 744.8,1029.4 746.0,1030.6 747.1,1027.3 748.3,1028.8 749.4,1029.0 750.6,1025.9 751.8,1024.5 752.9,1024.0 754.0,1024.0 755.2,1023.5 756.3,1021.9 757.5,1021.1 758.6,1017.7 759.8,1017.1 760.9,1016.7 762.1,1017.9 763.2,1015.1 764.4,1015.3 765.5,1011.9 766.7,1011.2 767.8,1011.3 769.0,1012.2 770.1,1011.3 771.3,1010.4 772.4,1007.7 773.6,1007.8 774.8,1006.7 775.9,1005.8 777.0,1003.3 778.2,1005.9 779.3,1001.8 780.5,1004.4 781.6,1003.3 782.8,998.3 783.9,999.4 785.1,1000.1 786.2,999.9 787.4,996.6 788.5,994.9 789.7,993.7 790.8,996.1 792.0,991.9 793.1,992.7 794.3,989.8 795.4,990.6 796.6,991.6 797.8,987.0 798.9,989.2 800.0,986.9 801.2,987.7 802.3,985.9 803.5,982.9 804.6,985.0 805.8,982.2 806.9,979.2 808.1,978.2 809.2,979.5 810.4,978.4 811.5,976.8 812.7,975.2 813.8,975.2 815.0,974.2 816.1,975.6 817.3,970.9 818.4,973.4 819.6,972.9 820.8,968.7 821.9,971.5 823.0,969.6 824.2,969.5 825.3,965.9 826.5,965.3 827.6,964.5 828.8,966.3 829.9,963.6 831.1,961.6 832.2,961.0 833.4,959.4 834.5,957.5 835.7,956.8 836.8,959.2 838.0,955.8 839.1,957.9 840.3,953.9 841.4,953.0 842.6,953.2 843.8,950.9 844.9,950.8 846.0,952.5 847.2,951.3 848.3,950.0 849.5,948.3 850.6,948.7 851.8,947.9 852.9,945.2 854.1,945.1 855.2,941.1 856.4,943.3 857.5,941.1 858.7,941.6 859.8,940.2 861.0,937.6 862.1,935.7 863.3,938.7 864.4,934.2 865.6,934.8 866.8,933.4 867.9,932.2 869.0,933.3 870.2,933.5 871.3,929.3 872.5,930.2 873.6,927.7 874.8,928.0 875.9,926.3 877.1,924.4 878.2,923.4 879.4,922.7 880.5,925.0 881.7,922.2 882.8,920.1 884.0,922.2 885.1,921.7 886.3,918.4 887.4,916.1 888.6,915.4 889.8,914.0 890.9,914.2 892.0,912.2 893.2,912.0 894.3,911.1 895.5,911.6 896.6,912.2 897.8,910.6 898.9,908.2 900.1,907.3 901.2,906.9 902.4,905.3 903.5,904.2 904.7,902.1 905.8,902.1 907.0,904.3 908.1,899.6 909.3,900.4 910.4,900.1 911.6,900.2 912.8,896.4 913.9,895.7 915.0,894.7 916.2,894.5 917.3,893.8 918.5,895.2 919.6,893.8 920.8,893.0 921.9,888.2 923.1,887.4 924.2,889.5 925.4,889.4 926.5,886.6 927.7,886.2 928.8,882.7 930.0,883.5 931.1,885.0 932.3,883.7 933.5,882.9 934.6,882.5 935.8,878.3 936.9,876.8 938.0,876.1 939.2,876.8 940.3,876.7 941.5,876.9 942.6,875.0 943.8,873.8 944.9,873.4 946.1,871.1 947.2,870.6 948.4,867.4 949.5,869.8 950.7,866.4 951.8,868.6 953.0,866.5 954.1,864.0 955.3,862.3 956.4,862.0 957.6,862.8 958.8,862.2 959.9,858.6 961.0,857.5 962.2,858.7 963.3,858.0 964.5,856.2 965.6,854.6 966.8,855.4 968.0,851.8 969.1,852.2 970.2,852.0 971.4,853.3 972.5,851.0 973.7,851.2 974.8,848.4 976.0,846.4 977.1,845.6 978.3,847.9 979.5,845.8 980.6,843.1 981.8,840.9 982.9,842.2 984.0,842.1 985.2,840.0 986.3,838.4 987.5,839.3 988.6,839.5 989.8,835.5 990.9,833.7 992.1,834.2 993.2,833.6 994.4,833.9 995.5,830.8 996.7,832.6 997.8,831.4 999.0,829.5 1000.1,827.2 1001.3,829.7 1002.4,825.9 1003.6,827.2 1004.8,823.7 1005.9,822.7 1007.0,824.2 1008.2,821.2 1009.3,823.3 1010.5,820.3 1011.6,818.0 1012.8,817.3 1013.9,817.2 1015.1,817.4 1016.2,817.8 1017.4,813.3 1018.5,813.5 1019.7,811.8 1020.8,814.3 1022.0,809.6 1023.1,808.3 1024.3,807.4 1025.5,808.0 1026.6,809.4 1027.8,808.4 1028.9,806.8 1030.0,807.1 1031.2,805.9 1032.3,802.3 1033.5,800.7 1034.6,803.2 1035.8,801.4 1036.9,797.3 1038.1,799.2 1039.2,797.1 1040.4,796.1 1041.5,795.0 1042.7,793.4 1043.8,791.7 1045.0,792.1 1046.2,791.5 1047.3,793.3 1048.4,788.6 1049.6,791.5 1050.8,787.2 1051.9,786.9 1053.0,788.1 1054.2,787.2 1055.3,784.6 1056.5,781.9 1057.7,782.9 1058.8,781.6 1059.9,783.1 1061.1,778.9 1062.2,778.8 1063.4,780.3 1064.5,775.5 1065.7,776.3 1066.8,777.2 1068.0,776.1 1069.2,771.9 1070.3,770.9 1071.5,770.2 1072.6,773.1 1073.8,769.2 1074.9,770.5 1076.0,770.3 1077.2,766.9 1078.3,765.6 1079.5,767.8 1080.6,765.4 1081.8,762.9 1083.0,764.0 1084.1,761.3 1085.2,760.2 1086.4,758.1 1087.5,760.5 1088.7,760.4 1089.8,758.2 1091.0,758.7 1092.1,753.6 1093.3,753.6 1094.4,753.8 1095.6,755.1 1096.8,754.2 1097.9,750.7 1099.0,749.2 1100.2,749.1 1101.3,748.4 1102.5,749.5 1103.7,745.2 1104.8,747.1 1105.9,745.9 1107.1,745.4 1108.2,744.2 1109.4,742.6 1110.5,740.4 1111.7,739.5 1112.8,738.8 1114.0,739.7 1115.2,735.7 1116.3,735.3 1117.5,736.9 1118.6,733.7 1119.8,732.0 1120.9,730.9 1122.0,732.3 1123.2,730.4 1124.3,732.4 1125.5,731.1 1126.6,730.7 1127.8,726.5 1129.0,724.8 1130.1,723.9 1131.2,724.8 1132.4,724.9 1133.5,722.8 1134.7,720.9 1135.8,720.8 1137.0,720.8 1138.1,720.1 1139.3,719.6 1140.4,719.1 1141.6,717.4 1142.8,714.0 1143.9,716.3 1145.0,713.0 1146.2,713.3 1147.3,711.5 1148.5,712.2 1149.7,708.9 1150.8,708.6 1143.6,749.0 667.8,1133.8" fill="#7e0000"/>
<clipPath id="cGreen"><polygon points="143.6,573.9 145.8,572.1 148.5,571.3 151.2,570.6 153.8,569.5 156.7,569.2 159.3,568.2 162.1,567.7 164.6,565.9 167.4,565.0 170.6,565.9 173.2,564.5 175.0,562.3 177.2,560.4 180.3,559.7 181.8,557.1 184.0,555.3 186.7,554.7 188.8,552.8 191.4,551.8 193.4,549.7 196.3,549.3 198.9,548.5 201.0,546.6 203.4,545.8 206.0,545.3 208.3,544.4 210.3,542.4 213.2,542.8 215.5,541.6 217.7,540.2 219.9,538.9 222.6,538.9 225.5,537.8 227.5,535.5 230.2,534.3 232.9,532.9 234.9,530.6 237.6,530.4 240.2,530.2 242.6,528.7 245.8,530.5 248.8,532.7 251.4,532.5 253.6,531.1 256.3,531.3 258.7,530.5 260.7,528.2 263.2,527.5 265.8,527.5 268.1,526.2 271.0,527.0 273.2,525.2 275.7,524.9 278.0,523.6 280.6,523.3 283.0,522.3 285.5,521.5 288.1,521.3 290.5,520.4 293.0,519.9 295.6,519.8 298.0,518.6 300.6,518.4 303.0,517.5 305.5,517.1 307.8,515.8 310.0,514.1 312.8,514.7 315.1,513.3 317.9,513.6 320.4,512.9 322.9,511.6 325.5,511.2 327.8,509.7 330.7,510.2 333.2,509.1 335.6,507.9 338.1,506.9 341.0,507.8 343.7,507.5 346.0,505.9 348.4,504.4 351.3,505.0 353.7,503.6 356.1,502.4 358.8,501.9 361.6,502.1 364.2,501.6 366.4,499.3 369.2,499.7 371.5,497.9 374.4,498.4 376.9,497.3 379.1,496.0 381.9,496.0 384.4,495.2 386.4,493.3 389.1,493.2 391.0,490.9 393.2,489.5 395.9,489.5 397.9,487.4 400.4,486.7 402.9,486.1 405.4,485.5 407.7,484.3 409.9,482.9 412.2,481.9 415.1,482.6 417.1,480.8 419.9,481.2 422.2,480.3 424.3,478.6 426.7,477.9 429.1,477.3 431.6,476.7 433.9,475.9 436.3,475.0 438.6,474.1 441.1,473.3 443.7,472.9 445.7,471.0 448.0,469.9 450.6,469.4 452.6,467.5 455.0,466.6 457.9,466.8 459.9,464.9 462.3,464.0 464.3,461.9 467.0,461.7 469.4,460.8 471.8,460.1 473.8,458.1 476.6,458.4 479.0,457.5 481.0,455.6 483.7,455.8 486.0,454.6 488.5,454.1 490.7,452.6 493.3,452.4 495.7,451.6 497.6,449.4 500.3,449.4 502.3,447.5 505.2,447.6 507.8,447.0 509.6,444.7 512.1,444.0 514.6,443.2 516.8,441.6 519.2,440.6 521.5,439.4 524.0,438.5 526.5,437.8 528.7,436.2 531.2,435.5 533.5,434.3 536.1,434.1 538.0,431.8 540.7,431.8 543.2,431.2 545.3,429.5 547.6,428.4 550.4,428.5 552.3,426.5 554.7,425.5 557.2,425.0 559.8,424.5 562.0,423.2 564.1,421.6 566.6,421.2 569.0,420.4 571.7,420.5 573.8,418.9 576.5,418.9 578.4,416.8 580.9,416.2 583.5,416.0 586.0,415.6 588.1,414.0 590.3,412.7 592.9,412.4 595.0,410.9 597.7,410.8 599.8,409.3 602.6,409.7 605.0,408.9 606.9,406.8 609.3,406.2 612.1,406.3 614.3,405.2 616.8,404.7 618.9,403.0 621.1,401.7 623.7,401.6 625.9,400.4 628.6,400.5 630.7,398.7 633.1,398.0 635.5,397.3 637.9,396.5 640.3,395.6 643.0,395.7 644.9,393.5 647.1,392.4 650.1,393.3 652.5,392.3 654.6,390.8 657.0,390.8 659.4,392.5 662.4,392.2 664.9,394.0 667.8,393.9 670.0,395.5 673.0,395.0 675.2,396.9 677.7,397.9 680.3,398.4 682.9,399.0 685.6,399.4 688.0,400.3 690.6,400.9 693.3,401.4 695.5,403.1 696.4,405.8 698.0,408.1 698.6,410.9 701.0,412.4 704.2,411.8 706.3,414.3 709.1,414.8 711.5,416.1 714.2,416.9 717.1,417.0 719.2,418.7 721.8,419.1 724.6,419.0 726.4,421.3 729.2,421.2 731.5,422.4 733.6,424.0 736.1,424.7 738.6,425.4 740.5,427.4 743.2,427.7 745.7,428.2 748.0,429.4 750.6,429.8 752.6,431.8 755.2,431.9 757.4,433.4 760.1,433.4 762.6,434.0 764.8,435.5 767.0,436.8 769.6,437.1 772.3,437.4 774.3,439.5 776.7,440.7 779.3,441.4 781.7,442.3 784.8,441.7 786.8,443.8 789.1,445.1 792.1,444.5 794.3,446.3 797.0,446.9 799.6,447.9 802.0,449.5 804.6,450.3 807.2,451.4 809.7,452.5 811.8,454.2 814.8,453.9 817.0,455.2 819.3,456.5 821.6,457.6 824.0,458.7 825.5,461.5 828.2,461.8 830.8,462.1 833.0,460.1 835.6,460.5 838.1,459.7 840.6,459.6 843.3,459.9 845.8,460.5 848.2,461.7 850.8,462.2 853.5,462.4 856.0,463.3 858.7,463.5 861.0,464.5 863.6,464.9 865.8,466.5 868.2,467.6 870.9,467.7 873.5,467.9 876.0,468.8 878.3,470.0 880.7,471.0 882.6,472.9 884.4,474.9 887.0,476.0 888.5,478.4 890.8,479.8 893.1,481.2 895.3,482.9 897.1,484.8 899.2,486.5 901.9,486.5 904.5,485.5 907.2,485.6 909.8,484.7 912.3,483.8 915.1,483.9 917.7,483.4 920.2,484.2 922.9,483.4 925.3,484.5 927.8,484.9 930.2,486.2 932.7,486.8 935.4,486.1 937.8,487.5 940.4,487.7 943.1,487.1 945.5,488.0 947.8,489.3 950.5,490.0 952.1,492.6 954.6,493.7 956.7,495.4 959.1,496.6 961.5,497.7 964.0,498.8 966.8,498.6 969.3,497.6 971.7,496.1 974.6,496.3 977.0,494.6 979.7,494.2 982.5,494.2 984.6,496.0 987.8,496.1 990.1,497.6 992.5,499.0 994.1,501.7 997.2,501.8 999.8,502.9 1001.4,505.7 1004.1,506.5 1005.8,508.8 1005.5,511.9 1006.9,514.4 1007.6,517.1 1008.4,519.8 1010.3,522.0 1011.7,524.1 1012.9,526.4 1015.7,527.4 1016.0,530.3 1018.0,532.0 1019.2,534.3 1021.7,535.5 1022.2,538.3 1023.5,540.5 1025.7,542.0 1024.0,544.5 1022.5,546.8 1021.0,549.0 1019.8,551.4 1018.2,553.6 1018.1,556.4 1016.3,558.6 1019.0,562.5 1016.2,564.3 1015.1,566.7 1012.0,566.1 1010.3,568.4 1007.6,568.5 1006.9,572.7 1004.0,572.4 1002.2,574.4 999.4,574.4 997.2,575.7 999.6,577.3 1003.3,576.3 1005.4,578.4 1007.9,579.9 1009.2,583.7 1012.0,584.4 1015.1,584.6 1018.1,584.1 1019.6,587.6 1023.1,585.7 1024.8,588.6 1028.0,587.4 1030.7,587.7 1031.9,592.2 1035.3,590.3 1037.8,591.2 1039.2,595.3 1041.8,595.7 1045.1,594.1 1046.6,597.8 1049.7,596.9 1052.0,598.3 1055.2,597.2 1056.6,601.2 1059.7,600.2 1061.9,601.9 1064.1,604.0 1066.7,604.7 1070.2,603.2 1072.6,604.4 1075.5,604.6 1077.5,606.9 1075.7,609.4 1073.5,610.7 1070.6,610.8 1067.7,610.6 1066.4,614.0 1062.8,612.3 1061.0,614.7 1058.6,615.9 1055.4,614.8 1053.5,617.2 1051.4,618.9 1048.7,619.3 1046.3,620.2 1043.6,619.9 1041.8,623.3 1038.4,620.0 1036.9,624.7 1033.6,622.2 1031.1,622.5 1029.5,626.6 1026.2,623.9 1024.1,626.4 1021.4,626.1 1019.6,629.1 1017.1,629.6 1014.4,629.7 1011.1,627.0 1009.5,630.8 1006.4,629.1 1003.7,628.9 1001.7,631.4 999.0,629.6 996.5,632.4 993.9,632.6 991.3,632.0 988.6,631.1 986.2,634.2 983.4,631.6 980.8,631.6 978.2,631.5 975.8,635.3 973.0,631.5 970.5,633.6 973.5,634.8 974.1,637.7 974.5,640.6 974.9,643.6 978.5,644.4 979.4,647.0 976.7,648.8 977.2,651.9 977.2,654.7 976.2,657.2 975.8,659.9 975.2,662.6 973.9,664.9 970.7,666.5 970.5,669.3 967.3,668.0 965.9,672.3 963.5,673.6 959.7,670.4 957.7,673.1 955.4,674.5 953.0,676.0 950.0,675.2 947.2,675.1 945.1,677.4 942.6,678.4 940.6,680.7 936.9,677.9 934.9,680.4 932.4,682.6 929.7,680.7 927.0,679.3 924.5,682.5 921.7,680.0 919.1,679.2 916.5,680.7 913.8,680.2 911.4,683.3 908.7,682.0 906.1,683.4 903.3,680.4 900.8,683.0 898.2,682.4 895.4,680.1 892.8,680.9 890.3,682.6 887.9,680.3 885.1,682.5 882.6,682.1 880.1,680.9 877.4,681.8 874.8,682.5 872.3,681.8 869.6,682.8 867.1,681.6 864.7,678.8 862.1,678.7 859.5,680.0 856.8,680.4 854.2,680.9 851.6,681.9 849.1,680.9 846.6,678.5 844.1,677.9 841.4,680.0 838.9,678.0 836.3,677.8 833.7,678.0 831.2,678.0 828.6,677.4 825.9,679.0 823.4,678.2 821.1,676.9 818.3,678.4 816.0,677.1 813.7,675.5 811.2,675.5 808.4,676.9 806.4,673.7 803.7,674.6 801.2,674.5 798.4,676.6 796.2,673.9 793.6,674.8 791.4,672.6 788.8,673.2 786.5,671.2 783.9,671.6 781.6,670.6 778.9,671.5 776.3,670.5 774.8,667.9 772.8,666.0 770.8,664.1 767.4,664.2 766.4,660.9 764.2,659.2 761.5,658.3 760.0,655.7 756.6,655.9 756.1,652.6 752.8,652.0 750.9,650.1 747.9,649.3 748.1,645.3 746.5,643.1 743.2,642.5 740.6,642.3 738.2,641.0 735.7,640.6 733.1,640.2 730.3,642.3 728.1,639.4 725.4,639.9 722.9,639.2 720.2,640.0 717.8,638.8 715.3,637.8 712.7,638.1 710.2,637.4 707.3,640.1 704.8,639.2 702.4,637.7 700.0,636.4 697.2,638.0 694.9,635.6 692.3,635.5 689.7,635.8 687.3,638.1 684.5,636.5 682.0,637.8 679.4,638.8 676.7,638.7 674.0,638.2 671.5,639.0 668.8,639.3 666.3,640.2 663.5,638.6 660.9,639.2 658.2,638.5 655.6,638.8 653.1,640.7 650.2,638.0 647.9,642.2 645.1,640.3 642.6,640.9 640.1,641.7 637.6,641.3 635.2,642.8 632.4,639.8 630.0,642.0 627.6,643.7 624.9,641.3 622.6,643.8 619.9,642.0 617.5,643.1 614.9,642.2 612.2,640.8 609.8,641.6 607.4,643.5 604.7,642.0 602.3,642.9 599.8,644.3 597.4,645.5 594.7,643.7 592.2,644.0 589.6,642.5 587.2,644.7 584.9,642.3 582.1,643.5 579.3,644.2 577.0,641.5 573.9,645.0 571.4,644.2 569.0,641.8 566.5,641.3 563.6,643.0 561.3,640.5 558.8,639.0 556.0,640.3 553.5,639.4 551.4,637.9 548.7,637.3 546.6,635.7 545.9,631.8 542.3,632.7 541.4,629.2 539.1,628.0 536.1,627.9 533.7,626.9 531.1,627.6 529.0,624.2 526.2,626.0 523.7,626.0 521.1,626.1 519.0,622.9 516.2,624.7 513.6,625.3 511.2,624.2 508.5,625.4 506.3,622.9 503.7,623.4 501.1,623.7 498.9,621.3 496.4,620.8 493.4,624.0 491.2,621.4 488.6,622.2 486.4,619.0 483.9,619.4 481.1,621.4 478.7,620.0 476.0,618.3 473.8,616.3 474.8,611.6 470.5,611.2 469.4,608.3 466.8,608.0 464.3,608.8 461.6,608.2 459.1,608.5 456.5,608.1 454.1,611.0 451.3,608.4 448.9,610.6 446.2,609.7 443.7,610.7 441.2,611.1 438.5,610.2 436.0,610.7 433.4,611.3 430.7,609.8 428.2,610.7 425.8,613.3 423.1,611.4 420.3,611.4 418.2,609.5 416.6,606.6 414.2,605.7 411.2,606.1 407.9,607.2 406.8,603.1 403.8,603.5 401.5,602.2 399.5,600.6 397.6,598.8 395.2,597.7 392.7,597.0 391.4,594.0 388.0,594.7 386.1,592.9 383.4,593.4 380.6,591.4 377.9,594.2 375.1,593.8 372.4,591.4 369.6,594.8 366.9,591.4 364.1,592.0 361.4,592.9 358.7,592.7 356.0,592.9 353.7,590.4 351.1,589.3 347.9,592.2 345.5,590.3 342.9,589.8 345.1,588.3 347.0,586.4 348.6,584.1 350.1,581.8 353.4,581.5 356.1,580.6 356.1,576.4 358.6,575.2 361.4,574.4 358.8,573.0 356.3,573.1 353.7,573.7 351.1,576.5 348.6,573.4 346.0,574.4 344.9,571.2 342.8,569.7 339.9,569.4 336.1,570.4 335.8,566.1 332.1,567.0 330.6,564.5 328.1,563.5 325.7,561.7 323.0,562.4 320.0,564.5 317.5,563.4 315.1,562.1 312.3,560.5 309.8,564.0 307.0,562.2 304.3,563.2 301.7,564.5 298.9,562.7 296.3,565.4 293.5,563.6 291.6,566.1 288.8,565.9 286.8,568.1 284.3,569.1 281.2,568.2 279.4,570.3 277.2,572.3 275.2,574.3 275.0,577.5 272.7,579.8 269.7,579.3 267.1,580.6 264.1,580.2 261.5,581.4 258.3,580.3 256.3,583.5 253.4,583.7 250.4,585.2 248.1,582.1 245.1,584.1 242.7,581.6 239.9,581.7 237.5,579.6 234.5,580.7 231.8,580.6 229.6,582.1 228.9,585.0 226.1,586.0 225.2,588.7 222.6,589.8 219.8,589.2 217.4,590.8 215.2,592.9 212.5,593.0 209.8,592.9 206.9,591.9 204.9,594.8 201.8,593.0 199.3,593.8 197.2,596.8 194.1,594.8 191.7,596.0 189.4,598.1 186.8,598.2 184.1,596.4 181.8,598.3 178.9,595.8 176.6,597.8 174.2,598.7 171.4,597.0 169.3,600.6 166.4,597.8 164.0,599.1 160.8,599.7 158.7,598.1 157.9,593.8 155.1,593.7 151.8,594.4 149.3,593.6 148.7,589.1 145.4,589.8"/></clipPath>
<polygon points="143.6,573.9 145.8,572.1 148.5,571.3 151.2,570.6 153.8,569.5 156.7,569.2 159.3,568.2 162.1,567.7 164.6,565.9 167.4,565.0 170.6,565.9 173.2,564.5 175.0,562.3 177.2,560.4 180.3,559.7 181.8,557.1 184.0,555.3 186.7,554.7 188.8,552.8 191.4,551.8 193.4,549.7 196.3,549.3 198.9,548.5 201.0,546.6 203.4,545.8 206.0,545.3 208.3,544.4 210.3,542.4 213.2,542.8 215.5,541.6 217.7,540.2 219.9,538.9 222.6,538.9 225.5,537.8 227.5,535.5 230.2,534.3 232.9,532.9 234.9,530.6 237.6,530.4 240.2,530.2 242.6,528.7 245.8,530.5 248.8,532.7 251.4,532.5 253.6,531.1 256.3,531.3 258.7,530.5 260.7,528.2 263.2,527.5 265.8,527.5 268.1,526.2 271.0,527.0 273.2,525.2 275.7,524.9 278.0,523.6 280.6,523.3 283.0,522.3 285.5,521.5 288.1,521.3 290.5,520.4 293.0,519.9 295.6,519.8 298.0,518.6 300.6,518.4 303.0,517.5 305.5,517.1 307.8,515.8 310.0,514.1 312.8,514.7 315.1,513.3 317.9,513.6 320.4,512.9 322.9,511.6 325.5,511.2 327.8,509.7 330.7,510.2 333.2,509.1 335.6,507.9 338.1,506.9 341.0,507.8 343.7,507.5 346.0,505.9 348.4,504.4 351.3,505.0 353.7,503.6 356.1,502.4 358.8,501.9 361.6,502.1 364.2,501.6 366.4,499.3 369.2,499.7 371.5,497.9 374.4,498.4 376.9,497.3 379.1,496.0 381.9,496.0 384.4,495.2 386.4,493.3 389.1,493.2 391.0,490.9 393.2,489.5 395.9,489.5 397.9,487.4 400.4,486.7 402.9,486.1 405.4,485.5 407.7,484.3 409.9,482.9 412.2,481.9 415.1,482.6 417.1,480.8 419.9,481.2 422.2,480.3 424.3,478.6 426.7,477.9 429.1,477.3 431.6,476.7 433.9,475.9 436.3,475.0 438.6,474.1 441.1,473.3 443.7,472.9 445.7,471.0 448.0,469.9 450.6,469.4 452.6,467.5 455.0,466.6 457.9,466.8 459.9,464.9 462.3,464.0 464.3,461.9 467.0,461.7 469.4,460.8 471.8,460.1 473.8,458.1 476.6,458.4 479.0,457.5 481.0,455.6 483.7,455.8 486.0,454.6 488.5,454.1 490.7,452.6 493.3,452.4 495.7,451.6 497.6,449.4 500.3,449.4 502.3,447.5 505.2,447.6 507.8,447.0 509.6,444.7 512.1,444.0 514.6,443.2 516.8,441.6 519.2,440.6 521.5,439.4 524.0,438.5 526.5,437.8 528.7,436.2 531.2,435.5 533.5,434.3 536.1,434.1 538.0,431.8 540.7,431.8 543.2,431.2 545.3,429.5 547.6,428.4 550.4,428.5 552.3,426.5 554.7,425.5 557.2,425.0 559.8,424.5 562.0,423.2 564.1,421.6 566.6,421.2 569.0,420.4 571.7,420.5 573.8,418.9 576.5,418.9 578.4,416.8 580.9,416.2 583.5,416.0 586.0,415.6 588.1,414.0 590.3,412.7 592.9,412.4 595.0,410.9 597.7,410.8 599.8,409.3 602.6,409.7 605.0,408.9 606.9,406.8 609.3,406.2 612.1,406.3 614.3,405.2 616.8,404.7 618.9,403.0 621.1,401.7 623.7,401.6 625.9,400.4 628.6,400.5 630.7,398.7 633.1,398.0 635.5,397.3 637.9,396.5 640.3,395.6 643.0,395.7 644.9,393.5 647.1,392.4 650.1,393.3 652.5,392.3 654.6,390.8 657.0,390.8 659.4,392.5 662.4,392.2 664.9,394.0 667.8,393.9 670.0,395.5 673.0,395.0 675.2,396.9 677.7,397.9 680.3,398.4 682.9,399.0 685.6,399.4 688.0,400.3 690.6,400.9 693.3,401.4 695.5,403.1 696.4,405.8 698.0,408.1 698.6,410.9 701.0,412.4 704.2,411.8 706.3,414.3 709.1,414.8 711.5,416.1 714.2,416.9 717.1,417.0 719.2,418.7 721.8,419.1 724.6,419.0 726.4,421.3 729.2,421.2 731.5,422.4 733.6,424.0 736.1,424.7 738.6,425.4 740.5,427.4 743.2,427.7 745.7,428.2 748.0,429.4 750.6,429.8 752.6,431.8 755.2,431.9 757.4,433.4 760.1,433.4 762.6,434.0 764.8,435.5 767.0,436.8 769.6,437.1 772.3,437.4 774.3,439.5 776.7,440.7 779.3,441.4 781.7,442.3 784.8,441.7 786.8,443.8 789.1,445.1 792.1,444.5 794.3,446.3 797.0,446.9 799.6,447.9 802.0,449.5 804.6,450.3 807.2,451.4 809.7,452.5 811.8,454.2 814.8,453.9 817.0,455.2 819.3,456.5 821.6,457.6 824.0,458.7 825.5,461.5 828.2,461.8 830.8,462.1 833.0,460.1 835.6,460.5 838.1,459.7 840.6,459.6 843.3,459.9 845.8,460.5 848.2,461.7 850.8,462.2 853.5,462.4 856.0,463.3 858.7,463.5 861.0,464.5 863.6,464.9 865.8,466.5 868.2,467.6 870.9,467.7 873.5,467.9 876.0,468.8 878.3,470.0 880.7,471.0 882.6,472.9 884.4,474.9 887.0,476.0 888.5,478.4 890.8,479.8 893.1,481.2 895.3,482.9 897.1,484.8 899.2,486.5 901.9,486.5 904.5,485.5 907.2,485.6 909.8,484.7 912.3,483.8 915.1,483.9 917.7,483.4 920.2,484.2 922.9,483.4 925.3,484.5 927.8,484.9 930.2,486.2 932.7,486.8 935.4,486.1 937.8,487.5 940.4,487.7 943.1,487.1 945.5,488.0 947.8,489.3 950.5,490.0 952.1,492.6 954.6,493.7 956.7,495.4 959.1,496.6 961.5,497.7 964.0,498.8 966.8,498.6 969.3,497.6 971.7,496.1 974.6,496.3 977.0,494.6 979.7,494.2 982.5,494.2 984.6,496.0 987.8,496.1 990.1,497.6 992.5,499.0 994.1,501.7 997.2,501.8 999.8,502.9 1001.4,505.7 1004.1,506.5 1005.8,508.8 1005.5,511.9 1006.9,514.4 1007.6,517.1 1008.4,519.8 1010.3,522.0 1011.7,524.1 1012.9,526.4 1015.7,527.4 1016.0,530.3 1018.0,532.0 1019.2,534.3 1021.7,535.5 1022.2,538.3 1023.5,540.5 1025.7,542.0 1024.0,544.5 1022.5,546.8 1021.0,549.0 1019.8,551.4 1018.2,553.6 1018.1,556.4 1016.3,558.6 1019.0,562.5 1016.2,564.3 1015.1,566.7 1012.0,566.1 1010.3,568.4 1007.6,568.5 1006.9,572.7 1004.0,572.4 1002.2,574.4 999.4,574.4 997.2,575.7 999.6,577.3 1003.3,576.3 1005.4,578.4 1007.9,579.9 1009.2,583.7 1012.0,584.4 1015.1,584.6 1018.1,584.1 1019.6,587.6 1023.1,585.7 1024.8,588.6 1028.0,587.4 1030.7,587.7 1031.9,592.2 1035.3,590.3 1037.8,591.2 1039.2,595.3 1041.8,595.7 1045.1,594.1 1046.6,597.8 1049.7,596.9 1052.0,598.3 1055.2,597.2 1056.6,601.2 1059.7,600.2 1061.9,601.9 1064.1,604.0 1066.7,604.7 1070.2,603.2 1072.6,604.4 1075.5,604.6 1077.5,606.9 1075.7,609.4 1073.5,610.7 1070.6,610.8 1067.7,610.6 1066.4,614.0 1062.8,612.3 1061.0,614.7 1058.6,615.9 1055.4,614.8 1053.5,617.2 1051.4,618.9 1048.7,619.3 1046.3,620.2 1043.6,619.9 1041.8,623.3 1038.4,620.0 1036.9,624.7 1033.6,622.2 1031.1,622.5 1029.5,626.6 1026.2,623.9 1024.1,626.4 1021.4,626.1 1019.6,629.1 1017.1,629.6 1014.4,629.7 1011.1,627.0 1009.5,630.8 1006.4,629.1 1003.7,628.9 1001.7,631.4 999.0,629.6 996.5,632.4 993.9,632.6 991.3,632.0 988.6,631.1 986.2,634.2 983.4,631.6 980.8,631.6 978.2,631.5 975.8,635.3 973.0,631.5 970.5,633.6 973.5,634.8 974.1,637.7 974.5,640.6 974.9,643.6 978.5,644.4 979.4,647.0 976.7,648.8 977.2,651.9 977.2,654.7 976.2,657.2 975.8,659.9 975.2,662.6 973.9,664.9 970.7,666.5 970.5,669.3 967.3,668.0 965.9,672.3 963.5,673.6 959.7,670.4 957.7,673.1 955.4,674.5 953.0,676.0 950.0,675.2 947.2,675.1 945.1,677.4 942.6,678.4 940.6,680.7 936.9,677.9 934.9,680.4 932.4,682.6 929.7,680.7 927.0,679.3 924.5,682.5 921.7,680.0 919.1,679.2 916.5,680.7 913.8,680.2 911.4,683.3 908.7,682.0 906.1,683.4 903.3,680.4 900.8,683.0 898.2,682.4 895.4,680.1 892.8,680.9 890.3,682.6 887.9,680.3 885.1,682.5 882.6,682.1 880.1,680.9 877.4,681.8 874.8,682.5 872.3,681.8 869.6,682.8 867.1,681.6 864.7,678.8 862.1,678.7 859.5,680.0 856.8,680.4 854.2,680.9 851.6,681.9 849.1,680.9 846.6,678.5 844.1,677.9 841.4,680.0 838.9,678.0 836.3,677.8 833.7,678.0 831.2,678.0 828.6,677.4 825.9,679.0 823.4,678.2 821.1,676.9 818.3,678.4 816.0,677.1 813.7,675.5 811.2,675.5 808.4,676.9 806.4,673.7 803.7,674.6 801.2,674.5 798.4,676.6 796.2,673.9 793.6,674.8 791.4,672.6 788.8,673.2 786.5,671.2 783.9,671.6 781.6,670.6 778.9,671.5 776.3,670.5 774.8,667.9 772.8,666.0 770.8,664.1 767.4,664.2 766.4,660.9 764.2,659.2 761.5,658.3 760.0,655.7 756.6,655.9 756.1,652.6 752.8,652.0 750.9,650.1 747.9,649.3 748.1,645.3 746.5,643.1 743.2,642.5 740.6,642.3 738.2,641.0 735.7,640.6 733.1,640.2 730.3,642.3 728.1,639.4 725.4,639.9 722.9,639.2 720.2,640.0 717.8,638.8 715.3,637.8 712.7,638.1 710.2,637.4 707.3,640.1 704.8,639.2 702.4,637.7 700.0,636.4 697.2,638.0 694.9,635.6 692.3,635.5 689.7,635.8 687.3,638.1 684.5,636.5 682.0,637.8 679.4,638.8 676.7,638.7 674.0,638.2 671.5,639.0 668.8,639.3 666.3,640.2 663.5,638.6 660.9,639.2 658.2,638.5 655.6,638.8 653.1,640.7 650.2,638.0 647.9,642.2 645.1,640.3 642.6,640.9 640.1,641.7 637.6,641.3 635.2,642.8 632.4,639.8 630.0,642.0 627.6,643.7 624.9,641.3 622.6,643.8 619.9,642.0 617.5,643.1 614.9,642.2 612.2,640.8 609.8,641.6 607.4,643.5 604.7,642.0 602.3,642.9 599.8,644.3 597.4,645.5 594.7,643.7 592.2,644.0 589.6,642.5 587.2,644.7 584.9,642.3 582.1,643.5 579.3,644.2 577.0,641.5 573.9,645.0 571.4,644.2 569.0,641.8 566.5,641.3 563.6,643.0 561.3,640.5 558.8,639.0 556.0,640.3 553.5,639.4 551.4,637.9 548.7,637.3 546.6,635.7 545.9,631.8 542.3,632.7 541.4,629.2 539.1,628.0 536.1,627.9 533.7,626.9 531.1,627.6 529.0,624.2 526.2,626.0 523.7,626.0 521.1,626.1 519.0,622.9 516.2,624.7 513.6,625.3 511.2,624.2 508.5,625.4 506.3,622.9 503.7,623.4 501.1,623.7 498.9,621.3 496.4,620.8 493.4,624.0 491.2,621.4 488.6,622.2 486.4,619.0 483.9,619.4 481.1,621.4 478.7,620.0 476.0,618.3 473.8,616.3 474.8,611.6 470.5,611.2 469.4,608.3 466.8,608.0 464.3,608.8 461.6,608.2 459.1,608.5 456.5,608.1 454.1,611.0 451.3,608.4 448.9,610.6 446.2,609.7 443.7,610.7 441.2,611.1 438.5,610.2 436.0,610.7 433.4,611.3 430.7,609.8 428.2,610.7 425.8,613.3 423.1,611.4 420.3,611.4 418.2,609.5 416.6,606.6 414.2,605.7 411.2,606.1 407.9,607.2 406.8,603.1 403.8,603.5 401.5,602.2 399.5,600.6 397.6,598.8 395.2,597.7 392.7,597.0 391.4,594.0 388.0,594.7 386.1,592.9 383.4,593.4 380.6,591.4 377.9,594.2 375.1,593.8 372.4,591.4 369.6,594.8 366.9,591.4 364.1,592.0 361.4,592.9 358.7,592.7 356.0,592.9 353.7,590.4 351.1,589.3 347.9,592.2 345.5,590.3 342.9,589.8 345.1,588.3 347.0,586.4 348.6,584.1 350.1,581.8 353.4,581.5 356.1,580.6 356.1,576.4 358.6,575.2 361.4,574.4 358.8,573.0 356.3,573.1 353.7,573.7 351.1,576.5 348.6,573.4 346.0,574.4 344.9,571.2 342.8,569.7 339.9,569.4 336.1,570.4 335.8,566.1 332.1,567.0 330.6,564.5 328.1,563.5 325.7,561.7 323.0,562.4 320.0,564.5 317.5,563.4 315.1,562.1 312.3,560.5 309.8,564.0 307.0,562.2 304.3,563.2 301.7,564.5 298.9,562.7 296.3,565.4 293.5,563.6 291.6,566.1 288.8,565.9 286.8,568.1 284.3,569.1 281.2,568.2 279.4,570.3 277.2,572.3 275.2,574.3 275.0,577.5 272.7,579.8 269.7,579.3 267.1,580.6 264.1,580.2 261.5,581.4 258.3,580.3 256.3,583.5 253.4,583.7 250.4,585.2 248.1,582.1 245.1,584.1 242.7,581.6 239.9,581.7 237.5,579.6 234.5,580.7 231.8,580.6 229.6,582.1 228.9,585.0 226.1,586.0 225.2,588.7 222.6,589.8 219.8,589.2 217.4,590.8 215.2,592.9 212.5,593.0 209.8,592.9 206.9,591.9 204.9,594.8 201.8,593.0 199.3,593.8 197.2,596.8 194.1,594.8 191.7,596.0 189.4,598.1 186.8,598.2 184.1,596.4 181.8,598.3 178.9,595.8 176.6,597.8 174.2,598.7 171.4,597.0 169.3,600.6 166.4,597.8 164.0,599.1 160.8,599.7 158.7,598.1 157.9,593.8 155.1,593.7 151.8,594.4 149.3,593.6 148.7,589.1 145.4,589.8" fill="#1c8320"/>
<polygon points="1050.4,562.1 1052.0,560.0 1053.4,557.8 1054.5,555.3 1057.9,554.7 1057.6,551.0 1060.4,550.0 1063.0,548.7 1062.7,545.1 1065.5,544.0 1067.3,542.1 1067.6,539.0 1070.1,537.6 1072.0,535.8 1075.0,536.9 1078.2,536.7 1081.3,537.4 1082.8,539.7 1085.9,540.2 1087.8,542.1 1090.0,543.6 1091.2,546.2 1092.3,548.9 1095.0,550.0 1096.6,552.1 1099.3,553.0 1100.6,555.6 1103.9,555.9 1105.5,558.1 1106.7,560.7 1109.0,562.1 1111.0,564.2 1113.8,565.0 1116.7,565.7 1118.7,567.7 1121.1,569.1 1123.3,570.8 1124.8,573.6 1127.6,574.4 1125.5,576.1 1122.4,575.1 1120.0,576.0 1118.0,578.0 1117.0,581.2 1114.3,582.9 1112.0,585.0 1114.4,587.3 1117.7,588.7 1119.0,592.0 1117.2,594.5 1114.1,595.9 1113.0,599.0 1110.4,600.0 1107.9,598.4 1105.2,599.7 1102.7,598.2 1100.2,597.1 1097.5,599.0 1095.0,598.0 1092.0,598.4 1089.5,597.2 1087.5,594.9 1084.5,595.3 1082.0,594.2 1080.0,592.0 1081.1,589.1 1083.3,586.7 1083.0,583.4 1084.3,580.6 1081.8,579.8 1079.6,578.0 1076.5,578.4 1074.7,576.0 1071.8,576.0 1069.9,573.7 1067.9,571.6 1064.4,573.0 1062.6,570.5 1060.2,569.2 1057.2,569.4 1055.0,567.9 1053.4,564.9 1050.4,565.1 1050.4,562.1" fill="#168018"/>
<g clip-path="url(#cGreen)">
<ellipse cx="665" cy="425" rx="55" ry="28" transform="rotate(-15 665 425)" fill="#4a9a5a" opacity="0.9" filter="url(#b10)"/>
<ellipse cx="650" cy="595" rx="170" ry="60" transform="rotate(0 650 595)" fill="#44995a" opacity="0.75" filter="url(#b20)"/>
<ellipse cx="660" cy="545" rx="90" ry="50" transform="rotate(0 660 545)" fill="#5aa878" opacity="0.5" filter="url(#b20)"/>
<ellipse cx="600" cy="620" rx="90" ry="20" transform="rotate(-5 600 620)" fill="#36924a" opacity="0.5" filter="url(#b10)"/>
<ellipse cx="600" cy="440" rx="70" ry="25" transform="rotate(-20 600 440)" fill="#3a9448" opacity="0.6" filter="url(#b10)"/>
<ellipse cx="740" cy="455" rx="60" ry="25" transform="rotate(20 740 455)" fill="#2f8e3c" opacity="0.7" filter="url(#b10)"/>
<ellipse cx="515" cy="488" rx="40" ry="20" transform="rotate(-15 515 488)" fill="#42985a" opacity="0.8" filter="url(#b5)"/>
<ellipse cx="470" cy="540" rx="70" ry="16" transform="rotate(-12 470 540)" fill="#2c8c36" opacity="0.7" filter="url(#b5)"/>
<ellipse cx="480" cy="570" rx="60" ry="14" transform="rotate(-10 480 570)" fill="#339040" opacity="0.7" filter="url(#b5)"/>
<ellipse cx="455" cy="532" rx="35" ry="10" transform="rotate(-10 455 532)" fill="#0a780a" opacity="0.7" filter="url(#b5)"/>
<ellipse cx="690" cy="478" rx="28" ry="34" transform="rotate(10 690 478)" fill="#0a760a" opacity="0.7" filter="url(#b10)"/>
<ellipse cx="560" cy="545" rx="45" ry="30" transform="rotate(-30 560 545)" fill="#0c780c" opacity="0.5" filter="url(#b10)"/>
<ellipse cx="775" cy="540" rx="40" ry="14" transform="rotate(-5 775 540)" fill="#339042" opacity="0.75" filter="url(#b5)"/>
<ellipse cx="845" cy="565" rx="45" ry="18" transform="rotate(-10 845 565)" fill="#3a9448" opacity="0.75" filter="url(#b5)"/>
<ellipse cx="860" cy="545" rx="65" ry="22" transform="rotate(0 860 545)" fill="#0a780a" opacity="0.6" filter="url(#b5)"/>
<ellipse cx="950" cy="525" rx="30" ry="16" transform="rotate(-20 950 525)" fill="#3a9448" opacity="0.7" filter="url(#b5)"/>
<ellipse cx="985" cy="555" rx="30" ry="18" transform="rotate(-30 985 555)" fill="#0a780a" opacity="0.6" filter="url(#b5)"/>
<ellipse cx="990" cy="520" rx="25" ry="18" transform="rotate(-40 990 520)" fill="#2e8c38" opacity="0.7" filter="url(#b5)"/>
<ellipse cx="850" cy="618" rx="110" ry="10" transform="rotate(3 850 618)" fill="#2f8e3c" opacity="0.7" filter="url(#b5)"/>
<ellipse cx="860" cy="650" rx="120" ry="22" transform="rotate(3 860 650)" fill="#148016" opacity="0.6" filter="url(#b5)"/>
<ellipse cx="760" cy="500" rx="50" ry="18" transform="rotate(25 760 500)" fill="#2a8a34" opacity="0.6" filter="url(#b10)"/>
<ellipse cx="900" cy="505" rx="40" ry="15" transform="rotate(10 900 505)" fill="#2a8a34" opacity="0.5" filter="url(#b10)"/>
<ellipse cx="300" cy="548" rx="90" ry="18" transform="rotate(-15 300 548)" fill="#1e841f" opacity="0.6" filter="url(#b10)"/>
<ellipse cx="240" cy="560" rx="40" ry="15" transform="rotate(-15 240 560)" fill="#0c7a0e" opacity="0.5" filter="url(#b5)"/>
<ellipse cx="1075" cy="560" rx="18" ry="14" transform="rotate(0 1075 560)" fill="#2e8c38" opacity="0.6" filter="url(#b5)"/>
</g>
<defs><radialGradient id="gMtn" gradientUnits="userSpaceOnUse" cx="648" cy="492" r="165" gradientTransform="translate(645 495) scale(1 0.85) translate(-645 -495)"><stop offset="0" stop-color="#9ec9c4"/><stop offset="0.2" stop-color="#90c2b4"/><stop offset="0.45" stop-color="#72b290"/><stop offset="0.7" stop-color="#52a066"/><stop offset="0.88" stop-color="#3e9650" stop-opacity="0.8"/><stop offset="1" stop-color="#3a9450" stop-opacity="0"/></radialGradient></defs>
<g clip-path="url(#cGreen)"><polygon points="505.0,605.0 524.2,590.5 548.4,573.6 572.6,556.6 591.9,534.9 601.6,515.5 616.1,496.1 630.0,486.0 647.6,483.6 659.7,488.9 679.0,505.8 693.6,522.8 712.9,537.3 729.9,549.4 754.0,566.3 790.0,592.0 800.0,620.0 650.0,650.0" fill="url(#gMtn)"/></g>
<polyline points="478.0,667.0 490.0,661.0 505.0,656.0 520.0,652.0 535.0,650.0 548.0,647.0 552.0,651.0 543.0,660.0 530.0,664.0 515.0,668.0 500.0,674.0 478.0,667.0" fill="none" stroke="#a0a68c" stroke-width="7" opacity="0.6" filter="url(#b2)"/>
<polygon points="478.0,667.0 479.6,665.2 482.2,665.4 484.2,664.3 486.0,663.0 487.7,661.3 490.0,661.0 492.4,661.0 494.5,660.3 496.4,658.9 498.6,658.2 500.5,656.8 502.4,655.5 505.0,656.0 507.1,655.1 509.3,655.1 511.1,653.2 513.8,654.5 515.5,652.5 517.7,651.9 520.0,652.0 522.0,650.5 524.5,652.7 526.5,651.8 528.7,651.8 530.8,650.9 532.7,649.1 535.0,650.0 537.1,649.1 539.3,649.0 541.3,647.5 543.9,649.1 545.8,647.2 548.0,647.0 550.6,648.4 552.0,651.0 549.9,651.9 549.7,654.7 546.7,654.7 546.1,657.1 544.4,658.4 543.0,660.0 541.0,661.1 538.7,661.4 536.7,662.8 534.7,663.8 531.9,662.4 530.0,664.0 528.0,665.2 525.5,664.4 523.8,666.4 521.1,665.1 519.0,665.9 517.0,666.8 515.0,668.0 512.9,668.1 511.2,669.3 509.2,669.7 507.9,671.9 505.6,671.8 503.4,671.7 502.2,674.0 500.0,674.0 498.3,672.3 496.3,671.8 493.9,672.3 491.9,671.8 490.0,670.9 487.9,670.5 486.4,668.3 483.9,669.2 481.6,669.4 479.7,668.6 478.0,667.0" fill="#137e16"/>
<line x1="668.2" y1="962" x2="668.2" y2="1060" stroke="#a8a8c0" stroke-width="0.8" opacity="0.45"/>
<path d="M807 545 l3 -2 l1 8 l-5 0 z" fill="#8a0000"/></svg>
</div>
<svg style="position:absolute;left:1306px;top:102px" width="202" height="102" viewBox="1306 102 202 102">
<rect x="1306" y="102" width="202" height="102" fill="#fafafa"/>
<defs><linearGradient id="pg1" x1="0" y1="0" x2="0" y2="1"><stop offset="0" stop-color="#8d9c79"/><stop offset="0.45" stop-color="#7c7c66"/><stop offset="1" stop-color="#5a484e"/></linearGradient>
<linearGradient id="pr1" x1="0" y1="0" x2="0" y2="1"><stop offset="0" stop-color="#6c0000"/><stop offset="0.7" stop-color="#720000"/><stop offset="1" stop-color="#880000"/></linearGradient></defs>
<rect x="1307" y="103" width="200" height="100" fill="#eeeeee"/>
<polygon points="1308.0,147.5 1325.0,147.5 1308.0,166.5" fill="#dde2e4"/>
<polygon points="1325.0,147.5 1506.0,147.5 1506.0,203.0 1308.0,203.0 1308.0,166.5" fill="url(#pg1)"/>
<polygon points="1325.0,147.5 1330.0,144.5 1340.0,143.8 1350.0,141.5 1356.0,138.5 1362.0,142.0 1372.0,144.5 1376.0,146.5 1384.0,145.0 1390.0,137.6 1396.0,141.5 1403.6,137.3 1410.0,141.0 1416.0,142.0 1421.5,139.9 1428.0,143.5 1440.0,144.5 1452.0,143.8 1462.0,137.8 1470.0,141.5 1482.0,141.0 1495.0,139.0 1506.0,135.2 1506.0,148.0 1325.0,148.0" fill="#117c12"/>
<polygon points="1308.0,191.8 1318.0,193.5 1329.6,195.2 1345.0,194.0 1370.0,192.0 1400.0,190.5 1440.0,188.0 1470.0,186.0 1506.0,184.8 1506.0,203.0 1308.0,203.0" fill="url(#pr1)"/>
<line x1="1387.5" y1="146" x2="1387.5" y2="172.5" stroke="#3c3c3c" stroke-width="1" fill="none"/>
<line x1="1446.5" y1="144" x2="1446.5" y2="182.5" stroke="#3c3c3c" stroke-width="1" fill="none"/>
<line x1="1387.5" y1="163.5" x2="1446.5" y2="163.5" stroke="#3c3c3c" stroke-width="1" fill="none"/>
<line x1="1387.5" y1="172.5" x2="1446.5" y2="172.5" stroke="#3c3c3c" stroke-width="1" fill="none"/>
<line x1="1407" y1="182.5" x2="1446.5" y2="182.5" stroke="#3c3c3c" stroke-width="1" fill="none"/>
<rect x="1307.5" y="103.5" width="199" height="99" fill="none" stroke="#000" stroke-width="1"/>
</svg>
<svg style="position:absolute;left:1306px;top:255px" width="202" height="202" viewBox="1306 255 202 202">
<rect x="1306" y="255" width="202" height="202" fill="#fafafa"/>
<rect x="1307" y="256" width="200" height="200" fill="#7e836a"/>
<polygon points="1307.6,322.3 1313.3,326.4 1309.9,331.0 1317.9,333.3 1327.1,336.8 1329.4,342.5 1323.6,347.1 1327.1,353.9 1325.9,365.4 1334.0,373.4 1340.8,374.6 1354.6,376.9 1363.7,382.6 1370.6,388.3 1378.6,394.0 1374.1,396.3 1360.3,397.5 1366.0,406.6 1363.7,413.5 1370.6,419.3 1374.1,425.0 1382.1,430.7 1386.7,434.2 1395.8,441.0 1402.7,445.6 1414.2,450.2 1423.3,453.6 1432.5,452.5 1443.9,451.3 1455.4,452.5 1462.3,454.8 1462.3,456.0 1307.0,456.0 1307.0,322.3" fill="#e3e5e6"/>
<line x1="1407.0" y1="297" x2="1407.0" y2="317" stroke="#3c3c3c" stroke-width="1" fill="none"/>
<line x1="1416.9" y1="297" x2="1416.9" y2="317" stroke="#3c3c3c" stroke-width="1" fill="none"/>
<line x1="1427.0" y1="297" x2="1427.0" y2="317" stroke="#3c3c3c" stroke-width="1" fill="none"/>
<line x1="1436.8" y1="297" x2="1436.8" y2="317" stroke="#3c3c3c" stroke-width="1" fill="none"/>
<line x1="1406.5" y1="316.5" x2="1466.5" y2="316.5" stroke="#3c3c3c" stroke-width="1" fill="none"/>
<line x1="1446.5" y1="316.5" x2="1446.5" y2="376" stroke="#3c3c3c" stroke-width="1" fill="none"/>
<line x1="1426" y1="326.5" x2="1466.5" y2="326.5" stroke="#3c3c3c" stroke-width="1" fill="none"/>
<line x1="1426" y1="336.5" x2="1466.5" y2="336.5" stroke="#3c3c3c" stroke-width="1" fill="none"/>
<line x1="1426" y1="346.5" x2="1466.5" y2="346.5" stroke="#3c3c3c" stroke-width="1" fill="none"/>
<line x1="1426" y1="356.5" x2="1466.5" y2="356.5" stroke="#3c3c3c" stroke-width="1" fill="none"/>
<line x1="1426" y1="366.5" x2="1466.5" y2="366.5" stroke="#3c3c3c" stroke-width="1" fill="none"/>
<rect x="1307.5" y="256.5" width="199" height="199" fill="none" stroke="#000" stroke-width="1"/>
</svg>
<svg style="position:absolute;left:1306px;top:508px" width="202" height="102" viewBox="1306 508 202 102">
<rect x="1306" y="508" width="202" height="102" fill="#fafafa"/>
<defs><linearGradient id="pg3" x1="0" y1="0" x2="0" y2="1"><stop offset="0" stop-color="#8d9c79"/><stop offset="0.45" stop-color="#7c7c66"/><stop offset="1" stop-color="#5a484e"/></linearGradient>
<linearGradient id="pr3" x1="0" y1="0" x2="0" y2="1"><stop offset="0" stop-color="#6c0000"/><stop offset="0.7" stop-color="#720000"/><stop offset="1" stop-color="#880000"/></linearGradient></defs>
<rect x="1307" y="509" width="200" height="100" fill="#eeeeee"/>
<polygon points="1308.0,553.4 1351.0,553.4 1343.0,559.8 1336.6,563.0 1322.2,561.3 1308.0,567.0" fill="#dde2e4"/>
<polygon points="1308.0,567.0 1322.2,561.3 1336.6,563.0 1343.0,559.8 1351.0,554.2 1506.0,554.2 1506.0,609.0 1308.0,609.0" fill="url(#pg3)"/>
<polygon points="1351.0,554.6 1356.0,549.0 1360.6,546.2 1366.0,548.5 1370.2,552.6 1373.4,554.6 1376.0,550.0 1379.0,547.0 1382.0,550.0 1384.6,551.0 1388.0,549.0 1391.8,546.2 1396.0,544.5 1402.1,542.6 1410.0,545.0 1422.9,549.4 1435.0,551.0 1446.9,551.0 1455.0,548.0 1462.9,543.0 1475.0,544.0 1491.7,543.0 1506.0,543.8 1506.0,554.6" fill="#117c12"/>
<polygon points="1308.0,596.5 1330.0,597.0 1359.0,598.1 1390.0,597.0 1422.9,595.7 1460.0,593.5 1506.0,591.7 1506.0,609.0 1308.0,609.0" fill="url(#pr3)"/>
<line x1="1446.5" y1="551" x2="1446.5" y2="588.5" stroke="#3c3c3c" stroke-width="1" fill="none"/>
<line x1="1407" y1="569" x2="1466.5" y2="569" stroke="#3c3c3c" stroke-width="1" fill="none"/>
<line x1="1387" y1="578.5" x2="1466.5" y2="578.5" stroke="#3c3c3c" stroke-width="1" fill="none"/>
<line x1="1426.5" y1="588.5" x2="1466.5" y2="588.5" stroke="#3c3c3c" stroke-width="1" fill="none"/>
<rect x="1307.5" y="509.5" width="199" height="99" fill="none" stroke="#000" stroke-width="1"/>
</svg>
<div class="cb" style="left:1307px;top:59px"></div>
<div class="t" style="left:1326px;top:58.8px;">Slice volume on X axis</div>
<div class="sl" style="left:1308px;top:87.0px;width:198px"><div class="f" style="width:137px"></div><div class="h" style="left:128.5px"></div></div>
<div class="cb" style="left:1307px;top:212px"></div>
<div class="t" style="left:1326px;top:211.8px;">Slice volume on Y axis</div>
<div class="sl" style="left:1308px;top:239.5px;width:198px"><div class="f" style="width:119px"></div><div class="h" style="left:110.5px"></div></div>
<div class="cb" style="left:1307px;top:465px"></div>
<div class="t" style="left:1326px;top:464.8px;">Slice volume on Z axis</div>
<div class="sl" style="left:1308px;top:493.0px;width:198px"><div class="f" style="width:137px"></div><div class="h" style="left:128.5px"></div></div>
<div class="cb" style="left:1307px;top:618px"></div>
<div class="t" style="left:1326px;top:617.8px;">Draw slice frames</div>
<div class="cb" style="left:1513px;top:59px"></div>
<div class="t" style="left:1532px;top:58.8px;">Show FPS</div>
<div class="t" style="left:1513px;top:102.1px;">Texture detail</div>
<div class="grp" style="left:1514px;top:120px;width:215px;height:94px"></div>
<div class="rb" style="left:1525px;top:134px"></div>
<div class="t" style="left:1545px;top:134.3px;">Low (256x128x256)</div>
<div class="rb" style="left:1525px;top:160px"></div>
<div class="t" style="left:1545px;top:160.3px;">Medium (512x256x512)</div>
<div class="rb on" style="left:1525px;top:186px"></div>
<div class="t" style="left:1545px;top:186.3px;">High (1024x512x1024)</div>
<div class="t" style="left:1513px;top:221.3px;">Show area</div>
<div class="grp" style="left:1514px;top:239px;width:215px;height:95px"></div>
<div class="rb on" style="left:1525px;top:253px"></div>
<div class="t" style="left:1545px;top:253.3px;">Whole region</div>
<div class="rb" style="left:1525px;top:279px"></div>
<div class="t" style="left:1545px;top:279.3px;">The mine</div>
<div class="rb" style="left:1525px;top:305px"></div>
<div class="t" style="left:1545px;top:305.3px;">The mountain</div>
<div class="cb" style="left:1513px;top:343px"></div>
<div class="t" style="left:1532px;top:342.3px;">Alternate color table</div>
<div class="t" style="left:1513px;top:365.3px;">Alpha multiplier: 1.0</div>
<div class="sl" style="left:1514px;top:390.8px;width:214px"><div class="f" style="width:153px"></div><div class="h" style="left:144.5px"></div></div>
<div class="cb" style="left:1513px;top:410px"><svg width="12" height="12" style="position:absolute;left:0;top:0"><path d="M2.2 6.2 L4.6 9.6 L9.6 1.8" stroke="#111" stroke-width="1.7" fill="none"/></svg></div>
<div class="t" style="left:1532px;top:409.3px;">Preserve opacity</div>
<div class="cb" style="left:1513px;top:436px"></div>
<div class="t" style="left:1532px;top:435.3px;">Transparent ground</div>
<div class="cb" style="left:1513px;top:462px"><svg width="12" height="12" style="position:absolute;left:0;top:0"><path d="M2.2 6.2 L4.6 9.6 L9.6 1.8" stroke="#111" stroke-width="1.7" fill="none"/></svg></div>
<div class="t" style="left:1532px;top:461.3px;">Use HD shader</div>
<div class="cb" style="left:1513px;top:488px"><svg width="12" height="12" style="position:absolute;left:0;top:0"><path d="M2.2 6.2 L4.6 9.6 L9.6 1.8" stroke="#111" stroke-width="1.7" fill="none"/></svg></div>
<div class="t" style="left:1532px;top:487.3px;">Use perspective camera</div>
<div style="position:absolute;left:1513px;top:511px;width:216px;height:58px;border:1px solid #000;"></div>
<div class="t" style="left:1517px;top:511.3px;">Note: A high end graphics card is</div>
<div class="t" style="left:1517px;top:525.2px;">recommended with the HD shader</div>
<div class="t" style="left:1517px;top:539.1px;">when the volume contains a lot of</div>
<div class="t" style="left:1517px;top:553.0px;">transparent areas.</div>
</body></html>
